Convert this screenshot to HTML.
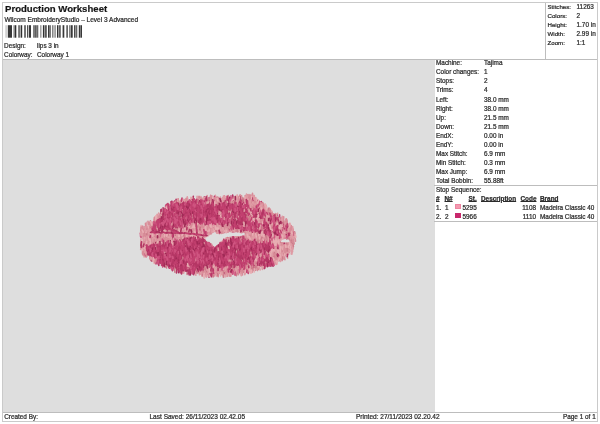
<!DOCTYPE html>
<html><head><meta charset="utf-8"><title>Production Worksheet</title>
<style>
html,body{margin:0;padding:0;background:#fff;}
body{width:600px;height:424px;position:relative;overflow:hidden;font-family:"Liberation Sans",sans-serif;color:#222;}
.t{position:absolute;white-space:nowrap;font-size:6.4px;line-height:8px;color:#2a2a2a;-webkit-text-stroke:0.22px #2a2a2a;}
.b{font-weight:bold;}
.u{text-decoration:underline;text-decoration-thickness:0.7px;text-underline-offset:0.4px;}
.ln{position:absolute;background:#bdbdbd;}
#frame{position:absolute;left:2px;top:2px;width:596px;height:420px;border:1px solid #cacaca;box-sizing:border-box;}
#gray{position:absolute;left:3px;top:59px;width:431.6px;height:353px;background:#dedede;}
</style></head><body><div id="pg" style="position:absolute;left:0;top:0;width:600px;height:424px;will-change:transform">
<div id="frame"></div>
<div id="gray"></div>
<div class="ln" style="left:3px;top:59px;width:594px;height:1px"></div>
<div class="ln" style="left:545px;top:3px;width:1px;height:56px"></div>
<div class="ln" style="left:434px;top:185px;width:163px;height:1px"></div>
<div class="ln" style="left:434px;top:221px;width:163px;height:1px"></div>
<div class="ln" style="left:3px;top:412px;width:594px;height:1px"></div>

<div class="t b" id="title" style="left:5px;top:3px;font-size:9.6px;line-height:12px;color:#111">Production Worksheet</div>
<div class="t" style="left:4.4px;top:15.5px;font-size:6.53px">Wilcom EmbroideryStudio – Level 3 Advanced</div>
<svg id="barcode" style="position:absolute;left:0;top:0" width="90" height="42" viewBox="0 0 90 42"><rect x="5.7" y="25.2" width="0.7" height="12.5" fill="#909090"/><rect x="7.8" y="25.2" width="4.2" height="12.5" fill="#383838"/><rect x="13.5" y="25.2" width="1.3" height="12.5" fill="#707070"/><rect x="15.0" y="25.2" width="1.3" height="12.5" fill="#303030"/><rect x="18.2" y="25.2" width="1.7" height="12.5" fill="#686868"/><rect x="20.6" y="25.2" width="1.6" height="12.5" fill="#303030"/><rect x="24.3" y="25.2" width="1.4" height="12.5" fill="#383838"/><rect x="27.1" y="25.2" width="1.2" height="12.5" fill="#404040"/><rect x="29.0" y="25.2" width="2.0" height="12.5" fill="#383838"/><rect x="33.1" y="25.2" width="1.8" height="12.5" fill="#707070"/><rect x="35.2" y="25.2" width="1.4" height="12.5" fill="#383838"/><rect x="36.9" y="25.2" width="1.4" height="12.5" fill="#686868"/><rect x="40.1" y="25.2" width="1.4" height="12.5" fill="#989898"/><rect x="42.9" y="25.2" width="1.1" height="12.5" fill="#303030"/><rect x="44.4" y="25.2" width="2.4" height="12.5" fill="#585858"/><rect x="48.0" y="25.2" width="1.0" height="12.5" fill="#383838"/><rect x="49.3" y="25.2" width="1.4" height="12.5" fill="#404040"/><rect x="52.1" y="25.2" width="1.4" height="12.5" fill="#787878"/><rect x="54.2" y="25.2" width="1.8" height="12.5" fill="#a0a0a0"/><rect x="57.0" y="25.2" width="1.0" height="12.5" fill="#303030"/><rect x="58.4" y="25.2" width="2.4" height="12.5" fill="#606060"/><rect x="62.6" y="25.2" width="1.7" height="12.5" fill="#383838"/><rect x="66.4" y="25.2" width="1.4" height="12.5" fill="#404040"/><rect x="69.2" y="25.2" width="1.4" height="12.5" fill="#686868"/><rect x="71.0" y="25.2" width="1.7" height="12.5" fill="#383838"/><rect x="74.1" y="25.2" width="1.4" height="12.5" fill="#383838"/><rect x="75.9" y="25.2" width="1.4" height="12.5" fill="#686868"/><rect x="78.8" y="25.2" width="1.3" height="12.5" fill="#383838"/><rect x="80.4" y="25.2" width="1.6" height="12.5" fill="#383838"/></svg>
<div class="t" style="left:4.1px;top:41.7px;">Design:</div>
<div class="t" style="left:37px;top:41.7px;">lips 3 in</div>
<div class="t" style="left:4.1px;top:50.5px;">Colorway:</div>
<div class="t" style="left:37px;top:50.5px;">Colorway 1</div>

<div class="t" style="left:547.5px;top:2.6px;font-size:6.15px">Stitches:</div><div class="t" style="left:576.5px;top:2.6px;">11263</div>
<div class="t" style="left:547.5px;top:11.6px;font-size:6.15px">Colors:</div><div class="t" style="left:576.5px;top:11.6px;">2</div>
<div class="t" style="left:547.5px;top:20.6px;font-size:6.15px">Height:</div><div class="t" style="left:576.5px;top:20.6px;">1.70 in</div>
<div class="t" style="left:547.5px;top:29.7px;font-size:6.15px">Width:</div><div class="t" style="left:576.5px;top:29.7px;">2.99 in</div>
<div class="t" style="left:547.5px;top:38.7px;font-size:6.15px">Zoom:</div><div class="t" style="left:576.5px;top:38.7px;">1:1</div>

<div class="t" style="left:436px;top:59.2px;">Machine:</div><div class="t" style="left:484px;top:59.2px;">Tajima</div>
<div class="t" style="left:436px;top:68.3px;">Color changes:</div><div class="t" style="left:484px;top:68.3px;">1</div>
<div class="t" style="left:436px;top:77.4px;">Stops:</div><div class="t" style="left:484px;top:77.4px;">2</div>
<div class="t" style="left:436px;top:86.1px;">Trims:</div><div class="t" style="left:484px;top:86.1px;">4</div>
<div class="t" style="left:436px;top:95.6px;">Left:</div><div class="t" style="left:484px;top:95.6px;">38.0 mm</div>
<div class="t" style="left:436px;top:104.7px;">Right:</div><div class="t" style="left:484px;top:104.7px;">38.0 mm</div>
<div class="t" style="left:436px;top:113.8px;">Up:</div><div class="t" style="left:484px;top:113.8px;">21.5 mm</div>
<div class="t" style="left:436px;top:122.9px;">Down:</div><div class="t" style="left:484px;top:122.9px;">21.5 mm</div>
<div class="t" style="left:436px;top:132px;">EndX:</div><div class="t" style="left:484px;top:132px;">0.00 in</div>
<div class="t" style="left:436px;top:141.1px;">EndY:</div><div class="t" style="left:484px;top:141.1px;">0.00 in</div>
<div class="t" style="left:436px;top:150.2px;">Max Stitch:</div><div class="t" style="left:484px;top:150.2px;">6.9 mm</div>
<div class="t" style="left:436px;top:159.3px;">Min Stitch:</div><div class="t" style="left:484px;top:159.3px;">0.3 mm</div>
<div class="t" style="left:436px;top:168.4px;">Max Jump:</div><div class="t" style="left:484px;top:168.4px;">6.9 mm</div>
<div class="t" style="left:436px;top:176.6px;">Total Bobbin:</div><div class="t" style="left:484px;top:176.6px;">55.88ft</div>

<div class="t" style="left:436px;top:185.8px;">Stop Sequence:</div>
<div class="t b u" style="left:436px;top:195px;">#</div>
<div class="t b u" style="left:444.5px;top:195px;">N#</div>
<div class="t b u" style="right:123.3px;top:195px;">St.</div>
<div class="t b u" style="left:481px;top:195px;">Description</div>
<div class="t b u" style="left:520.5px;top:195px;">Code</div>
<div class="t b u" style="left:540px;top:195px;">Brand</div>

<div class="t" style="left:436px;top:203.8px;">1.</div>
<div class="t" style="left:445px;top:203.8px;">1</div>
<div style="position:absolute;left:455px;top:203.5px;width:5.5px;height:5.5px;background:#f39ab0;box-sizing:border-box;border:1px solid #ee84a0"></div>
<div class="t" style="right:123.3px;top:203.8px;">5295</div>
<div class="t" style="right:64px;top:203.8px;">1108</div>
<div class="t" style="left:540px;top:203.8px;">Madeira Classic 40</div>

<div class="t" style="left:436px;top:213.2px;">2.</div>
<div class="t" style="left:445px;top:213.2px;">2</div>
<div style="position:absolute;left:455px;top:212.5px;width:5.5px;height:5.5px;background:#c8286c;"></div>
<div class="t" style="right:123.3px;top:213.2px;">5966</div>
<div class="t" style="right:64px;top:213.2px;">1110</div>
<div class="t" style="left:540px;top:213.2px;">Madeira Classic 40</div>

<div class="t" style="left:4.2px;top:412.6px;">Created By:</div>
<div class="t" style="left:149.5px;top:412.6px;font-size:6.53px">Last Saved: 26/11/2023 02.42.05</div>
<div class="t" style="left:356px;top:412.6px;font-size:6.53px">Printed: 27/11/2023 02.20.42</div>
<div class="t" style="right:4.3px;top:412.6px;">Page 1 of 1</div>
<svg id="lips" style="position:absolute;left:132px;top:184px" width="172" height="104" viewBox="132 184 172 104">
<polygon fill="#d88c98" stroke="#dedede" stroke-width="2.4" points="141.0,230.0 142.0,228.0 146.0,226.5 152.5,220.0 159.5,212.8 166.7,206.3 173.2,202.0 182.8,199.0 193.7,198.0 203.6,197.3 214.0,197.3 228.0,196.9 242.5,196.3 253.0,195.0 256.0,199.5 259.5,201.5 263.5,203.7 268.0,209.0 276.5,214.4 285.0,219.3 291.8,227.5 294.6,234.0 294.5,239.0 292.6,243.4 291.6,252.5 286.6,256.6 281.4,260.4 273.5,264.5 262.7,267.4 251.3,271.3 240.0,274.2 228.3,274.8 214.2,275.8 204.2,276.0 193.7,273.6 182.4,273.0 172.5,269.6 162.6,265.3 152.9,261.0 144.6,254.2 141.8,249.0 141.8,239.2"/>
<polygon fill="#bd3d6c" points="151.0,231.5 151.5,226.5 155.0,222.5 160.5,215.5 167.5,208.0 174.0,204.0 183.0,201.0 194.0,200.0 204.0,199.5 215.0,200.3 228.0,200.5 242.0,200.0 250.0,199.3 255.0,203.0 262.0,207.0 268.0,212.0 277.0,218.0 284.0,223.0 289.0,229.0 288.0,235.0 281.0,237.0 272.0,234.0 262.0,233.0 250.0,231.0 243.0,229.5 236.0,229.0 228.0,229.0 221.0,227.0 214.0,226.5 206.0,224.5 200.0,223.0 195.0,222.5 189.5,223.5 184.0,225.0 177.0,228.5 165.0,230.0 156.0,231.5"/>
<polygon fill="#bd3d6c" points="150.0,244.0 160.0,242.0 172.0,241.3 182.0,240.3 188.0,238.3 198.0,238.0 205.0,239.5 208.0,243.0 212.0,247.0 217.0,246.0 222.0,242.0 230.0,239.5 240.0,240.0 252.0,241.0 262.0,242.0 272.0,243.0 280.0,246.0 284.0,252.0 280.0,258.0 272.0,263.0 262.0,266.0 250.0,269.0 240.0,271.0 232.0,270.0 226.0,267.0 214.0,266.0 204.0,268.0 196.0,272.0 184.0,271.5 173.0,268.0 163.0,264.0 154.0,259.0 147.0,252.5 146.0,247.0"/>
<polygon fill="#dedede" points="203.5,239.0 207.0,236.5 211.0,233.5 215.0,232.0 219.0,234.0 224.0,233.0 230.0,232.0 238.0,232.3 245.0,233.0 246.0,235.0 240.0,236.0 232.0,236.2 226.0,237.5 222.5,240.0 219.5,243.0 216.5,245.5 214.0,247.5 212.0,243.5 207.5,241.5"/>
<polygon fill="#dedede" points="280.0,239.6 286.0,239.0 290.0,240.0 290.0,242.0 286.0,242.6 281.0,242.0"/>
<g fill="none" stroke-width="1.6" stroke-linecap="round">
<path stroke="#cc7c8a" d="M274.6 255.4l-0.3 2.0M254.7 231.2l0.6 3.4M182.7 257.0l-0.5 3.4M171.1 230.0l0.0 2.5M142.6 247.0l0.8 2.5M183.4 269.6l-0.3 2.9M283.0 251.0l0.6 2.0M290.1 238.0l0.1 1.5M227.9 225.5l-0.4 3.3M260.6 201.8l0.5 1.6M144.2 243.2l0.7 1.6M166.2 230.6l0.2 3.0M282.6 233.0l0.4 2.2M240.9 269.9l-0.4 1.9M277.2 225.9l0.8 3.3M290.5 234.3l0.2 2.3M260.0 222.8l0.7 2.0M274.5 234.0l-0.4 1.6M262.5 206.4l-0.5 2.4M237.1 212.7l0.3 2.9M243.1 236.2l0.0 1.5M227.1 266.5l0.7 2.9M217.2 273.1l-0.2 1.6M169.8 230.4l0.9 2.2M243.5 221.0l-0.5 3.3M173.8 237.3l0.4 2.1M253.1 214.1l-0.5 3.2M153.8 233.9l-0.2 1.7M245.1 264.8l-0.2 2.0M154.0 236.5l0.9 2.2M276.7 240.2l-0.3 1.7M226.6 214.7l0.1 2.9M146.6 230.6l0.7 2.0M269.1 237.3l0.7 1.7M259.6 219.9l-0.6 3.0M251.8 267.7l0.5 2.1M289.4 249.7l-0.3 2.8M289.3 249.7l-0.7 2.5M157.7 232.3l0.9 3.4M281.5 252.5l-0.0 2.4M210.6 201.0l0.3 1.5M190.4 271.3l-0.5 1.9M262.4 238.0l0.8 3.1M277.2 249.8l0.3 1.5M165.3 242.5l-0.5 1.4M199.0 198.9l0.3 3.1M289.4 244.6l-0.5 1.5M272.0 212.1l-0.2 2.0M194.6 233.6l0.7 3.4M202.7 229.4l-0.6 3.1M181.8 269.5l0.2 2.7M283.4 254.3l0.4 1.9M245.4 224.1l0.6 1.6M157.9 230.3l0.1 1.9M276.5 241.2l-0.0 2.0M275.4 251.2l0.0 2.5M289.8 246.8l-0.2 1.9M163.8 237.0l0.7 2.0M216.3 229.3l0.4 3.0M189.1 245.8l0.1 3.4M229.4 223.6l-0.3 2.2M270.2 251.6l-0.2 1.5M147.4 236.8l0.4 3.3M248.8 269.0l0.5 1.9M262.2 208.3l0.7 2.6M209.3 224.8l-0.3 1.8M237.9 218.4l-0.3 1.9M150.2 226.2l0.4 3.1M223.0 230.5l-0.6 2.5M226.5 227.0l-0.5 1.5M211.0 222.2l-0.4 2.2M274.7 260.1l0.9 2.9M248.2 227.6l0.1 2.4M195.7 233.7l-0.1 1.8M237.5 251.0l0.8 3.1M257.2 256.9l-0.0 2.5M243.6 222.5l0.6 2.9M241.1 230.3l0.7 2.3M219.2 224.5l0.2 1.5M234.9 196.9l0.7 3.1M251.3 239.7l0.2 1.5M236.2 200.4l0.6 3.1M249.0 267.8l0.5 1.7M247.9 235.7l-0.3 2.8M289.8 234.7l0.8 3.2M278.4 255.7l-0.0 1.6M163.9 230.4l0.8 2.3M250.1 264.4l0.1 2.9M174.6 238.4l-0.5 1.9M278.1 257.4l0.1 1.6M194.1 199.0l0.8 1.7M276.9 220.2l-0.3 3.2M237.4 204.2l0.6 2.2M205.7 225.5l0.3 1.9M277.9 252.6l0.8 1.8M268.1 239.6l0.4 1.6M261.2 222.4l0.7 1.9M272.9 257.5l0.9 1.6M267.1 212.2l0.0 3.4M195.4 229.7l-0.6 1.7M152.9 235.3l0.6 2.8M237.9 201.6l-0.4 3.4M157.8 239.5l-0.7 1.8M184.1 234.8l0.7 2.3M252.7 207.9l0.2 2.5M203.5 268.5l0.3 2.9M223.2 202.1l0.9 2.4M224.3 270.0l-0.3 3.0M152.8 234.2l0.8 2.8M248.5 212.1l0.3 2.9M153.3 222.2l0.3 2.1M221.6 216.5l-0.4 1.5M199.2 196.9l-0.1 2.6M254.1 195.7l-0.4 3.3M294.7 233.5l-0.4 2.8M258.5 266.7l-0.3 2.6M227.4 273.6l0.2 2.7M187.1 271.0l0.0 3.5M141.1 230.8l-0.5 2.9"/>
<path stroke="#d88c98" d="M276.4 249.1l0.9 1.6M281.2 223.4l-0.2 2.6M155.6 236.1l-0.4 1.9M163.4 234.2l-0.6 2.6M272.8 250.4l-0.1 1.4M185.7 234.2l0.9 3.3M230.3 271.7l-0.5 1.8M165.7 240.0l-0.4 1.7M202.5 223.3l-0.3 3.1M259.5 238.4l-0.3 1.9M194.5 259.8l0.1 2.0M249.5 230.0l-0.0 2.7M257.7 211.2l-0.0 2.1M177.8 237.3l0.7 1.9M218.2 227.5l0.8 2.5M243.4 261.6l0.1 2.8M228.4 238.7l-0.5 3.4M250.0 234.9l-0.1 2.2M174.6 212.7l0.4 3.2M193.7 232.5l-0.2 1.8M147.9 227.1l0.6 3.3M208.0 265.2l0.6 1.9M241.7 270.3l-0.3 2.8M285.8 229.6l0.0 2.7M149.1 239.3l-0.3 1.8M152.5 234.3l-0.2 1.9M256.5 201.2l-0.1 2.2M251.7 205.8l-0.7 2.9M158.1 235.6l-0.4 2.5M202.3 234.1l0.7 1.6M212.7 264.4l-0.1 1.8M218.8 198.3l-0.6 2.1M219.8 213.0l-0.4 2.7M221.6 227.6l-0.2 2.6M248.5 198.4l0.1 2.7M248.5 264.5l-0.4 1.8M286.3 221.4l0.6 2.2M283.0 229.6l0.7 2.0M221.0 229.2l0.9 2.0M224.3 217.8l0.8 1.5M277.8 247.8l0.7 2.0M226.5 202.1l0.8 2.1M238.4 221.5l-0.3 2.1M180.3 228.3l0.3 1.8M251.7 240.5l0.5 2.5M210.9 230.9l-0.6 2.9M221.4 271.8l0.7 2.4M169.9 236.2l0.7 1.9M275.7 215.1l0.0 1.7M183.3 234.6l0.8 1.9M148.1 238.8l-0.1 2.3M159.1 239.8l0.7 2.5M245.9 231.1l-0.6 3.1M248.4 266.6l-0.5 2.5M157.3 235.1l-0.1 2.4M283.1 243.7l-0.6 3.4M207.8 200.2l-0.6 1.5M196.4 221.7l0.4 1.6M144.9 243.2l-0.6 3.3M195.6 224.2l0.2 2.6M221.3 209.7l0.8 1.7M185.1 227.7l-0.5 3.0M278.3 237.3l-0.1 2.6M236.1 268.3l-0.2 3.1M216.0 269.5l-0.6 2.8M290.2 231.0l-0.0 2.1M279.6 225.7l-0.7 2.6M157.5 230.8l-0.2 2.2M142.4 246.6l0.1 2.5M146.4 228.7l0.4 2.8M202.1 231.6l0.2 2.0M170.3 236.2l-0.3 2.9M172.3 241.2l-0.4 2.0M206.4 232.8l0.0 2.3M276.4 249.8l-0.3 2.7M217.5 198.9l-0.2 2.7M224.3 242.0l0.7 2.6M144.9 229.0l0.6 1.4M248.5 196.2l-0.6 2.1M156.1 240.6l0.4 2.5M279.4 248.0l0.5 3.3M218.0 201.6l-0.2 2.2M183.8 228.7l0.8 3.2M145.3 238.5l-0.5 2.2M225.7 268.2l-0.2 3.3M202.1 200.6l0.9 2.9M161.8 234.1l0.4 3.2M166.6 234.4l0.7 3.0M235.2 229.1l-0.4 2.8M277.7 258.1l0.7 2.0M149.8 258.0l0.6 1.5M178.5 229.5l0.4 1.8M256.2 201.7l-0.7 2.1M222.6 226.5l-0.5 1.9M262.2 254.1l0.9 3.1M276.4 256.9l-0.6 1.7M202.7 199.7l0.5 2.0M267.4 214.8l-0.4 2.2M248.4 229.5l-0.1 1.6M201.9 226.6l-0.3 2.0M177.7 201.4l-0.3 2.1M217.0 271.4l-0.2 1.5M287.3 243.9l0.7 2.0M165.1 238.6l-0.3 2.1M245.7 244.5l0.8 2.6M233.0 201.9l-0.1 1.9M193.2 223.7l-0.1 2.7M247.7 233.4l-0.6 1.9M193.4 236.9l-0.7 1.4M292.1 241.9l-0.6 2.3M207.7 266.4l0.1 1.8M261.8 233.5l0.5 2.9M255.6 227.5l-0.3 1.7M279.0 256.7l-0.6 3.1M251.9 195.4l-0.5 2.8M261.1 229.2l0.9 2.2M236.6 269.5l-0.5 3.3M261.6 209.7l-0.1 2.3M150.8 230.5l-0.6 2.9M252.2 201.7l-0.6 1.5M146.7 243.2l0.4 3.0M292.0 237.1l0.8 3.1M157.0 232.9l0.9 3.3M189.0 223.1l0.4 3.0M158.4 237.2l-0.6 3.3M251.0 217.0l-0.6 2.1M167.2 236.0l0.3 1.9M214.5 263.9l-0.6 3.1M217.9 197.3l0.4 2.5M275.2 252.5l0.2 2.1M211.0 203.9l-0.4 2.2M220.1 232.0l-0.6 1.6M269.9 220.1l0.7 1.6M175.2 211.7l-0.2 2.9M212.7 255.8l0.3 1.8M247.4 215.4l0.2 1.6M241.2 269.4l0.1 2.6M274.1 245.5l0.8 2.1M191.1 226.7l-0.1 2.1M196.6 229.1l-0.0 2.6M226.7 201.6l-0.0 1.8M174.7 201.6l0.1 2.5M258.1 218.8l-0.2 1.7M219.1 265.2l-0.1 2.8M147.8 241.8l0.2 2.2M192.5 225.6l0.4 2.3M281.4 258.0l0.9 2.4M161.7 237.2l0.5 1.8M282.9 219.1l0.3 3.1M160.9 261.5l0.9 1.7M254.2 246.7l0.7 1.7M259.4 234.8l0.8 2.4M167.8 239.2l0.5 2.9M284.2 235.9l0.4 2.0M179.6 229.4l-0.2 2.0M210.1 225.5l0.9 2.8M160.2 234.7l0.6 1.5M257.4 256.4l0.2 2.2M235.3 257.0l0.1 1.5M149.6 245.0l-0.4 2.3M282.6 229.0l0.5 1.6M274.5 256.2l0.5 2.7M180.6 238.5l-0.2 2.2M180.2 235.5l0.5 1.8M146.4 232.1l0.5 2.8M196.1 258.2l-0.3 1.6M269.5 239.8l0.6 1.8M201.0 238.3l-0.6 2.3M277.3 246.3l0.1 2.8M287.8 252.1l0.9 1.9M279.7 253.5l-0.2 2.2M270.0 255.6l-0.3 2.4M284.1 233.1l-0.0 1.6M194.8 199.7l-0.5 2.0M272.5 255.4l0.7 1.7M151.3 226.5l0.7 1.5M289.2 227.2l0.2 2.9M276.9 250.8l0.8 2.7M183.8 225.2l0.6 1.7M290.8 230.4l-0.3 3.1M271.6 247.6l0.8 2.0M280.2 254.3l-0.2 1.7M226.2 224.4l-0.3 2.9M237.6 239.7l-0.5 1.6M247.0 222.4l0.2 3.3M226.5 270.3l0.8 2.2M218.4 201.1l-0.5 3.1M259.5 240.4l-0.6 3.2M254.2 231.8l0.3 3.1M193.5 236.2l-0.4 2.6M283.3 234.9l0.3 1.5M234.4 216.8l-0.2 2.4M270.8 227.2l0.8 3.0M250.4 232.5l-0.0 2.0M143.8 231.8l0.6 1.4M146.7 242.2l-0.7 3.2M217.4 200.2l-0.2 3.1M253.8 234.1l0.8 3.3M238.5 271.0l-0.0 2.3M283.4 225.8l-0.1 1.8M249.1 195.4l-0.1 1.9M265.5 237.8l-0.1 3.1M156.9 240.6l0.6 2.0M154.6 238.4l0.8 2.8M275.0 245.5l0.1 3.0M249.9 209.4l0.4 2.1M177.5 229.2l-0.3 2.2M149.7 242.9l0.4 2.8M254.3 237.1l0.5 2.5M217.3 261.2l0.5 2.3M272.4 254.1l-0.5 2.1M169.6 238.4l0.7 3.1M274.9 247.0l-0.6 2.6M152.7 237.6l0.1 1.6M223.5 228.3l0.7 2.8M211.8 273.3l0.9 1.9M250.8 209.7l-0.0 3.0M266.1 234.0l-0.6 2.1M148.0 236.5l0.5 3.1M173.2 230.7l-0.3 2.1M208.5 200.8l-0.2 2.7M242.1 267.0l0.2 2.5M250.3 251.8l-0.3 3.3M244.6 225.9l0.6 3.0M156.4 239.7l0.2 2.9M203.3 229.7l0.1 2.8M226.6 200.0l-0.6 2.7M276.0 249.4l0.3 2.1M267.7 236.8l-0.3 2.2M284.8 230.2l-0.1 3.0M186.3 263.4l0.5 3.3M153.4 257.5l-0.3 3.3M142.5 226.3l0.3 3.4M148.0 221.3l0.6 3.3M178.3 198.8l-0.3 4.2M199.0 196.2l0.0 4.3M210.8 195.6l-0.2 2.9M224.4 195.8l0.4 2.6M245.2 195.5l-0.2 2.8M252.5 193.2l0.1 4.2M275.3 213.5l0.5 2.7M290.5 225.1l0.4 2.9M294.9 237.0l0.6 4.1M292.8 245.3l0.2 3.7M252.5 269.0l-0.1 3.1M238.1 271.9l0.4 2.7M218.5 274.1l-0.3 2.5M150.1 256.4l0.6 3.7M142.6 249.7l-0.1 4.4"/>
<path stroke="#df9ba4" d="M288.3 231.4l0.2 2.4M263.6 218.2l-0.6 2.0M253.6 203.6l-0.1 1.9M197.6 226.3l-0.4 2.5M249.1 214.8l-0.6 3.0M278.9 236.2l0.9 2.7M152.4 222.8l0.6 2.4M238.0 237.5l0.2 1.9M220.6 198.6l-0.6 1.5M199.2 221.8l0.6 2.7M186.3 226.2l0.3 1.7M189.2 233.6l0.7 2.7M272.6 253.3l0.2 2.4M199.0 198.8l0.6 3.0M269.9 215.8l0.8 1.9M144.6 242.6l0.6 3.0M218.1 260.8l-0.3 2.5M282.3 233.5l-0.5 1.7M222.8 226.3l0.4 2.4M162.1 241.3l0.5 1.7M219.8 211.7l-0.1 3.4M167.9 233.2l0.2 2.0M207.0 268.7l0.1 2.5M207.7 225.0l0.1 2.6M235.5 237.6l-0.6 1.8M205.0 233.0l0.3 3.1M220.0 226.5l-0.4 1.8M192.2 233.5l-0.6 3.3M276.5 260.3l-0.5 1.7M208.1 267.4l0.9 2.5M281.9 256.7l0.8 1.4M204.6 272.5l0.4 3.4M193.8 248.0l0.6 1.8M207.4 230.5l0.9 1.7M221.3 213.8l0.2 2.5M213.8 228.8l-0.2 2.6M284.6 221.6l0.0 2.4M265.5 259.7l0.2 1.8M235.9 197.9l-0.2 1.8M257.1 256.0l-0.4 2.9M267.1 209.3l-0.4 2.5M230.1 271.9l0.0 3.0M226.1 271.4l0.7 1.9M167.2 234.9l0.5 2.9M173.5 268.4l0.7 1.9M292.7 237.0l0.1 1.9M237.5 237.8l0.6 3.3M252.2 236.3l0.7 2.5M156.5 259.3l0.4 2.1M227.0 226.8l0.8 2.9M284.4 254.2l-0.0 3.2M209.4 228.0l-0.3 1.8M154.1 219.9l0.3 3.3M189.2 228.4l-0.6 3.1M273.0 229.9l-0.6 2.0M204.4 228.3l0.2 2.1M285.7 231.3l0.1 2.3M202.2 271.3l-0.6 2.6M251.3 222.5l-0.3 2.4M189.3 266.7l-0.5 3.1M255.4 207.9l-0.6 2.3M240.4 210.7l0.7 1.4M248.4 234.4l-0.6 3.0M277.5 249.3l0.7 2.5M165.2 261.2l-0.7 3.0M257.6 219.0l0.4 2.8M241.8 266.0l0.3 1.5M218.3 268.8l0.8 1.8M278.7 246.0l0.7 2.0M168.2 204.8l-0.1 3.0M198.6 219.5l0.1 2.7M182.2 236.6l-0.0 2.7M264.2 231.1l-0.0 1.8M220.2 205.2l0.2 3.2M244.8 268.6l-0.6 3.0M171.4 240.6l-0.4 1.5M195.7 224.0l0.2 1.7M274.7 241.8l-0.5 1.5M216.1 230.8l0.8 2.4M145.7 226.2l0.7 3.1M250.7 236.4l-0.3 3.2M174.7 237.8l0.2 3.4M216.0 229.0l-0.7 2.2M161.8 241.2l-0.3 1.5M209.7 228.9l0.4 1.9M230.2 208.4l0.1 1.7M191.6 227.7l0.7 1.9M233.0 200.3l-0.5 2.8M258.6 203.5l-0.7 2.7M263.0 218.8l-0.1 3.0M165.1 207.9l0.4 2.5M145.1 228.5l-0.4 2.2M210.1 227.5l-0.5 1.5M249.9 236.0l-0.6 1.5M209.0 273.3l0.1 1.7M259.7 240.3l-0.1 3.3M264.3 253.4l0.1 3.3M152.8 244.9l0.3 1.8M148.8 245.2l-0.4 2.5M171.5 236.2l-0.2 1.4M168.5 230.9l-0.0 1.4M227.5 224.6l-0.2 2.5M146.6 251.6l0.4 2.4M218.7 228.9l0.7 2.4M153.1 232.0l-0.4 1.5M236.5 269.3l0.3 3.2M281.8 231.3l0.4 2.8M244.7 224.7l0.2 1.9M199.3 227.7l-0.2 3.0M182.4 229.7l0.7 1.7M252.0 235.7l-0.6 1.4M264.0 204.6l0.5 1.8M247.8 229.7l0.1 1.6M259.9 256.4l-0.2 2.5M232.4 268.0l-0.5 1.8M282.5 245.9l0.7 2.5M262.3 249.4l-0.3 3.1M236.7 266.0l0.4 2.5M262.5 254.5l0.6 2.6M280.5 243.1l-0.6 2.3M185.6 199.1l0.6 2.6M186.6 269.0l0.5 2.9M281.1 217.8l-0.4 2.2M196.6 257.3l0.6 2.0M231.7 198.8l-0.5 3.1M251.9 217.1l0.9 1.5M273.3 254.1l0.8 2.2M153.8 259.1l0.3 2.8M289.7 243.5l0.8 1.9M263.9 232.1l0.7 2.0M267.7 219.2l0.3 1.8M142.9 244.7l-0.0 3.2M266.3 263.1l-0.1 2.1M162.1 236.7l0.5 2.8M192.0 215.8l0.9 2.5M165.6 234.3l0.6 1.6M279.9 237.2l0.8 3.2M156.9 236.4l-0.7 2.4M236.2 238.0l-0.0 2.5M217.2 199.9l-0.2 2.6M181.5 231.2l-0.5 1.7M186.0 245.8l-0.4 2.7M237.6 267.9l0.4 2.7M160.2 235.2l-0.4 2.5M259.8 220.6l0.5 2.5M280.9 248.4l0.5 3.1M209.8 270.7l-0.5 1.4M211.5 197.7l-0.5 2.6M192.7 215.5l-0.5 1.9M248.9 265.3l-0.2 2.9M260.2 223.8l0.9 2.8M189.2 225.2l-0.3 2.4M249.2 228.1l-0.6 1.9M278.5 255.7l0.6 2.9M265.0 236.1l0.8 3.2M168.0 234.3l0.4 2.3M231.2 239.5l0.8 2.1M250.2 231.0l-0.6 2.4M150.7 221.2l-0.6 2.2M230.1 217.0l-0.6 2.7M224.7 216.6l0.1 1.8M256.5 256.4l0.8 2.3M214.8 271.1l-0.1 3.2M247.2 232.6l-0.2 1.7M257.7 232.9l0.7 2.7M193.5 220.1l0.8 1.7M200.0 270.6l-0.5 2.7M150.1 223.9l-0.2 1.8M192.0 221.4l-0.5 2.6M184.2 270.6l-0.6 2.6M201.6 234.5l0.9 2.9M276.2 248.3l-0.6 2.4M171.2 263.8l0.8 2.9M292.5 233.7l-0.1 2.2M290.6 242.5l0.8 1.8M231.6 229.1l-0.4 2.8M226.5 224.4l-0.4 2.2M215.1 203.5l0.6 2.8M254.7 205.7l-0.3 1.6M268.0 239.9l0.6 1.6M160.1 239.0l-0.1 1.8M226.0 266.7l-0.0 2.4M271.5 230.0l0.8 1.6M283.2 232.1l0.5 1.5M279.8 253.8l0.3 3.4M181.7 232.7l-0.4 3.3M257.4 233.7l0.1 2.8M290.3 234.8l-0.3 3.2M275.2 214.7l0.6 1.6M257.3 215.4l-0.7 2.2M262.5 251.4l0.5 3.1M259.0 204.6l-0.4 2.2M171.2 228.6l0.2 2.2M258.2 265.7l0.8 2.3M239.2 237.9l-0.6 3.2M223.8 228.5l-0.2 2.4M209.2 227.1l0.9 2.1M186.3 229.4l-0.0 2.3M208.2 233.2l-0.2 2.6M230.9 218.5l0.3 2.7M280.6 228.7l0.7 3.3M177.2 232.3l0.2 3.1M223.4 228.8l-0.2 1.4M272.2 250.8l0.5 2.0M212.5 267.2l0.9 1.8M217.6 200.6l0.8 1.9M289.8 235.0l0.1 3.2M148.5 239.4l-0.2 2.2M197.3 199.8l-0.1 1.8M258.8 210.9l0.4 2.4M221.5 241.7l-0.6 3.0M289.0 235.6l0.3 2.8M241.6 238.5l-0.5 2.2M180.2 201.6l0.4 2.6M252.8 206.0l0.5 1.8M234.5 266.4l0.9 1.7M249.1 195.9l-0.0 3.2M252.4 234.6l0.4 2.9M249.6 264.1l0.1 2.2M251.1 195.3l-0.7 1.4M206.5 228.9l-0.3 1.7M182.8 235.5l-0.3 3.3M179.8 238.1l0.2 1.5M168.9 235.6l-0.4 3.4M210.7 228.9l-0.3 2.5M261.3 236.1l0.2 2.1M269.7 234.0l-0.2 1.8M185.0 231.2l-0.5 3.2M193.2 230.3l0.9 1.4M214.8 203.1l-0.0 1.5M260.4 206.4l0.8 1.7M211.9 254.6l0.8 3.0M143.6 230.8l0.0 1.5M249.8 237.5l0.6 1.7M254.2 196.6l-0.6 2.3M229.3 227.2l-0.1 2.3M259.7 233.7l0.5 2.4M269.8 214.1l0.6 2.6M206.2 242.3l0.0 2.9M177.6 199.1l-0.5 4.2M200.9 196.5l0.2 3.1M224.4 196.4l-0.5 2.4M240.4 194.9l-0.3 4.2M263.2 203.0l-0.3 4.1M269.3 208.1l0.4 3.3M286.1 218.9l0.1 3.8M292.2 248.8l0.4 3.0M287.3 254.8l0.3 3.4M266.0 264.5l-0.4 2.7M250.4 269.8l-0.2 2.6M231.3 272.5l-0.4 3.7M217.1 272.4l-0.2 3.7M195.3 271.0l0.6 4.3M144.3 252.7l-0.2 4.3"/>
<path stroke="#e8aeb3" d="M281.7 245.0l-0.5 2.2M258.1 264.8l-0.2 3.2M260.4 210.1l0.2 2.0M199.1 268.9l0.7 2.6M252.5 230.6l-0.5 2.3M140.7 230.5l0.4 3.0M284.0 225.2l-0.2 1.4M161.1 241.3l0.3 2.6M156.2 235.8l0.2 1.8M276.8 247.8l-0.6 1.9M191.0 228.3l-0.1 1.4M192.6 232.7l-0.6 1.8M145.5 238.1l0.8 2.1M155.2 236.8l-0.4 2.9M273.9 248.9l-0.6 1.4M244.1 209.6l0.7 3.4M213.1 228.3l0.6 2.5M263.6 255.3l0.4 2.9M192.2 222.2l0.4 1.8M219.2 269.5l0.9 2.6M276.6 219.7l0.6 1.5M279.3 255.3l0.1 1.5M231.8 267.8l0.3 3.2M223.9 217.3l-0.3 1.9M261.5 207.9l0.2 2.7M271.0 229.4l0.4 2.5M195.5 220.9l-0.7 2.5M152.7 233.5l-0.2 2.2M212.7 222.5l0.2 2.7M276.4 242.7l-0.3 2.1M177.6 237.6l0.4 1.5M206.8 233.9l0.2 2.1M175.5 230.0l-0.2 2.7M158.8 230.3l-0.0 3.1M194.5 227.7l0.1 1.7M198.2 230.5l0.6 3.2M175.2 264.2l0.3 1.6M205.6 228.7l0.0 3.2M259.1 210.1l-0.6 1.8M162.6 233.6l0.1 2.0M270.0 226.0l-0.3 3.1M257.8 207.5l-0.1 2.2M236.6 208.7l0.8 1.8M198.1 228.9l-0.5 3.4M182.9 237.1l0.3 3.1M225.6 225.7l-0.3 1.6M210.4 225.7l0.2 3.0M276.4 218.1l0.2 3.3M153.9 240.3l-0.3 3.4M259.2 218.7l0.4 2.7M249.3 230.3l0.8 2.4M272.0 223.9l0.2 1.7M252.2 265.6l0.3 1.6M232.7 197.5l0.2 2.5M187.3 231.0l-0.1 2.9M283.6 244.0l-0.0 3.2M244.2 268.5l0.2 2.3M226.7 229.2l-0.6 1.6M189.6 232.9l0.7 2.0M282.3 224.9l0.0 1.9M172.9 236.8l0.6 2.6M243.2 223.9l-0.2 2.0M214.0 229.1l0.6 1.8M196.8 227.4l-0.3 2.4M223.2 198.3l0.7 2.8M212.8 273.2l0.5 2.2M229.6 270.9l-0.0 1.8M203.8 242.3l-0.3 1.8M250.8 203.7l-0.5 1.5M254.2 235.8l0.8 1.7M248.4 209.2l-0.5 1.4M192.8 249.8l0.0 3.1M275.4 250.9l-0.6 3.4M230.5 227.1l0.1 2.1M235.5 241.3l-0.3 3.3M234.0 229.9l-0.4 1.6M272.0 228.5l0.6 2.5M151.2 234.1l0.3 2.3M291.0 238.3l0.2 2.9M142.0 247.3l0.5 3.3M208.5 228.8l0.4 3.1M287.7 234.0l0.1 2.4M286.1 247.5l-0.6 1.7M198.4 225.7l-0.2 2.1M157.4 232.9l0.7 2.8M165.9 235.2l0.1 2.1M247.8 265.9l0.1 2.9M258.8 200.9l0.7 3.0M193.2 249.2l-0.0 1.6M208.2 200.6l-0.5 2.7M288.9 226.8l-0.4 1.5M248.3 230.0l0.8 2.9M216.1 202.8l-0.1 2.5M169.1 233.8l0.4 3.4M156.4 227.6l-0.4 1.4M212.7 224.0l0.5 2.7M291.8 238.2l-0.4 1.7M240.8 229.5l0.0 3.2M203.2 227.3l0.1 2.1M163.2 234.8l0.3 2.9M168.5 233.1l0.5 1.8M150.6 241.8l-0.4 2.6M274.5 250.4l-0.4 2.6M209.4 267.8l-0.7 3.4M195.2 223.2l0.6 1.7M226.2 237.8l0.6 2.1M247.7 227.8l-0.2 1.6M144.2 243.2l0.9 2.9M230.4 271.4l-0.1 1.8M252.2 234.4l0.3 1.8M236.3 217.7l-0.1 2.3M214.8 200.3l0.2 1.5M217.0 269.3l0.4 2.7M217.5 273.3l-0.4 1.5M171.7 236.4l-0.3 1.4M156.9 215.1l-0.0 3.9M256.8 199.0l0.0 4.0M271.5 210.5l0.5 3.6M277.0 260.3l0.1 3.8M250.1 269.7l0.1 3.4M204.0 275.4l0.2 2.6M141.1 235.7l-0.0 3.5"/>
<path stroke="#a02a56" d="M243.9 246.5l-0.7 1.7M236.7 260.0l0.6 2.2M167.0 245.9l-0.5 3.3M177.8 225.6l-0.4 1.5M169.6 219.2l0.6 2.9M222.0 255.1l-0.0 3.0M221.4 211.6l-0.2 2.5M168.2 248.1l0.7 1.8M156.0 222.6l-0.3 2.7M256.9 226.6l0.9 2.8M229.0 197.0l-0.2 3.4M183.1 202.3l-0.3 2.8M272.6 223.3l-0.1 1.9M159.1 225.3l-0.5 2.5M208.4 214.9l0.7 2.1M210.6 252.7l-0.2 2.8M247.0 218.7l-0.1 2.4M263.8 213.2l0.4 1.6M236.8 248.0l0.3 3.1M194.0 205.8l0.3 2.3M266.2 241.7l-0.5 2.2M272.3 261.3l0.2 2.8M192.7 209.6l0.4 2.5M227.4 257.2l0.1 3.1M207.1 213.7l-0.6 3.3M274.8 230.1l-0.2 1.7M238.7 257.8l0.5 3.3M264.6 255.8l0.0 2.1M275.9 216.8l-0.6 3.2M178.7 214.7l-0.7 2.4M189.6 216.2l0.5 1.9M194.5 209.8l-0.1 2.6M183.4 216.9l0.2 2.0M184.1 212.0l0.9 3.1M213.0 247.9l0.2 1.5M246.5 258.8l0.4 2.7M261.3 248.7l0.8 3.4M244.0 252.9l0.5 2.8M181.6 202.9l-0.2 3.0M238.6 205.1l0.6 2.0M195.7 203.0l0.5 2.6M248.2 259.9l0.4 1.8M195.3 212.1l-0.2 1.8M268.6 245.0l-0.7 2.8M225.6 209.3l0.8 2.2M173.5 223.1l0.0 1.8M210.0 258.2l0.7 1.5M177.1 216.8l-0.7 2.3M252.8 246.2l0.7 1.9M273.2 231.7l0.7 1.6M186.2 226.6l0.6 2.6M198.4 246.3l-0.2 3.3M171.8 263.5l0.3 2.4M186.0 210.6l0.0 3.3M189.1 242.8l0.0 3.4M202.5 205.5l-0.0 2.3M191.4 266.4l-0.4 2.3M190.8 256.2l0.1 1.4M184.3 210.3l0.5 2.7M272.2 262.6l0.3 1.9M191.4 214.1l0.6 2.1M230.0 220.3l-0.7 2.1M161.8 252.5l0.2 1.7M174.9 242.0l-0.5 1.9M243.5 236.9l-0.7 2.2M238.8 225.8l-0.3 1.5M209.1 252.3l0.4 2.8M254.5 258.3l-0.5 2.9M193.3 265.6l0.6 2.4M277.4 233.4l-0.0 1.7M239.2 222.4l-0.1 1.8M189.2 218.0l0.6 3.1M170.2 216.0l0.7 3.0M192.4 241.4l-0.5 1.8M213.2 210.1l0.2 1.7M198.7 239.9l-0.4 1.4M177.3 254.0l0.6 3.0M162.5 249.5l-0.5 3.0M243.4 228.1l0.3 2.0M259.6 248.5l0.3 2.5M226.1 221.1l-0.3 1.4M165.9 210.7l-0.2 3.1M268.3 224.2l0.8 2.3M261.4 256.7l-0.6 1.8M239.5 211.7l-0.0 1.6M233.6 269.0l-0.2 2.7M245.6 243.2l0.6 1.8M269.3 245.1l-0.0 2.9M218.4 248.5l0.6 2.8M229.4 212.2l0.2 3.2M277.7 217.5l-0.5 2.5M179.7 253.3l-0.5 2.3M256.8 251.3l0.3 2.3M181.0 221.4l0.7 1.4M157.5 223.4l0.7 2.3M242.6 242.1l0.4 2.8M264.7 218.0l0.0 2.9M205.3 244.1l0.7 2.7M277.4 228.2l0.2 2.2M224.5 257.8l-0.5 2.7M293.0 241.1l-0.6 1.5M176.6 239.4l-0.5 2.3M201.6 209.4l0.6 1.9M269.9 247.4l0.1 1.9M242.4 262.3l0.7 2.8M217.5 218.0l-0.3 2.7M164.3 226.3l0.9 2.1M241.0 206.6l0.2 3.1M184.6 203.4l-0.3 1.9M202.8 240.9l0.6 2.4M238.6 214.9l-0.2 1.6M165.5 255.7l-0.1 3.1M196.7 242.2l0.1 1.9M257.0 229.9l-0.7 3.2M182.3 224.3l0.2 2.9M182.2 262.2l0.5 2.8M198.7 238.4l-0.3 2.3M254.5 253.3l0.6 3.2M252.1 222.6l-0.4 2.3M198.9 250.0l0.0 1.4M240.1 246.8l-0.7 2.9M187.2 244.2l-0.6 3.3M155.0 254.8l-0.6 2.4M170.2 240.6l-0.1 2.1M167.8 208.8l0.6 1.7M171.6 221.5l-0.3 1.7M199.4 200.8l0.5 3.1M254.1 256.5l-0.2 3.3M187.6 219.8l0.6 2.5M217.7 207.0l0.0 2.1M195.7 216.8l-0.6 1.4M249.7 227.8l0.6 1.8M197.7 216.6l0.4 1.5M177.5 258.9l0.3 2.1M185.6 260.4l0.7 1.9M234.8 253.9l-0.5 1.6M254.2 222.8l0.7 1.5M155.6 224.8l-0.3 2.5M175.7 245.3l0.3 3.1M231.7 222.2l0.3 1.7M235.7 208.7l-0.7 1.5M164.3 214.5l0.3 1.7M254.0 262.1l0.6 2.5M221.0 245.4l0.4 2.3M244.8 217.7l0.5 1.9M203.2 212.9l-0.5 1.8M191.9 262.6l0.5 2.3M162.7 244.6l0.9 1.4M259.3 211.8l0.5 2.9M180.2 213.8l0.0 1.7M243.2 208.3l0.5 1.5M195.7 215.8l0.6 3.3M230.2 250.6l-0.3 1.5M154.7 244.7l-0.1 2.7M199.3 265.4l0.8 3.1M172.6 209.0l-0.1 3.4M258.8 251.4l-0.2 3.2M170.3 240.7l0.3 2.5M242.9 246.7l-0.2 2.4M240.6 229.5l0.4 1.8M171.5 212.5l0.2 3.0M238.5 262.4l0.4 3.3M170.3 246.0l0.8 3.1M225.7 244.9l0.2 1.7M247.7 261.6l0.4 1.8M159.1 228.0l0.6 3.4M254.1 215.6l-0.4 1.5M250.1 261.3l0.6 2.2M241.0 213.7l-0.2 2.6M188.7 205.7l-0.2 1.5M180.6 222.9l-0.6 2.6M204.8 201.1l-0.7 2.3M271.2 260.2l-0.5 2.7M206.1 253.3l0.3 1.9M184.3 239.5l-0.2 1.7M152.3 250.3l0.5 2.5M268.7 247.1l-0.1 3.2M160.4 255.5l0.8 3.3M253.5 250.6l-0.4 2.4M213.5 263.1l-0.3 2.1M204.1 207.4l-0.1 3.4M172.7 227.9l0.2 2.6M171.5 204.0l-0.2 1.7M186.0 263.8l0.8 3.1M289.4 233.2l0.8 2.0M206.2 210.6l0.3 2.5M277.3 217.5l0.8 1.4M155.9 239.4l-0.4 2.8M234.7 245.5l0.7 3.0M253.3 230.0l-0.7 1.7M191.1 260.4l0.1 2.6M207.5 211.5l-0.1 3.0M255.2 213.7l0.5 1.9M229.8 243.8l0.6 1.7M170.2 217.3l0.0 2.3M244.9 254.2l-0.0 2.6M185.3 242.1l0.4 1.9M194.2 210.6l-0.2 1.8M236.6 222.3l-0.6 1.7M199.0 240.5l-0.0 1.7M222.3 199.0l0.2 1.5M176.4 217.1l0.8 2.0M153.4 249.7l0.1 2.3M226.8 241.8l-0.1 2.2M255.2 256.6l0.2 2.6M221.4 220.7l0.4 1.8M208.4 253.5l0.1 2.0M233.2 252.3l0.4 2.5M177.2 216.9l-0.2 2.1M171.8 201.2l0.4 2.9M178.8 270.0l-0.2 2.8"/>
<path stroke="#b43664" d="M221.0 248.5l0.4 2.4M204.1 262.9l0.2 3.1M155.7 228.0l0.7 3.0M211.7 260.9l0.0 2.1M269.5 246.7l-0.4 2.9M171.3 260.8l0.5 2.4M163.5 260.2l0.2 2.0M237.2 214.4l0.2 2.2M234.3 213.9l0.6 1.9M261.9 258.0l-0.3 1.9M250.1 221.6l-0.7 1.9M189.3 261.3l-0.6 2.4M161.4 246.7l0.2 2.4M272.7 260.5l-0.5 3.4M165.7 220.3l-0.5 3.4M181.3 249.3l0.2 1.5M201.2 250.4l0.9 1.8M182.0 252.8l0.9 1.6M261.6 242.5l0.8 3.2M178.6 243.2l-0.2 2.5M171.3 264.1l0.3 2.4M193.8 237.0l0.3 3.3M191.7 256.0l-0.0 1.4M164.1 212.4l0.4 2.7M207.2 260.4l0.2 2.6M199.1 238.3l-0.7 1.5M239.2 213.4l0.3 2.0M205.0 217.0l-0.2 2.2M218.6 264.7l0.8 2.2M266.5 245.4l0.0 1.4M223.0 243.3l0.9 1.4M262.6 258.2l0.0 2.0M172.7 209.8l0.3 2.3M236.8 246.3l-0.2 3.3M247.7 240.4l-0.3 2.5M194.7 201.6l-0.4 3.2M232.4 258.9l-0.2 3.4M244.6 210.0l0.2 2.6M280.6 254.6l0.8 3.1M214.5 213.6l0.1 3.0M227.9 256.5l-0.4 2.9M250.2 222.1l0.6 2.6M195.1 216.5l-0.3 1.5M233.6 250.5l0.2 2.5M168.4 243.0l-0.6 2.8M171.4 209.4l0.4 3.4M197.2 212.6l0.2 3.4M188.7 243.8l-0.6 2.2M237.2 261.8l0.4 2.8M224.6 257.0l0.8 3.1M202.4 240.9l0.3 3.2M249.3 211.5l-0.1 2.7M170.1 257.4l-0.7 2.7M247.9 255.8l-0.3 3.4M248.1 196.8l-0.4 3.3M186.6 214.4l0.8 2.3M246.1 202.3l0.5 1.9M212.1 258.8l-0.1 1.7M188.1 216.9l0.0 3.4M174.4 250.9l0.7 2.9M178.8 216.2l-0.3 1.5M188.7 242.7l-0.2 2.7M190.2 202.7l-0.5 2.8M192.4 209.6l0.3 1.8M240.4 238.5l0.6 3.0M202.7 259.2l0.0 2.9M205.4 256.3l0.3 3.2M213.4 206.6l-0.3 2.2M264.2 210.5l0.4 2.3M225.5 200.5l-0.6 2.1M173.0 255.0l0.8 2.1M252.0 228.3l0.3 3.1M232.4 244.4l0.5 2.2M169.2 209.2l0.4 1.5M192.7 215.4l0.0 1.4M171.9 213.3l0.1 1.9M280.4 223.5l0.3 1.4M265.8 233.4l0.9 2.8M253.5 243.8l-0.5 2.9M183.4 205.5l-0.3 3.2M237.5 201.6l0.3 2.9M154.3 252.1l0.7 2.0M216.7 206.3l-0.3 2.2M206.6 244.4l0.7 2.3M275.6 230.6l-0.3 2.8M230.4 221.5l-0.2 1.9M231.6 222.4l-0.3 2.8M204.6 258.1l0.6 2.9M161.9 252.8l0.0 3.0M189.6 251.3l-0.3 3.4M173.8 244.7l0.8 1.4M274.6 228.9l-0.1 1.6M222.7 243.5l-0.2 3.3M219.6 249.0l0.2 2.6M167.9 245.4l-0.5 1.7M178.4 211.5l-0.1 2.9M248.0 224.2l0.1 2.6M194.0 262.7l-0.2 3.1M169.3 264.7l-0.4 1.4M173.5 255.1l-0.4 3.3M181.0 211.6l-0.6 2.2M171.9 260.7l0.6 2.8M170.9 216.8l0.6 1.5M238.0 199.8l0.5 3.0M188.9 216.7l-0.5 3.4M244.6 213.6l0.1 2.9M238.9 265.0l-0.4 2.7M229.1 257.6l-0.1 2.1M153.8 251.3l-0.0 2.1M212.9 204.5l-0.7 2.6M194.4 266.0l-0.2 1.8M200.7 256.3l-0.0 1.7M175.7 221.9l-0.2 1.9M241.1 259.5l-0.3 2.9M187.1 256.7l0.2 1.8M188.8 218.8l-0.5 3.0M236.3 204.9l0.6 1.5M167.0 217.5l0.1 1.4M191.3 251.0l0.3 2.8M223.5 261.9l-0.3 2.0M229.5 268.2l-0.2 2.2M185.2 244.1l-0.0 2.9M206.0 222.3l0.3 1.5M270.1 232.5l0.0 2.5M200.1 266.6l-0.1 1.8M183.5 241.4l0.7 2.7M255.9 229.1l-0.5 3.1M180.2 262.4l0.7 1.9M192.1 210.8l-0.4 1.7M211.6 251.0l0.1 1.8M208.4 244.0l0.8 2.2M267.2 263.5l0.1 2.3M200.5 242.8l0.7 2.8M208.0 248.1l0.8 3.0M251.8 222.8l-0.6 3.0M161.9 213.7l0.3 1.6M174.5 262.4l-0.5 3.1M236.2 220.8l-0.3 2.5M166.4 257.8l-0.6 2.1M187.7 213.9l0.8 2.3M207.8 212.9l0.2 3.1M213.5 199.6l-0.2 2.5M232.2 268.9l0.7 3.2M240.9 267.2l-0.1 1.5M220.4 207.8l0.1 2.3M225.7 227.1l0.3 1.7M203.3 254.1l0.5 3.0M183.8 207.4l0.7 3.2M238.1 254.0l0.9 2.6M168.8 211.1l0.0 1.9M167.4 259.8l0.6 1.5M221.1 243.6l-0.5 1.8M183.1 260.7l-0.1 1.7M270.3 249.5l0.2 2.3M276.8 227.9l0.5 2.7M251.9 226.0l-0.6 1.6M214.5 257.3l-0.6 2.5M191.8 239.0l0.7 2.5M189.8 217.3l0.3 3.0M172.6 226.4l-0.3 3.2M168.0 256.2l-0.6 3.1M229.7 262.4l-0.2 2.0M242.3 223.9l0.1 3.1M181.5 242.4l0.5 3.1M215.6 205.1l-0.2 2.2M223.9 250.3l0.2 1.7M248.6 244.2l0.3 3.1M251.2 209.4l0.7 2.8M221.4 202.8l0.1 2.7M192.0 252.9l-0.4 3.0M187.3 244.0l-0.0 2.4M165.2 224.7l-0.1 3.1M225.1 245.1l-0.4 2.3M199.5 263.7l0.2 3.0M229.4 268.3l-0.6 1.8M162.5 243.7l0.4 2.8M247.6 217.5l0.5 2.2M256.1 245.8l-0.0 2.5M242.4 199.0l-0.7 2.9M168.9 262.0l0.0 2.7M204.7 217.6l0.6 2.7M243.2 206.9l0.0 2.1M268.9 259.6l0.4 2.2M180.6 213.4l-0.0 2.0M195.2 208.2l-0.0 1.7M179.5 270.1l0.5 1.8M193.4 240.8l0.0 3.1M168.5 219.6l0.5 2.6M175.3 226.5l-0.3 3.0M251.6 257.4l-0.4 2.7M247.2 245.6l-0.0 1.9M208.8 256.6l0.3 2.7M224.4 244.7l-0.5 2.4M204.8 250.7l0.6 3.1M204.0 245.3l-0.5 2.8M215.2 220.3l-0.7 2.5M177.7 211.2l0.6 2.9M150.1 253.3l-0.6 2.1M233.9 269.9l-0.6 3.3M196.0 200.5l-0.1 1.6M208.1 263.4l-0.6 2.0M197.6 199.6l-0.7 2.9M187.7 242.2l0.8 3.3M247.8 197.9l0.1 1.8M161.0 217.5l0.1 1.8M267.2 257.0l0.3 2.9M211.9 258.1l0.8 2.0M164.3 244.8l0.7 3.0M200.2 204.0l0.6 2.5M262.4 252.2l0.6 2.7M219.1 256.4l0.7 2.3M268.8 241.5l-0.4 2.7M260.8 227.4l0.7 2.2M253.5 213.0l-0.3 3.1M190.1 247.5l0.2 1.9M187.5 246.8l0.0 1.8M263.3 262.8l-0.1 2.5M183.9 217.1l0.7 2.3M270.4 236.0l0.1 3.1M167.0 216.3l-0.1 2.6M181.5 248.7l0.1 3.0M179.1 256.2l-0.4 2.4M203.3 249.9l-0.3 2.4M242.3 214.2l-0.6 3.3M203.9 207.6l-0.6 1.5M257.3 261.2l-0.6 2.0M189.2 255.6l-0.2 1.8M190.0 244.2l-0.1 2.6M236.0 208.7l0.6 2.2M180.7 262.6l0.8 2.0M174.6 248.5l0.2 1.5M227.1 208.5l-0.3 2.4M255.7 207.8l0.9 2.6M216.4 206.6l-0.2 2.5M188.4 247.9l0.3 2.0M181.5 241.0l0.7 3.2M191.2 241.2l0.7 2.8M162.8 252.7l0.8 2.0M171.5 226.1l-0.4 3.2M189.8 258.5l0.4 1.4M221.8 222.5l0.6 2.6M232.9 238.0l-0.2 2.0M201.1 262.1l0.1 2.9M232.1 251.5l-0.7 2.7M251.3 252.9l0.6 3.2M229.6 248.7l0.0 2.6M158.0 219.5l-0.3 3.4M220.8 252.7l0.9 3.0M249.7 258.2l0.3 2.1M160.9 228.3l-0.1 2.1M266.5 248.0l0.3 3.2M190.4 230.2l-0.4 3.0M268.5 240.9l0.5 1.6M237.9 223.4l-0.1 1.8M227.6 210.4l-0.2 2.7M183.1 267.2l-0.3 3.2M161.9 255.2l-0.2 2.9M214.0 263.1l-0.4 2.0M227.5 212.1l0.5 2.7M206.7 256.8l-0.1 2.0M159.9 248.5l0.1 2.2M165.5 250.6l-0.2 2.8M288.7 232.1l-0.3 1.6M210.8 249.6l-0.3 1.4M220.6 247.1l0.1 3.2M246.6 261.6l0.3 3.2M200.8 242.3l0.2 1.7M164.7 220.9l-0.2 2.1M193.8 246.5l0.0 1.8M245.4 255.4l-0.2 2.9M227.2 212.9l0.1 2.1M179.4 242.1l0.3 2.1M189.0 221.1l-0.3 3.2M172.2 230.1l-0.0 2.3M201.4 257.8l0.9 3.2M260.9 221.6l0.3 2.8M263.3 256.3l0.8 2.6M218.0 210.2l0.2 1.7M197.3 241.4l0.7 3.1M169.0 248.2l0.7 2.3M162.7 259.8l0.3 1.9M164.7 263.5l0.2 2.7M251.6 247.9l0.8 2.2M183.2 207.6l-0.0 3.0M186.7 214.9l-0.2 1.5M188.4 265.1l0.6 2.3M237.2 218.4l-0.1 2.2M180.8 223.1l0.0 1.7M263.3 251.9l-0.1 3.3M242.7 203.8l-0.5 3.0M206.6 262.8l-0.7 2.2M264.0 264.4l-0.3 1.7M223.1 263.7l-0.6 1.4M200.9 219.2l-0.5 2.2M249.7 250.6l-0.6 3.3M162.1 225.4l-0.6 1.6M209.5 255.9l0.6 1.5M187.8 200.6l0.6 2.4M192.9 245.3l0.7 2.1M210.5 245.0l-0.3 2.1M205.4 261.5l-0.6 3.3M269.3 242.5l0.3 1.9M158.0 221.9l-0.6 2.7M199.3 220.8l-0.2 1.8M213.7 204.4l-0.6 2.0M153.7 250.0l-0.5 1.7M244.2 257.5l-0.5 1.8M210.2 261.9l0.4 2.7M189.0 221.1l-0.2 3.3M168.3 260.6l0.2 2.9M259.5 258.0l-0.7 2.9M186.4 266.6l0.4 3.1M156.4 251.9l-0.4 2.7M199.3 252.4l0.2 2.4M188.6 211.9l-0.5 2.8M273.6 225.1l-0.2 2.0M244.2 212.0l0.0 2.7M193.2 208.8l0.2 3.3M253.5 200.6l-0.5 2.0M192.3 245.5l-0.3 1.8M176.1 218.4l0.4 2.1M245.0 217.8l-0.0 1.6M245.2 239.1l-0.1 3.0M204.4 247.1l0.5 3.0M238.4 224.7l-0.5 2.4M168.4 256.0l-0.3 2.7M231.3 264.2l0.6 2.9M188.2 248.2l0.1 3.0M198.5 237.4l-0.6 2.9M181.0 239.0l0.2 2.4M213.3 248.5l0.2 2.6M180.7 246.3l-0.6 3.3M263.6 246.2l-0.5 1.7M267.9 242.4l0.3 2.5M235.8 227.2l-0.5 2.2M158.5 253.1l0.2 1.4M254.6 210.3l-0.5 2.1M229.5 244.5l-0.7 1.8M160.4 224.3l-0.3 2.0M207.0 272.6l0.9 1.5M270.3 220.8l-0.0 2.8M244.6 213.0l0.2 3.4M190.1 270.6l-0.2 1.9M206.8 267.6l0.3 1.4M239.4 218.6l0.1 2.3M230.6 224.0l-0.4 1.8M187.7 243.3l0.7 2.8M223.2 209.4l0.6 3.3M237.7 250.9l-0.4 3.4M214.8 212.5l0.9 1.8M219.3 202.2l-0.2 2.3M282.1 227.8l-0.5 3.4M204.7 216.5l-0.1 2.6M203.2 264.2l0.1 2.9M240.7 218.7l-0.2 3.4M243.7 247.7l0.2 2.5M247.9 241.0l0.3 2.6M164.6 214.1l0.5 3.3M266.2 231.5l-0.2 2.9M243.5 204.3l-0.3 2.4M206.0 214.0l0.1 2.0M194.7 263.6l0.1 1.5M149.7 249.9l-0.1 2.8M188.5 203.9l-0.4 2.6M248.1 240.1l-0.7 3.0M201.7 208.5l-0.0 3.0M157.9 246.8l0.7 3.1M259.9 250.6l-0.2 3.4M183.2 217.1l0.9 2.1M169.1 259.6l-0.5 3.3M205.6 231.1l0.1 1.7M242.3 205.6l0.5 2.2M244.3 214.2l-0.1 1.8M192.9 237.9l0.3 2.7M155.0 233.1l-0.4 3.1M233.5 201.9l0.3 3.0M268.8 255.8l-0.1 3.2M180.4 256.4l-0.6 2.3M259.1 256.9l-0.1 1.9M210.2 217.6l0.8 2.7M212.5 216.6l0.6 2.4M244.7 250.7l0.8 1.4M160.9 209.9l0.2 4.0M176.1 199.2l-0.2 2.9M232.7 195.1l0.5 3.6M271.4 262.9l-0.5 3.2M209.0 273.6l-0.0 3.6M188.5 270.9l-0.3 2.9M172.9 267.8l-0.4 2.8M157.0 259.3l0.3 4.0M140.8 232.7l0.3 4.3"/>
<path stroke="#c2406f" d="M239.7 263.9l-0.2 1.6M214.6 257.6l0.9 2.0M190.8 263.4l-0.5 1.7M222.6 244.5l-0.2 2.1M255.6 254.0l-0.5 2.0M159.7 261.8l0.6 1.4M199.4 218.4l-0.7 2.2M239.3 205.6l-0.3 1.6M245.1 263.4l0.4 2.1M172.0 242.6l-0.6 2.4M255.6 251.4l-0.4 1.7M167.1 208.0l-0.3 2.8M229.1 226.8l0.3 2.8M171.7 225.6l-0.4 2.8M169.1 247.1l0.5 3.2M204.5 219.0l0.7 3.0M159.0 224.2l-0.6 2.9M206.3 222.6l0.8 2.7M185.7 269.3l0.4 1.5M252.3 226.7l-0.6 2.4M158.7 255.4l-0.4 3.3M191.6 263.3l0.8 2.6M250.3 229.1l-0.0 1.7M243.7 251.4l0.3 2.3M193.6 260.6l-0.2 1.6M219.7 216.0l0.5 3.2M174.2 213.9l0.4 3.1M280.9 223.5l-0.6 1.6M169.2 249.3l0.8 1.5M202.5 249.5l-0.0 2.1M265.4 240.3l-0.1 2.4M192.7 213.4l0.5 3.0M179.9 246.7l0.4 1.5M236.1 209.9l0.5 1.6M251.8 227.3l0.1 3.3M159.3 251.9l0.3 3.4M231.9 255.8l0.8 2.2M161.4 225.4l0.6 1.6M208.7 252.8l-0.2 1.5M177.8 259.2l0.3 1.8M269.0 244.0l0.5 3.2M223.4 265.7l0.7 1.4M178.9 261.7l-0.5 2.0M169.8 246.9l-0.5 1.9M209.2 271.0l0.1 2.8M176.3 242.9l0.5 2.3M181.4 240.9l0.3 3.1M224.8 249.0l-0.3 3.1M249.7 222.2l0.0 1.6M230.3 203.8l0.2 3.4M222.0 212.6l-0.6 2.0M145.2 253.9l0.4 2.1M201.3 222.0l0.4 2.0M226.3 210.2l0.6 1.9M189.6 236.1l0.2 3.4M197.7 210.9l-0.0 2.8M192.8 262.8l-0.1 3.1M159.1 225.0l-0.7 3.2M186.1 221.7l0.7 1.7M263.2 253.1l0.8 1.8M228.9 262.3l0.4 2.0M217.4 218.8l-0.5 2.0M242.2 250.6l0.0 2.9M182.0 246.3l0.4 3.3M156.2 227.7l0.4 3.2M171.0 222.2l-0.7 2.6M234.4 206.0l-0.3 2.4M267.2 262.6l0.5 2.7M230.8 197.8l-0.5 2.2M233.4 220.6l0.5 3.1M164.7 219.2l-0.6 1.9M233.8 222.4l-0.0 2.1M175.3 208.6l0.7 2.3M199.9 254.3l0.4 1.9M257.2 214.7l0.3 3.3M246.0 258.7l0.2 2.3M227.1 252.1l-0.3 2.8M240.7 200.4l0.3 2.5M191.0 241.7l0.5 2.1M194.0 206.7l0.6 3.2M283.5 224.9l0.5 2.6M227.9 215.0l0.1 2.8M251.0 250.8l-0.0 3.1M204.8 204.3l0.4 2.8M207.6 259.0l-0.3 3.0M173.5 252.8l-0.0 3.3M243.2 217.4l0.2 3.3M232.9 236.7l0.2 2.6M247.2 260.9l0.6 2.7M211.1 263.5l0.2 2.1M222.7 243.1l-0.4 2.4M201.0 220.4l0.6 1.7M208.1 252.0l0.6 1.7M262.9 225.7l0.5 2.6M188.1 210.1l0.2 2.7M223.2 212.9l-0.5 2.2M186.9 214.7l0.1 1.6M221.3 253.0l0.6 3.3M164.2 245.7l0.2 2.4M247.6 242.9l0.8 3.1M272.3 246.3l-0.4 1.7M188.8 202.1l-0.3 2.2M181.1 256.3l-0.0 2.5M245.4 201.7l0.6 1.7M194.4 248.0l0.8 3.0M252.8 246.9l-0.3 1.8M267.8 248.9l-0.5 2.9M223.5 211.9l0.1 2.4M224.1 243.9l-0.3 3.3M194.7 254.5l0.0 2.8M187.3 217.0l-0.5 2.3M234.3 243.7l0.7 2.5M180.2 264.9l0.6 1.6M177.1 219.7l0.4 2.8M213.5 216.6l0.6 2.0M265.5 232.1l0.8 3.0M214.2 258.6l-0.3 2.2M166.7 261.6l0.6 3.0M261.5 251.3l-0.7 1.6M230.8 212.0l0.6 3.3M154.7 222.0l0.7 3.0M234.6 269.7l-0.6 1.8M152.2 254.0l-0.0 2.7M161.3 215.8l0.9 1.8M152.9 229.8l0.7 2.1M189.5 250.1l0.3 1.5M162.8 242.3l-0.3 1.7M231.7 205.7l-0.5 1.9M179.4 258.3l-0.6 1.8M191.3 217.0l-0.4 3.0M215.5 219.1l0.3 2.1M202.7 255.5l-0.5 1.6M200.2 265.8l-0.1 3.1M226.3 243.0l0.7 3.1M243.8 207.8l-0.3 2.6M175.5 250.9l-0.2 2.4M265.6 231.3l0.3 2.5M170.4 219.6l0.4 2.4M269.6 244.2l0.2 2.8M176.6 217.3l-0.6 2.3M219.4 220.6l0.6 2.7M252.2 253.0l0.0 2.6M200.6 264.9l0.8 1.6M229.1 239.3l0.3 2.5M231.5 219.0l0.5 3.3M180.5 259.1l-0.7 2.7M213.7 218.4l-0.0 2.4M159.0 216.7l0.7 2.1M156.9 222.7l0.5 3.2M235.0 251.7l-0.2 3.3M240.2 204.2l0.1 2.7M227.1 205.7l0.5 1.7M185.5 253.7l-0.1 1.8M191.1 247.3l-0.6 1.8M251.7 227.9l-0.4 2.9M193.0 209.4l0.7 2.4M237.6 256.1l0.4 2.0M246.9 221.3l-0.2 2.9M191.0 203.7l-0.1 2.8M209.1 255.3l0.1 2.9M179.9 259.8l0.0 3.1M180.7 270.1l0.3 2.7M191.0 218.6l0.9 2.8M171.0 242.8l-0.3 2.4M150.3 252.1l-0.5 1.8M237.7 257.6l0.5 3.4M231.5 239.8l0.0 3.2M237.0 253.3l0.2 2.9M244.4 209.2l0.6 2.1M236.5 202.0l-0.2 1.9M155.0 250.1l-0.6 1.5M211.5 269.3l-0.3 2.3M190.4 267.8l0.4 2.9M148.9 251.3l-0.2 2.9M174.3 221.9l-0.4 3.2M231.0 255.9l0.5 1.9M249.4 261.8l-0.1 3.2M185.4 261.1l0.1 2.9M262.4 210.1l0.9 2.8M231.0 215.1l-0.7 1.4M213.0 220.1l0.3 2.5M151.8 246.2l-0.0 3.0M177.1 247.8l0.4 3.1M179.3 218.2l-0.1 2.7M177.7 223.6l-0.7 3.0M208.9 257.2l0.2 2.7M238.0 238.7l0.0 2.3M219.0 220.9l0.1 3.4M159.4 225.2l-0.6 3.3M270.2 263.8l0.1 1.7M236.9 243.1l0.9 2.8M235.5 256.1l-0.5 2.1M262.7 241.6l0.1 2.4M196.5 204.0l0.6 2.9M150.3 245.3l0.4 1.8M280.4 219.6l0.7 3.1M222.0 267.6l-0.4 3.3M165.0 247.4l0.2 2.3M218.0 211.2l-0.6 2.5M203.6 239.3l0.5 3.2M184.9 213.0l-0.6 1.7M263.1 241.3l0.8 2.8M185.3 248.8l0.4 1.8M214.2 211.8l-0.1 2.0M217.8 262.3l0.0 2.2M226.9 256.0l0.4 2.7M173.8 241.7l-0.3 2.8M257.6 209.8l-0.7 1.5M270.7 243.6l-0.0 2.9M197.2 265.1l0.8 3.0M273.6 222.4l-0.6 1.5M179.3 213.3l0.7 3.2M219.7 249.8l0.6 2.6M184.6 204.4l0.3 2.5M193.0 261.0l-0.3 2.7M204.7 212.3l0.8 2.8M214.0 258.2l-0.5 3.2M256.7 230.2l-0.1 2.4M180.3 258.8l0.6 2.3M175.1 251.3l0.4 2.0M247.9 218.3l-0.4 3.0M216.1 211.0l0.3 2.2M265.7 259.5l0.6 1.8M175.5 249.6l-0.1 2.8M161.8 251.6l0.8 1.5M181.5 201.2l0.7 2.8M148.0 246.8l0.2 1.7M201.3 200.9l-0.5 2.7M227.8 250.2l0.9 3.2M190.2 218.4l-0.5 2.3M177.2 224.9l-0.2 2.4M204.4 250.7l0.6 1.8M246.4 210.8l-0.4 1.5M151.6 244.6l-0.3 2.1M180.7 220.3l-0.0 2.9M224.7 261.8l0.1 3.2M179.9 254.5l-0.6 2.5M175.6 212.8l0.8 2.2M191.4 254.2l-0.6 3.2M172.9 266.7l0.8 1.6M175.9 258.5l0.0 2.5M270.5 263.5l-0.4 2.3M192.2 201.1l-0.6 1.6M204.3 251.2l0.1 1.5M258.4 228.2l0.7 1.6M203.4 246.1l0.6 3.2M210.1 244.0l0.3 3.3M292.4 240.3l0.8 1.6M247.9 245.1l0.2 2.9M249.9 219.5l0.1 3.2M201.6 244.4l0.5 3.3M194.3 252.9l-0.4 1.9M205.2 243.3l0.8 2.6M185.5 205.7l0.6 2.5M196.2 251.4l-0.7 2.2M236.0 254.1l-0.3 3.0M249.3 219.3l0.1 2.0M225.7 261.6l0.5 2.6M145.9 253.1l-0.3 2.7M158.3 252.2l-0.4 2.0M215.6 258.9l-0.7 3.4M186.1 210.2l0.1 1.8M221.6 251.2l-0.3 2.7M205.9 209.6l-0.2 3.1M161.6 257.2l0.8 2.0M202.3 218.0l0.6 3.3M156.4 250.7l0.5 2.9M189.0 208.6l-0.1 1.9M241.1 218.3l0.2 2.4M186.1 215.6l0.1 3.1M154.3 252.4l-0.7 1.7M237.4 245.3l-0.4 2.3M264.3 250.5l-0.3 2.7M170.2 253.7l0.8 2.2M244.2 249.4l-0.4 1.8M180.8 221.2l0.4 2.8M236.1 246.7l-0.5 2.4M217.8 262.3l0.5 2.1M194.5 249.3l0.7 2.5M200.6 205.0l0.4 2.2M189.4 239.5l-0.3 2.7M292.0 238.0l0.8 2.5M225.8 244.6l0.8 2.8M277.1 226.3l0.0 3.2M243.6 222.3l0.6 1.7M259.9 224.0l-0.4 2.1M208.4 249.3l0.7 2.1M268.4 228.2l-0.1 1.9M221.0 256.1l-0.2 2.8M265.0 212.9l-0.2 2.4M188.2 215.1l0.4 2.7M270.0 217.5l0.5 2.3M248.4 253.7l-0.5 2.6M200.3 251.8l0.1 1.8M242.4 241.7l-0.3 2.6M188.6 245.9l-0.2 3.1M247.6 198.5l-0.4 2.3M170.3 244.4l0.2 3.0M241.5 204.3l-0.4 2.1M238.5 217.6l0.1 3.3M230.9 206.0l-0.1 1.5M202.6 210.8l-0.3 3.3M210.7 261.1l0.4 2.0M241.9 252.4l0.7 2.6M208.8 264.4l0.4 1.5M195.0 217.6l0.5 2.4M191.5 240.9l-0.7 1.8M207.3 206.7l0.6 1.6M252.8 262.2l0.8 1.7M236.0 205.5l-0.2 1.8M253.5 240.1l0.2 2.0M233.4 213.2l-0.6 1.6M268.6 226.9l-0.5 3.0M274.2 223.5l0.4 3.0M204.4 240.2l-0.1 2.7M266.6 231.9l0.3 2.1M177.1 263.4l-0.0 3.3M262.9 210.1l-0.1 2.3M200.8 203.1l-0.6 1.6M253.4 212.5l0.8 3.2M185.6 266.4l-0.2 3.2M258.0 226.9l0.6 3.0M181.7 243.5l-0.4 1.6M202.4 211.6l-0.5 1.8M160.0 217.4l0.5 3.2M233.4 229.3l-0.5 2.7M212.0 215.9l0.4 2.3M258.5 224.4l0.5 1.6M237.7 219.3l0.7 3.3M220.7 265.5l-0.5 2.3M178.3 241.3l-0.1 1.9M157.1 246.8l-0.2 3.1M223.6 256.0l-0.2 2.2M246.3 261.6l0.2 2.6M187.5 256.7l0.1 2.8M177.1 259.4l-0.4 2.4M187.0 260.5l0.6 1.6M208.5 217.3l0.0 3.3M244.5 266.5l0.4 3.4M248.1 254.4l-0.1 3.2M172.5 224.2l0.2 2.8M168.9 211.7l-0.2 2.2M188.6 243.2l-0.7 2.4M228.7 209.0l-0.5 2.0M229.1 202.8l-0.0 1.8M171.4 208.9l0.2 2.9M158.4 228.1l-0.6 2.0M181.6 207.9l-0.0 1.4M201.0 250.9l0.7 1.4M241.5 267.2l-0.6 2.2M212.7 211.2l0.3 2.4M252.5 241.6l0.9 1.6M168.8 265.0l0.7 3.3M207.2 215.7l0.7 2.5M161.1 249.4l0.6 3.2M252.3 255.8l-0.6 1.8M235.6 264.1l-0.2 2.5M204.5 217.1l0.0 3.2M211.7 255.9l-0.7 1.8M152.3 245.3l0.3 2.2M212.3 260.3l0.5 1.5M233.7 243.5l0.1 2.2M252.7 263.7l0.7 1.9M190.7 245.5l-0.3 1.9M166.4 256.7l0.7 2.8M234.8 249.2l-0.1 2.2M203.7 221.8l-0.3 2.1M218.3 247.4l-0.1 2.6M259.9 249.1l0.6 1.7M162.4 220.4l0.5 1.7M169.0 215.9l0.8 3.2M186.2 203.6l0.3 2.0M160.0 216.6l-0.1 2.9M180.5 245.0l0.7 2.2M269.9 237.9l0.2 2.1M261.0 249.4l-0.1 2.0M172.4 262.3l0.4 1.7M227.4 266.0l0.4 2.2M191.1 266.0l0.5 3.1M191.4 206.1l-0.5 1.9M165.9 205.1l0.6 4.3M170.9 201.8l0.6 4.0M204.4 196.9l0.5 2.6M261.3 201.6l-0.0 3.0M262.9 265.9l-0.1 2.8M180.1 270.2l0.3 2.6M155.9 260.4l0.1 3.5"/>
<path stroke="#cf5480" d="M166.6 210.0l0.0 1.5M164.3 256.8l-0.3 1.5M231.6 245.9l0.3 1.6M241.1 256.4l0.7 1.8M258.6 261.7l-0.1 3.0M226.1 263.4l-0.6 1.6M158.5 255.2l0.1 3.4M238.3 253.1l0.5 2.9M200.5 215.1l-0.6 2.2M228.2 266.8l-0.2 3.3M243.6 247.1l0.8 2.0M174.9 263.8l0.5 3.1M245.9 239.9l-0.5 1.6M236.1 238.9l0.2 2.9M151.0 253.3l0.2 2.1M236.4 207.6l0.9 2.2M225.5 243.4l-0.6 1.6M194.7 244.7l0.7 3.3M246.3 256.8l0.2 3.2M266.3 211.1l0.8 3.0M245.5 244.9l0.8 3.0M193.2 261.5l-0.4 2.1M211.8 253.6l0.5 1.8M181.4 232.0l-0.5 3.3M204.1 218.8l-0.6 1.7M240.4 208.5l0.2 1.5M167.2 226.0l0.1 2.0M256.6 244.4l-0.7 2.7M223.0 258.0l0.1 3.0M200.1 227.6l-0.4 2.7M194.9 267.3l-0.4 2.0M164.3 215.5l0.3 1.9M170.1 262.8l-0.4 1.6M225.6 211.3l-0.5 1.9M170.9 208.9l0.2 3.3M193.0 238.7l-0.5 2.2M215.7 261.3l-0.1 1.8M175.7 245.0l0.2 2.0M209.1 197.5l-0.1 1.7M190.5 260.3l0.5 2.1M186.9 265.7l0.4 2.0M271.6 248.7l-0.7 3.0M260.9 245.9l0.9 2.3M181.1 240.4l-0.7 2.0M239.1 216.2l0.6 1.7M194.4 220.2l-0.4 2.0M202.2 213.3l0.3 2.9M198.7 244.1l-0.0 2.6M257.9 202.9l0.2 2.6M193.5 213.2l-0.2 2.2M246.3 243.2l0.1 2.5M225.2 252.8l-0.5 2.8M260.1 243.9l-0.4 2.4M247.0 258.9l-0.5 1.5M239.4 222.9l-0.7 2.6M173.9 222.5l-0.1 2.8M243.5 203.9l0.7 2.9M158.2 257.6l0.1 3.3M202.0 213.2l0.1 2.3M271.6 258.8l0.7 2.2M170.7 253.4l0.5 2.6M234.4 214.0l0.2 3.2M220.9 200.8l0.3 2.0M195.8 245.9l-0.5 1.8M173.2 261.3l0.3 1.5M165.6 254.7l-0.0 2.4M176.3 256.7l0.7 2.2M164.1 216.6l0.9 3.1M164.5 243.6l-0.5 3.0M152.9 250.6l0.7 2.7M205.5 214.6l0.9 3.3M154.4 227.1l0.0 1.5M177.1 242.0l0.8 1.9M210.9 250.8l0.0 2.4M166.9 249.2l0.5 1.6M197.5 211.5l-0.5 2.3M228.9 254.1l-0.0 3.0M257.2 247.9l0.8 2.0M268.4 244.7l-0.6 2.0M240.3 253.1l0.8 1.6M187.7 259.8l0.2 2.0M253.8 238.3l-0.0 3.3M188.2 206.5l0.7 2.9M247.9 258.3l0.5 3.2M180.3 216.7l0.9 3.0M167.0 261.9l0.7 2.8M231.7 218.3l-0.3 3.1M157.7 249.2l0.2 2.8M172.9 228.6l-0.0 2.0M162.1 222.7l0.9 2.4M189.6 253.3l0.7 2.0M264.6 223.5l-0.5 1.6M178.2 268.0l0.8 1.8M166.5 220.2l-0.2 1.7M160.8 248.4l0.2 2.0M189.9 271.0l0.1 1.8M146.6 247.7l-0.4 1.6M187.3 201.2l0.1 2.1M239.0 213.3l0.3 2.9M157.8 255.9l0.7 2.3M181.7 259.2l-0.3 3.2M194.7 242.5l0.8 2.9M177.5 204.0l-0.2 2.9M177.9 206.2l0.2 3.2M266.0 259.1l0.5 2.5M222.3 221.8l-0.4 1.6M184.2 241.6l0.1 2.0M260.4 246.3l0.6 1.8M201.1 206.2l-0.0 1.5M241.7 256.9l0.5 1.8M193.3 267.3l0.6 2.3M204.6 204.4l-0.3 3.1M263.2 245.6l-0.2 1.7M180.3 208.2l-0.5 2.4M169.1 220.1l-0.1 3.3M194.7 203.0l-0.1 2.3M265.1 262.3l0.1 1.8M222.6 242.9l-0.2 3.0M198.1 211.2l-0.1 2.9M177.0 241.2l0.6 2.4M229.2 254.6l0.5 1.9M244.9 255.8l0.3 1.6M225.9 215.8l0.2 3.2M184.8 207.1l0.1 3.1M262.9 243.8l0.8 2.5M241.2 241.4l0.3 2.1M181.9 247.5l0.9 1.5M255.5 257.3l0.4 2.3M225.4 255.3l-0.2 2.8M181.7 249.2l-0.0 2.3M218.7 250.2l-0.3 2.5M211.6 211.5l-0.3 2.1M233.5 256.9l0.6 2.3M210.5 255.7l0.8 1.8M212.0 253.8l0.7 3.0M234.1 242.3l-0.3 2.0M198.3 213.4l-0.5 1.9M201.9 267.0l-0.6 3.1M227.1 255.8l-0.2 3.3M187.3 244.4l-0.1 1.7M166.7 246.5l-0.1 2.6M214.2 221.9l0.3 2.2M254.9 244.0l-0.2 1.8M172.2 217.5l0.4 3.4M262.6 213.6l-0.1 3.3M210.5 258.8l-0.6 2.8M199.4 207.1l-0.3 2.5M211.9 210.3l-0.4 3.2M147.8 251.6l-0.4 2.6M230.6 205.8l0.4 3.1M197.1 264.8l-0.6 2.3M214.7 258.7l-0.3 2.8M272.4 260.1l0.3 2.6M220.8 213.3l-0.3 2.6M153.9 228.5l0.6 2.7M146.6 249.0l-0.3 1.6M222.8 206.8l0.5 3.0M232.9 260.1l0.7 1.4M228.4 241.3l0.5 1.5M220.5 263.2l-0.6 2.3M192.0 263.2l0.0 1.4M188.2 210.1l-0.7 2.8M195.4 251.6l0.8 2.1M181.9 262.8l0.4 3.1M187.8 249.2l0.7 2.0M228.9 249.3l-0.1 3.2M172.7 225.3l-0.1 1.5M197.4 203.3l0.5 1.5M180.2 240.3l-0.6 3.2M209.2 259.2l-0.6 3.3M224.4 240.8l-0.5 1.6M277.1 217.1l0.7 1.5M238.2 242.3l0.7 2.6M243.7 249.0l-0.5 3.0M220.4 245.2l-0.2 2.7M229.2 206.2l-0.4 2.1M259.4 222.0l0.3 3.0M171.9 222.9l0.8 3.0M190.6 249.1l-0.2 1.7M197.2 264.7l0.3 2.4M173.9 261.9l0.8 3.4M156.2 224.3l0.6 2.5M214.6 205.3l-0.4 2.5M233.9 210.5l-0.4 3.3M210.2 264.8l-0.3 2.6M161.8 246.5l0.5 1.9M231.9 206.0l0.1 2.5M170.1 223.5l0.5 2.5M212.7 227.5l0.1 2.5M160.0 254.9l-0.6 3.1M203.7 262.4l0.2 3.3M163.7 225.9l0.3 2.2M205.4 263.5l0.4 2.0M233.2 253.1l-0.6 2.2M158.8 226.8l0.9 2.1M239.6 263.0l0.5 2.1M226.8 261.2l0.6 3.3M259.1 228.4l-0.5 2.6M204.8 267.2l0.2 2.6M199.1 250.9l-0.2 2.7M231.0 195.8l-0.1 3.4M162.7 263.4l0.0 3.7M140.4 233.2l0.2 3.4"/>
<path stroke="#cc7c8a" d="M148.5 229.0l0.5 2.5M180.2 227.3l-0.5 2.6M216.4 197.8l-0.7 2.0M256.8 256.0l0.1 1.7M286.2 230.5l-0.3 2.4M281.5 256.5l0.0 3.3M222.9 198.3l0.6 2.6M183.5 233.6l-0.3 2.4M286.2 252.0l-0.1 1.9M211.6 202.3l-0.4 1.9M166.3 235.1l0.4 2.0M179.3 237.2l0.5 1.5M254.2 266.3l0.9 2.9M283.0 219.7l0.6 3.3M229.3 210.3l-0.3 2.5M262.4 202.6l0.6 3.4M160.8 236.0l0.7 1.7M278.4 224.1l0.1 2.4M153.1 232.9l-0.3 2.3M192.2 229.1l0.8 3.0M252.2 233.7l-0.6 1.8M175.8 234.8l-0.3 2.9M251.7 238.3l0.7 1.8M157.8 229.1l-0.6 1.9M276.1 217.4l0.6 1.5M197.6 270.9l-0.5 2.3M159.2 235.6l0.2 1.4M196.5 225.6l0.9 3.2M222.2 271.7l0.7 3.2M208.3 265.8l-0.0 3.3M238.1 237.4l0.3 1.5M232.1 215.8l-0.7 2.8M158.2 236.4l-0.5 2.1M165.1 252.1l-0.2 2.7M280.2 228.9l0.7 2.4M193.5 206.1l0.3 2.4M282.9 252.0l-0.5 3.3M242.3 198.3l0.8 2.8M216.8 266.5l0.6 2.9M252.0 264.3l0.3 1.5M275.7 255.2l0.4 2.8M256.5 257.8l0.8 3.3M208.4 223.9l0.3 2.1M246.9 263.2l0.8 2.7M234.1 271.6l0.8 3.1M229.6 211.0l0.5 2.3M250.9 252.2l0.7 2.7M270.7 224.8l0.7 3.3M277.9 221.9l0.5 2.7M249.3 238.1l0.5 3.1M245.4 198.7l-0.2 2.0M276.4 223.2l0.6 2.6M275.9 251.1l0.3 2.5M147.1 252.6l-0.4 3.3M212.9 200.5l0.1 2.3M226.2 229.5l0.1 3.0M237.6 247.1l-0.4 3.0M221.1 210.5l0.7 1.6M172.1 231.6l-0.5 2.3M254.2 202.2l-0.5 2.8M229.8 211.8l0.4 2.9M243.0 265.9l0.8 3.4M146.1 254.4l0.5 1.9M145.6 241.6l0.8 2.6M243.8 269.6l-0.1 2.9M248.6 268.4l-0.3 3.4M258.4 202.7l-0.3 1.5M265.7 208.5l-0.3 1.8M293.4 237.8l-0.0 2.7M248.3 201.7l0.5 3.3M279.4 258.2l-0.3 2.5M153.2 233.6l-0.4 2.0M208.4 198.3l-0.1 2.3M253.3 233.6l0.3 2.9M249.0 219.8l0.3 3.3M211.8 265.4l-0.0 2.7M185.7 244.9l0.7 3.1M288.0 249.0l-0.6 2.9M273.6 219.1l0.1 2.4M227.2 198.8l-0.4 1.9M282.9 245.0l0.6 2.2M145.9 243.1l0.7 3.0M149.4 239.0l0.2 3.0M227.4 237.6l-0.2 2.9M291.1 226.4l0.9 2.1M263.0 232.3l-0.4 1.5M232.8 216.3l0.9 1.9M286.7 220.2l0.0 1.7M288.2 236.4l0.2 2.0M220.8 269.8l-0.4 2.3M275.1 237.1l0.9 2.8M271.4 231.1l-0.3 1.6M286.4 248.6l0.8 1.8M145.1 226.7l0.4 2.5M218.1 227.6l0.8 2.7M217.7 273.2l-0.2 2.4M292.9 230.1l-0.3 1.5M247.4 225.3l-0.7 2.9M243.6 224.4l-0.7 1.5M196.3 257.4l0.0 1.9M231.1 201.3l-0.4 2.3M155.5 218.4l0.7 2.2M238.5 243.2l-0.3 1.9M288.6 229.9l-0.0 3.0M247.4 231.1l0.5 2.1M216.2 268.7l0.4 1.5M258.1 240.3l-0.0 3.4M246.5 230.8l0.3 1.7M214.5 203.3l-0.0 2.0M283.3 248.1l-0.6 2.0M187.1 214.6l-0.3 1.5M212.1 272.1l-0.6 1.6M228.2 195.6l0.5 4.0M268.7 208.4l0.2 2.4M292.2 241.9l0.5 2.5M256.0 265.9l-0.3 4.3M223.1 273.1l0.3 4.0M174.7 268.1l0.2 4.0"/>
<path stroke="#d88c98" d="M237.2 212.8l-0.4 3.2M248.8 205.4l-0.4 2.4M251.4 268.9l0.0 1.8M222.5 198.0l0.4 2.3M168.2 232.0l-0.1 1.7M172.3 215.7l-0.4 2.8M229.6 238.7l-0.3 3.0M186.0 229.1l0.4 3.4M206.0 224.7l-0.1 1.5M177.2 235.2l-0.1 3.0M258.0 206.3l0.2 2.9M272.1 249.3l0.9 2.8M226.2 225.3l-0.5 1.8M237.6 222.0l0.3 2.3M248.4 263.7l0.6 2.8M258.5 210.6l0.2 1.8M206.4 266.5l0.4 3.2M284.5 252.2l0.0 1.8M259.1 262.5l0.8 2.8M208.0 231.3l-0.3 2.5M278.8 236.2l-0.2 1.5M226.6 238.2l0.8 2.8M237.4 239.3l-0.2 2.9M225.7 271.3l0.3 1.5M200.9 197.8l0.8 2.7M209.6 229.4l-0.2 2.7M199.7 224.3l-0.7 2.9M242.8 223.3l0.6 3.2M238.3 198.4l-0.6 2.5M148.2 238.6l0.8 2.1M251.3 239.3l0.0 3.2M223.2 202.4l0.4 1.8M165.3 236.5l0.2 2.6M225.4 227.9l0.2 3.3M220.2 213.2l0.8 2.2M178.2 233.5l-0.5 2.8M211.4 232.2l-0.3 1.7M147.8 231.1l0.1 1.8M203.8 231.6l0.8 3.2M276.7 215.8l-0.7 3.2M193.9 232.1l0.1 1.9M246.2 234.8l-0.2 3.2M178.9 201.4l-0.5 1.8M145.5 226.8l0.6 2.8M216.0 198.0l-0.0 2.4M164.0 230.8l-0.5 2.1M254.0 235.0l0.9 2.2M153.3 233.2l0.6 1.7M281.2 218.4l0.4 1.8M142.7 242.0l0.8 2.7M151.6 236.4l0.9 1.8M167.6 238.1l-0.7 1.8M237.4 266.2l-0.6 2.7M287.9 232.7l0.2 1.6M252.9 202.5l0.3 1.7M223.7 230.2l0.4 2.5M292.0 227.2l-0.4 1.9M183.9 226.5l0.7 3.3M280.0 248.4l-0.7 2.4M193.9 227.9l-0.1 2.8M155.4 234.9l0.1 2.5M269.8 239.1l0.6 2.0M211.1 245.5l-0.4 1.6M199.9 271.9l-0.0 2.1M291.3 225.8l-0.2 2.0M290.4 246.0l0.3 2.3M252.1 236.3l0.0 3.2M265.4 251.1l0.5 2.0M227.6 271.0l-0.1 2.1M218.0 214.3l0.5 2.9M152.1 239.7l0.3 3.0M179.1 202.0l0.4 2.8M293.1 237.8l-0.6 2.0M270.2 224.4l-0.4 2.3M257.5 257.1l-0.1 2.2M142.0 232.5l0.3 1.9M225.1 267.4l-0.2 2.7M203.8 203.1l-0.6 1.8M273.7 251.6l0.7 2.2M162.6 232.3l-0.3 2.6M294.3 233.4l0.7 1.7M257.3 212.1l-0.2 2.1M153.2 240.2l0.6 2.6M254.9 201.8l0.0 1.6M256.0 253.0l0.2 3.0M248.0 214.4l0.5 3.4M187.0 227.2l0.5 3.2M251.2 206.6l0.8 1.5M211.7 224.1l0.6 2.2M259.9 251.9l-0.3 2.6M257.3 265.1l-0.2 2.2M275.3 220.9l-0.5 1.9M228.0 245.7l0.8 3.3M274.9 215.2l-0.1 1.7M237.5 265.9l0.3 2.2M200.3 236.3l0.5 2.6M142.8 246.3l-0.4 1.5M207.3 263.3l0.1 2.6M274.7 260.8l0.6 2.2M194.3 223.4l-0.1 2.3M268.2 213.0l0.3 3.2M170.8 236.0l0.8 2.3M204.2 242.6l0.6 1.8M244.2 207.9l-0.0 3.0M201.6 225.8l0.2 1.5M289.1 228.1l0.3 2.3M236.4 201.2l-0.0 2.3M233.4 228.8l-0.1 2.9M248.9 228.8l-0.4 2.4M261.3 233.9l-0.6 2.5M216.2 266.6l0.5 2.8M220.7 227.2l0.4 2.8M154.9 217.2l-0.7 2.1M289.7 223.6l0.6 1.8M271.3 234.2l0.3 2.2M168.5 240.9l0.1 1.6M202.8 199.1l0.3 2.6M163.9 237.3l0.1 2.3M200.9 268.7l-0.1 2.1M218.2 197.5l0.2 2.5M220.3 271.1l0.7 3.4M156.6 240.1l0.9 2.4M225.6 267.7l0.8 2.2M228.7 211.4l-0.7 2.3M254.5 199.3l0.5 3.2M225.3 229.0l0.2 2.5M150.0 232.4l0.2 3.0M195.2 222.9l0.0 2.1M230.6 199.4l-0.1 2.2M151.3 233.8l-0.2 2.1M146.3 229.0l0.6 2.4M144.7 238.4l0.2 3.3M207.8 232.6l0.6 1.6M246.2 200.5l-0.4 1.9M221.0 231.0l0.3 2.5M256.7 236.3l0.2 2.4M262.2 219.5l-0.5 3.1M271.3 238.8l0.8 2.0M281.3 218.0l0.4 2.7M143.5 232.7l0.3 1.8M231.0 200.5l-0.7 3.0M233.1 237.7l0.2 1.5M182.9 230.8l-0.2 3.0M146.1 239.5l-0.1 1.9M153.1 232.5l-0.4 2.3M145.4 239.6l0.8 2.4M239.2 242.0l0.0 2.0M215.9 266.7l0.0 2.6M246.6 265.9l0.1 2.6M250.7 212.6l0.6 3.0M191.3 231.8l0.8 2.4M207.0 271.1l-0.7 3.1M237.2 271.3l0.3 1.5M157.3 234.9l-0.4 1.7M288.2 228.8l-0.5 3.1M290.2 228.9l0.1 2.9M163.0 235.4l0.6 3.3M282.3 248.8l-0.4 2.7M262.3 206.0l-0.5 1.8M262.0 252.3l-0.5 2.4M191.6 224.5l-0.3 2.7M238.4 240.0l0.8 2.4M201.0 224.9l0.1 1.4M209.0 266.8l-0.1 1.6M251.3 231.0l0.5 2.3M276.0 238.2l0.6 1.9M235.1 228.6l0.5 1.8M242.0 266.5l-0.1 1.9M291.2 240.3l0.6 2.0M229.0 226.5l-0.7 2.2M267.5 210.2l0.2 3.1M187.2 229.6l0.7 1.8M215.7 228.3l0.7 1.5M248.3 214.1l-0.6 1.7M173.4 229.5l0.4 1.5M198.1 222.3l-0.7 1.8M180.7 237.5l0.0 3.2M220.5 272.5l0.6 1.7M289.1 248.0l-0.3 1.7M206.8 230.1l-0.4 2.4M263.6 220.9l0.3 1.8M166.5 232.3l-0.3 2.3M281.4 249.8l0.1 1.8M289.6 231.3l-0.1 1.8M250.5 232.7l-0.5 2.3M204.4 272.3l-0.1 2.2M267.5 252.8l0.3 2.2M238.9 196.6l0.2 3.3M173.1 244.3l0.5 3.4M261.3 208.2l0.0 1.5M281.2 256.1l-0.0 2.3M265.3 207.6l0.4 2.8M165.8 230.3l0.7 1.7M217.4 229.9l0.8 3.3M186.8 226.6l0.9 1.5M174.7 227.9l0.4 1.8M263.5 206.5l0.8 1.9M195.2 230.4l0.7 1.6M201.2 271.4l0.7 1.5M232.3 266.9l0.5 2.0M259.3 236.9l0.0 3.4M234.9 199.7l-0.4 3.3M152.3 232.6l0.1 3.2M167.0 231.5l0.1 3.2M181.5 271.4l0.4 2.1M285.9 251.1l-0.0 2.7M222.1 272.8l0.6 1.6M229.1 226.9l0.6 1.5M207.7 224.8l-0.0 2.7M280.5 225.0l-0.4 3.1M157.7 236.3l-0.1 2.1M149.6 222.3l-0.6 1.9M286.8 230.1l0.2 3.2M147.0 227.0l0.8 3.1M148.6 234.3l0.4 3.2M280.9 228.9l-0.1 2.7M262.3 238.3l0.6 1.7M254.2 198.5l-0.6 3.2M153.1 241.7l0.2 2.9M233.4 198.0l0.1 2.7M209.0 274.0l-0.3 2.1M161.6 238.3l-0.1 1.6M214.8 270.4l0.8 3.0M174.3 238.9l0.4 2.9M279.6 248.0l0.6 1.4M268.9 236.2l0.5 3.0M165.8 237.5l0.9 3.3M282.0 251.6l-0.7 3.2M251.0 253.1l-0.0 2.1M255.9 263.3l-0.2 2.3M238.2 198.7l-0.3 1.8M278.0 248.3l0.7 2.7M142.9 226.2l0.2 3.3M150.4 220.9l0.1 3.9M186.3 198.3l-0.1 3.9M207.1 195.5l0.1 3.1M211.9 195.7l-0.1 3.3M239.6 195.4l-0.5 4.1M247.4 194.7l0.0 3.9M257.7 200.2l0.2 2.6M283.7 216.8l-0.2 3.8M292.9 228.9l0.6 3.9M293.6 240.6l0.6 3.4M284.4 256.7l0.5 2.9M245.2 270.3l0.0 3.3M229.9 272.8l0.2 3.4M206.6 273.6l-0.4 3.4M146.6 254.3l-0.5 2.9M140.9 243.4l-0.1 3.0"/>
<path stroke="#df9ba4" d="M286.1 231.4l-0.1 3.4M230.6 271.0l-0.5 1.8M291.9 231.1l-0.4 2.7M191.8 232.2l-0.1 1.4M164.4 259.8l-0.2 3.2M253.9 195.3l0.0 2.4M202.5 228.3l0.7 2.5M181.4 201.4l0.1 2.2M253.6 218.0l0.5 2.1M267.7 235.4l-0.6 3.4M202.5 230.6l0.8 2.4M206.1 230.4l0.6 1.5M273.4 225.9l-0.1 2.1M261.8 225.5l-0.4 1.5M174.3 231.8l-0.5 3.3M234.9 270.7l-0.5 1.5M200.3 238.5l-0.5 3.3M157.9 238.9l0.7 3.3M286.1 232.6l-0.1 1.7M286.2 252.6l0.7 1.4M247.3 197.0l0.4 2.8M158.5 234.4l0.7 1.5M240.2 239.4l0.2 2.7M187.1 233.4l0.3 3.3M209.1 227.7l0.5 2.7M291.5 238.5l-0.5 2.8M272.5 249.9l0.8 1.8M157.7 229.1l0.2 1.6M199.1 271.5l0.4 3.3M208.0 242.8l0.8 1.9M285.7 229.8l0.2 3.0M164.9 235.4l0.1 1.5M250.7 201.9l0.1 2.3M238.2 266.5l-0.4 1.8M282.1 252.9l0.2 2.7M167.9 237.9l-0.1 1.9M153.9 234.4l-0.6 2.7M260.6 204.3l-0.0 3.1M246.0 235.1l0.2 2.2M264.6 255.2l-0.5 2.8M160.2 231.8l0.3 2.8M262.3 230.5l-0.1 2.3M287.2 226.8l-0.3 2.5M216.8 201.4l0.6 1.8M276.9 221.4l0.6 2.1M261.9 215.7l0.3 3.0M282.6 236.6l0.3 2.0M165.6 237.3l0.6 2.2M220.4 197.0l-0.3 1.7M208.5 270.5l0.0 2.3M259.8 220.7l0.2 2.0M219.7 228.2l0.0 1.5M148.9 230.0l-0.4 1.7M265.1 263.6l0.6 2.9M204.8 197.2l-0.7 2.5M275.9 236.8l-0.5 1.9M263.1 220.3l0.8 1.8M283.5 250.3l0.5 1.7M222.2 215.0l0.5 2.5M148.7 243.9l-0.7 2.9M157.9 230.6l0.7 2.3M176.7 226.7l-0.1 1.4M231.2 223.0l-0.7 1.6M290.9 234.3l0.2 2.1M238.6 269.3l-0.4 2.9M197.1 229.0l0.5 2.7M179.5 201.4l-0.6 1.5M192.7 222.3l0.8 3.0M176.0 235.5l-0.5 2.9M255.8 203.4l-0.4 2.9M270.6 224.3l-0.5 2.7M280.1 236.6l0.5 3.0M282.7 244.3l0.6 1.9M157.9 230.8l0.2 1.6M185.0 224.2l0.5 2.8M196.4 226.0l-0.6 1.7M273.0 232.7l-0.6 3.3M281.2 245.4l-0.4 2.9M210.8 266.9l0.9 2.7M156.6 233.0l-0.4 1.8M278.0 252.5l-0.4 1.6M256.3 237.9l-0.3 1.8M280.5 231.5l0.8 2.7M245.9 264.4l0.1 2.4M236.2 199.2l0.9 1.4M267.3 214.6l-0.4 1.8M173.0 245.9l0.5 2.4M173.8 238.6l-0.4 3.4M213.0 263.0l0.5 2.6M198.6 209.3l-0.3 2.0M253.0 217.1l0.7 3.3M273.2 220.2l-0.2 2.5M165.2 240.9l-0.4 2.8M282.0 255.3l-0.3 2.7M275.8 251.4l0.9 2.5M288.2 230.1l-0.1 2.2M182.1 209.8l-0.3 2.0M227.5 227.1l-0.6 1.4M291.6 239.5l0.1 2.2M163.6 236.1l-0.0 1.7M193.5 233.7l0.2 2.8M248.7 198.5l-0.3 2.3M239.6 268.0l0.1 2.7M266.8 236.8l-0.5 2.1M295.2 235.1l0.2 1.5M280.6 253.9l0.2 2.6M276.9 251.8l0.1 2.1M243.5 265.7l0.2 2.0M286.2 227.7l-0.0 2.7M256.1 266.5l-0.2 2.7M291.8 237.4l0.7 3.0M276.5 250.7l-0.3 2.6M215.5 264.8l-0.3 2.9M201.8 236.9l-0.1 2.3M252.1 212.1l-0.3 1.4M245.0 269.2l0.6 2.3M193.6 224.8l-0.2 2.3M209.5 225.2l0.9 3.0M247.0 235.0l-0.3 1.5M293.5 236.5l-0.3 2.2M207.2 224.7l0.7 2.5M153.8 222.7l0.0 1.6M158.7 213.0l0.3 1.5M217.1 224.6l-0.3 2.7M279.4 256.5l0.7 3.1M173.8 229.0l0.4 2.5M279.8 225.3l0.3 2.8M250.3 266.1l-0.4 1.5M141.8 230.6l-0.4 2.4M251.5 239.5l0.0 2.4M257.4 252.3l0.7 2.5M196.8 235.3l0.1 2.9M151.6 233.8l0.8 1.5M188.5 223.1l0.8 3.2M260.6 202.6l-0.2 3.3M173.2 246.9l0.4 1.9M215.0 272.8l-0.2 3.1M284.0 244.3l0.4 2.4M199.6 223.5l-0.6 2.5M163.0 236.8l-0.2 1.8M179.4 238.2l0.1 3.1M146.1 238.1l0.7 3.2M206.7 226.7l0.4 2.5M214.4 203.6l0.4 3.3M224.6 269.6l0.8 3.0M266.2 235.8l0.5 1.8M145.8 243.5l0.7 2.3M263.1 266.0l-0.2 1.7M287.2 222.3l-0.2 3.3M218.4 200.5l-0.7 2.7M257.0 210.9l0.1 2.7M275.5 250.9l0.8 3.1M261.3 225.2l0.1 1.4M191.1 232.0l-0.4 2.4M264.7 227.0l-0.7 3.0M260.4 228.6l-0.6 3.1M203.8 235.8l-0.4 3.4M208.8 226.2l-0.2 3.1M270.1 252.0l-0.6 1.8M272.5 222.9l-0.0 2.0M253.6 225.6l-0.4 3.0M189.1 230.8l0.9 3.4M273.1 255.4l0.0 1.6M258.5 260.7l0.3 1.7M247.1 245.0l-0.4 1.8M260.9 202.7l0.1 2.5M175.6 237.7l0.6 1.7M249.5 268.5l-0.5 2.2M252.3 218.7l-0.6 3.0M252.5 215.2l0.3 2.0M275.7 258.7l-0.6 2.1M218.3 231.2l0.0 2.1M246.9 234.0l0.8 1.7M257.4 224.3l0.9 1.6M257.6 264.2l0.7 3.0M169.4 204.7l0.7 3.3M245.8 198.9l0.6 1.5M242.4 203.6l0.8 1.5M263.6 230.5l-0.6 1.5M272.6 233.4l0.2 2.2M151.2 242.1l0.7 1.5M196.7 267.0l0.6 3.3M292.3 236.7l-0.2 3.1M189.5 224.5l0.6 1.9M246.7 229.1l0.3 2.0M259.0 255.2l0.2 2.1M250.6 267.8l0.3 1.9M244.1 224.2l-0.5 2.3M216.1 268.9l-0.5 3.2M206.7 264.6l0.3 2.1M174.4 239.2l-0.6 2.4M260.8 232.1l-0.5 3.0M162.6 234.4l-0.7 2.6M251.1 202.5l0.2 1.8M258.9 261.2l0.3 2.5M196.8 231.6l0.2 3.3M266.0 251.7l-0.6 3.0M196.1 236.0l0.2 2.3M177.8 244.8l-0.4 2.6M174.4 231.1l-0.1 2.7M204.6 227.4l-0.5 1.4M276.1 250.2l-0.2 2.2M262.1 229.0l0.9 2.4M272.0 252.5l-0.4 2.3M280.2 252.3l-0.1 2.8M217.6 266.9l-0.6 1.9M229.5 223.2l-0.5 1.6M293.6 232.9l0.6 1.9M214.0 264.7l0.2 1.6M198.1 228.7l0.6 2.6M181.5 199.4l0.3 1.7M206.8 226.5l0.5 2.1M248.7 252.4l0.7 3.2M274.8 258.5l-0.0 3.2M262.3 219.4l0.0 2.2M250.0 233.6l-0.3 2.3M145.2 248.4l0.5 1.9M155.1 238.7l-0.6 1.8M187.0 233.9l0.3 2.6M276.3 243.0l-0.2 2.4M215.7 199.1l-0.1 3.2M198.8 222.0l-0.1 2.5M174.3 233.3l0.1 2.5M150.6 240.9l0.0 1.5M151.8 238.4l0.3 2.3M186.6 233.7l-0.3 2.7M258.5 202.5l-0.4 2.0M259.4 259.8l-0.5 3.2M222.7 266.7l0.7 1.7M144.4 247.4l-0.1 3.0M151.9 223.2l-0.5 2.9M284.7 244.9l0.3 2.3M224.1 228.7l-0.4 2.1M199.7 231.2l0.1 2.3M198.6 225.8l-0.7 1.4M178.9 237.3l0.3 2.2M241.9 202.3l-0.4 1.5M286.9 221.9l-0.7 2.0M146.9 222.4l-0.1 4.3M187.3 196.8l0.6 3.5M215.4 195.4l-0.3 2.9M226.2 196.3l0.4 4.2M246.5 194.0l-0.1 3.4M265.0 204.4l-0.2 3.3M277.6 213.4l-0.5 2.4M292.7 226.8l-0.0 4.1M292.1 250.1l-0.2 4.0M276.0 260.8l0.3 3.7M261.9 266.9l0.4 2.5M244.2 270.2l0.6 4.4M227.1 273.6l-0.2 2.9M212.7 273.1l0.3 4.0M165.2 262.8l0.2 4.4M141.1 245.4l-0.4 4.1"/>
<path stroke="#e8aeb3" d="M239.3 229.4l0.3 2.7M259.6 204.7l0.9 1.9M206.9 229.3l0.6 1.9M154.9 216.9l-0.6 2.9M179.2 233.5l-0.7 2.8M185.1 228.8l0.4 3.1M167.8 238.1l-0.7 1.9M253.8 238.0l0.6 1.4M239.8 197.7l-0.5 1.8M211.4 229.4l0.6 2.7M263.0 238.7l0.1 2.4M294.2 233.9l0.8 2.3M277.5 238.8l-0.1 1.4M279.4 225.7l-0.1 2.1M250.5 239.2l0.6 2.3M143.0 231.7l-0.7 2.1M231.9 229.3l-0.4 1.8M152.2 236.5l0.7 1.6M179.5 234.3l0.3 2.2M148.5 226.7l-0.1 2.9M244.6 222.9l-0.0 3.3M251.9 197.4l0.2 1.8M192.4 226.0l-0.3 3.2M228.5 239.8l0.4 2.3M280.4 251.0l-0.6 2.1M273.5 238.0l0.1 2.9M274.1 259.6l-0.3 3.2M251.7 201.2l0.5 2.6M205.1 267.3l-0.2 3.3M157.7 241.8l0.7 3.4M284.8 232.2l-0.3 2.5M153.4 257.7l0.8 3.1M282.9 255.3l0.1 3.2M257.7 216.6l0.2 3.3M288.1 245.4l0.4 3.3M171.2 237.3l-0.0 1.4M189.4 225.2l0.0 1.7M210.8 227.1l-0.6 2.8M219.4 228.3l-0.0 1.6M230.6 211.7l0.0 1.4M213.5 229.0l-0.4 1.9M262.7 254.2l0.5 3.0M196.3 224.1l0.7 2.9M283.2 246.3l-0.3 2.8M172.0 214.4l-0.4 2.7M262.7 228.6l0.2 3.1M218.9 226.5l-0.3 2.1M181.5 237.5l-0.4 2.9M144.0 237.2l0.4 3.2M227.1 201.1l0.4 2.6M247.7 233.0l-0.6 2.1M172.0 239.2l-0.6 3.2M251.9 234.1l0.5 1.8M248.9 200.0l-0.3 2.0M179.4 214.8l-0.4 2.4M288.3 250.8l-0.3 2.2M249.5 263.2l-0.3 3.4M174.8 236.3l-0.3 1.8M156.9 227.9l0.2 2.9M275.1 260.4l0.0 1.6M149.0 236.6l0.6 3.2M184.8 228.0l0.1 2.9M250.2 237.1l-0.2 2.6M251.6 212.0l-0.3 2.1M261.4 236.0l-0.2 1.6M201.7 235.2l0.6 1.9M231.5 199.3l0.6 2.9M205.9 235.8l-0.4 2.0M179.0 203.6l0.4 1.8M279.8 240.4l-0.6 2.1M163.2 232.7l-0.2 2.2M290.3 246.3l-0.0 2.8M223.8 229.1l0.3 2.2M207.1 224.0l-0.3 1.6M246.9 233.3l-0.3 2.0M213.6 265.9l-0.3 2.2M248.3 208.7l-0.0 3.0M244.7 196.7l0.6 2.6M199.6 224.2l-0.3 1.7M272.3 235.1l0.6 1.4M170.0 231.4l0.7 2.3M201.3 233.7l-0.2 2.2M252.6 196.8l0.2 3.2M225.4 269.7l-0.2 1.5M196.0 257.3l-0.2 2.8M284.3 252.0l0.6 3.1M256.4 208.1l0.5 1.6M156.8 258.1l0.5 1.5M228.3 200.6l-0.7 2.6M248.8 202.0l-0.2 1.9M195.1 222.9l-0.5 2.6M212.0 224.1l0.2 3.0M265.7 226.3l0.7 3.0M233.4 216.3l-0.1 1.5M256.7 225.9l0.6 1.5M252.9 232.4l0.1 3.1M172.8 204.3l0.9 3.1M196.2 235.6l-0.0 3.3M233.2 199.6l-0.6 1.7M263.2 264.3l0.8 2.2M190.5 236.4l0.4 2.9M229.4 271.1l-0.5 3.3M209.1 229.0l0.0 2.4M261.2 251.6l0.8 3.4M193.3 229.6l-0.2 1.5M268.2 215.9l-0.0 1.7M149.2 232.6l0.2 3.0M248.5 229.6l-0.5 1.5M203.3 231.5l0.9 2.8M266.1 219.0l-0.1 2.3M262.8 218.0l0.6 2.2M192.9 215.0l-0.3 2.4M208.9 270.1l0.6 2.4M146.1 230.8l-0.2 1.9M141.1 225.6l-0.1 4.0M190.8 197.4l-0.0 3.0M265.3 204.1l0.3 2.7M290.1 223.4l-0.4 3.5M254.3 268.8l0.0 3.1M221.1 272.2l-0.5 3.7M153.8 259.4l0.4 4.0"/>
<path stroke="#a02a56" d="M187.3 267.6l0.0 3.4M230.1 205.5l0.1 2.5M218.7 260.1l0.4 2.4M182.4 256.2l-0.7 2.0M205.6 222.4l0.7 1.6M277.3 215.3l-0.0 3.0M256.6 244.1l-0.2 2.9M255.1 216.1l0.7 3.2M220.2 214.3l-0.3 3.0M190.0 200.2l0.5 3.3M232.9 252.9l0.3 2.6M215.1 248.2l-0.3 3.3M220.4 215.8l0.1 3.1M178.7 244.7l0.1 2.4M241.2 264.6l-0.4 2.1M175.9 257.6l-0.3 2.1M184.6 215.4l-0.7 1.6M247.2 250.8l-0.1 2.8M176.9 267.0l0.2 1.6M163.4 256.5l-0.4 3.3M231.8 210.9l-0.2 2.7M183.1 239.7l0.8 2.6M189.5 256.7l0.4 2.4M238.3 248.6l-0.1 1.6M171.5 244.0l-0.1 2.6M169.5 246.6l0.4 2.2M163.8 211.1l-0.2 2.5M244.1 247.1l-0.7 3.2M185.5 239.3l-0.5 2.6M233.2 243.4l0.9 2.2M219.0 215.6l0.9 2.0M193.2 221.2l0.2 2.8M160.3 247.4l0.4 2.0M171.3 264.2l0.3 2.9M226.7 207.0l-0.3 2.0M258.4 245.0l0.1 2.5M169.2 212.8l-0.4 2.8M209.1 218.2l0.3 3.3M225.8 245.8l0.5 2.1M212.4 199.0l0.9 2.8M207.0 264.3l0.8 2.8M221.5 260.7l-0.3 2.4M229.5 244.5l0.7 1.7M230.1 249.3l-0.3 1.5M191.1 207.6l0.1 3.0M184.0 200.1l0.1 2.8M250.2 245.1l0.3 2.4M169.9 247.7l0.5 1.4M205.7 211.0l0.9 1.6M175.2 217.7l0.7 1.6M152.1 251.1l0.7 2.2M197.9 211.3l-0.3 3.0M262.3 212.9l0.5 2.2M184.2 218.9l-0.2 3.4M228.0 222.5l0.6 1.6M202.4 247.3l0.3 3.2M286.6 235.8l0.1 2.8M187.0 213.3l0.6 3.3M203.4 244.6l0.5 2.9M223.0 257.0l-0.1 2.4M234.8 251.8l0.3 2.9M231.6 254.8l-0.5 1.6M188.8 265.9l0.2 3.3M202.1 239.1l0.2 3.3M265.8 234.3l0.6 1.7M223.0 255.2l0.0 1.8M226.5 220.7l0.6 2.1M190.1 208.2l-0.4 3.1M205.7 241.9l0.5 2.1M238.2 248.1l0.5 1.7M233.2 224.7l0.7 1.9M149.2 248.1l0.0 2.1M174.6 260.3l-0.6 2.2M255.2 249.3l0.2 3.0M190.0 203.5l-0.6 2.0M224.1 260.3l0.3 2.3M270.0 237.7l0.7 2.1M280.2 219.8l-0.3 3.4M186.1 267.7l0.3 3.3M191.2 206.7l0.9 2.4M215.4 253.6l0.5 2.0M203.1 200.4l0.1 1.5M229.5 197.5l-0.2 2.0M158.4 261.9l-0.7 1.5M154.5 223.2l-0.1 1.6M232.0 250.6l0.3 3.3M226.8 251.4l0.1 2.7M209.8 256.0l0.3 3.4M233.5 201.0l-0.4 2.3M227.6 244.6l0.4 2.4M280.2 219.8l-0.5 3.3M199.7 257.6l0.3 3.2M193.5 258.9l0.8 2.3M196.4 202.7l0.8 2.2M177.0 218.4l0.1 1.5M160.8 224.1l-0.1 2.6M243.9 254.7l0.3 1.9M158.4 252.3l-0.6 3.2M241.1 226.6l-0.4 2.1M224.6 263.9l-0.6 1.6M178.0 216.9l0.3 2.5M206.4 254.6l0.6 1.5M165.9 246.1l-0.5 2.0M247.7 227.0l-0.2 3.0M196.3 265.3l-0.2 3.0M176.9 263.0l-0.2 1.8M218.6 245.0l0.2 1.4M179.4 224.3l-0.1 2.3M151.3 246.2l0.3 3.2M202.0 273.3l0.7 2.2M175.9 256.6l0.7 3.0M177.7 206.0l-0.4 2.0M209.6 248.3l0.1 3.2M197.0 256.8l0.1 2.4M155.8 230.7l0.0 2.0M239.7 206.4l0.5 3.3M198.4 206.1l-0.6 3.4M181.7 210.8l-0.5 1.7M189.7 211.1l-0.2 2.7M168.4 258.0l-0.4 1.8M237.2 208.1l0.7 1.5M219.5 263.5l0.6 2.4M187.9 243.1l0.0 3.3M169.7 254.1l0.1 2.5M172.5 226.6l-0.1 2.0M196.6 242.1l0.3 2.0M221.4 257.1l-0.5 2.1M189.1 239.3l-0.0 2.8M191.9 208.0l0.8 2.3M250.2 244.8l-0.2 3.0M241.2 196.6l0.4 3.4M241.2 249.6l0.5 3.2M238.6 217.2l0.8 1.5M220.0 229.9l-0.3 2.7M147.1 249.0l0.5 1.6M232.4 207.7l-0.1 2.3M235.0 206.5l0.1 2.9M203.7 253.0l-0.3 1.8M202.9 265.4l-0.2 2.4M213.1 262.4l0.3 1.8M245.4 225.5l0.4 2.9M223.1 244.2l-0.6 3.0M263.3 214.4l0.6 3.0M160.8 258.4l0.7 2.4M217.6 262.1l-0.1 3.3M205.2 221.6l0.2 2.9M226.6 243.8l0.5 2.7M218.8 255.8l0.8 2.0M278.4 229.7l0.2 2.4M255.6 242.2l-0.1 2.8M279.5 220.7l0.0 2.9M166.0 248.2l0.6 3.4M192.6 217.4l-0.6 3.1M260.1 247.9l0.1 2.3M254.3 255.5l-0.4 1.8M183.3 252.0l-0.6 2.2M258.2 246.6l0.6 2.0M160.5 228.1l0.8 1.5M163.6 255.1l-0.4 1.5M242.5 251.1l0.9 3.1M233.3 242.5l0.3 2.5M183.3 265.0l-0.2 2.2M195.5 242.7l-0.4 2.2M267.2 259.8l0.3 2.0M241.2 216.5l0.5 2.3M164.2 223.6l-0.4 3.4M171.8 236.6l0.4 2.5M245.8 247.6l0.6 2.9M216.8 212.5l0.6 1.6M184.7 253.0l0.3 2.7M166.6 243.8l0.0 2.0M203.9 203.1l0.1 2.9M192.6 251.2l-0.4 1.5M242.3 203.8l-0.4 3.2M204.4 213.7l0.6 1.9M160.7 225.2l0.1 1.6M208.6 209.0l0.5 3.3M152.8 246.5l-0.6 3.3M238.7 237.5l-0.4 1.8M177.8 264.3l0.3 2.1M174.2 241.2l-0.6 2.1M232.9 220.2l0.7 3.0M169.3 207.0l0.3 3.0M233.9 219.5l-0.1 2.2M185.1 245.8l0.0 2.2M156.8 251.9l0.5 2.4M262.8 213.0l-0.6 1.8M159.1 254.2l-0.2 1.5M238.1 252.7l0.4 3.1M196.4 241.3l0.3 1.8M215.1 203.7l0.2 3.3M233.5 241.2l0.4 3.0M218.5 251.4l0.4 1.8M174.2 248.8l0.6 1.4M215.2 251.0l-0.3 3.4M252.2 253.1l-0.5 2.2M223.6 204.2l-0.3 3.2M221.3 209.5l-0.4 1.6M173.5 216.8l0.2 3.4M248.5 256.2l-0.6 3.0M151.5 255.8l0.2 1.6M240.5 203.8l-0.6 1.9M175.0 223.2l0.1 1.8M211.3 214.5l0.1 1.6M225.4 244.6l0.2 1.7M273.0 257.7l-0.6 3.0M200.8 213.2l-0.1 2.3M203.7 221.7l0.8 2.8M235.2 259.9l-0.0 1.6M267.5 263.0l0.0 3.8M151.8 257.7l-0.3 3.3"/>
<path stroke="#b43664" d="M175.3 244.9l0.0 2.1M181.1 202.4l-0.3 2.3M240.8 237.4l0.3 3.1M245.5 218.7l0.2 2.7M176.3 221.4l-0.1 2.1M154.3 249.0l-0.4 3.0M214.7 207.9l0.8 1.5M200.3 251.4l-0.4 1.9M211.2 259.5l0.8 2.2M191.8 253.5l0.2 3.1M253.9 212.3l-0.5 2.1M170.5 253.2l0.8 2.7M196.7 215.8l0.6 3.0M252.4 209.9l-0.7 3.2M235.0 241.9l-0.6 2.4M194.1 204.5l0.4 3.4M215.3 208.1l0.1 2.9M199.6 241.7l-0.1 3.1M224.3 210.9l-0.3 2.0M175.1 207.2l0.9 2.2M183.3 268.2l-0.2 2.4M252.5 229.9l-0.0 2.1M170.2 254.5l-0.2 2.8M183.0 241.0l-0.1 2.1M231.1 248.2l-0.3 1.4M168.5 248.9l-0.4 1.7M178.8 221.4l-0.4 2.8M182.6 261.6l0.0 2.7M187.4 202.1l0.5 2.9M262.6 243.5l-0.0 2.7M196.1 216.7l0.2 1.7M259.5 246.1l0.8 2.6M170.1 257.1l-0.6 3.1M251.2 208.4l0.6 2.8M181.5 206.0l-0.6 1.8M266.1 244.7l0.8 2.0M206.9 265.3l0.0 3.3M174.4 215.4l0.7 2.8M173.6 246.4l0.8 2.2M202.7 249.9l0.3 2.1M170.6 212.9l0.5 2.1M226.0 248.9l-0.3 1.7M193.7 259.3l-0.1 3.0M169.8 208.2l0.8 3.0M225.5 249.5l-0.2 3.3M267.4 258.2l-0.7 2.7M159.3 248.9l0.8 3.3M199.3 268.4l-0.3 3.1M241.2 197.3l0.0 1.6M218.0 215.4l-0.1 2.4M211.1 212.3l-0.3 2.3M279.7 232.5l0.8 3.1M203.0 200.6l-0.1 2.7M202.7 258.2l0.1 2.8M165.3 251.3l-0.6 2.3M188.3 218.5l-0.1 1.6M154.0 243.2l-0.1 1.8M241.8 256.5l0.5 1.9M184.6 201.9l0.4 2.0M171.0 254.9l0.9 2.7M224.7 207.7l-0.3 1.7M213.2 259.9l0.7 2.3M167.5 214.5l-0.6 3.1M216.6 247.1l0.2 2.0M260.4 209.6l-0.4 3.1M225.3 213.8l0.1 1.4M182.7 221.2l0.9 2.0M275.2 226.4l0.5 1.8M216.1 220.6l0.2 1.6M199.5 252.9l-0.2 2.5M224.0 264.2l-0.7 1.6M206.1 245.6l0.4 1.6M196.7 258.9l0.3 2.8M167.0 228.4l0.5 2.0M174.3 223.6l0.8 3.0M207.9 219.7l-0.0 2.7M218.5 249.9l0.6 1.4M235.9 255.2l0.6 3.1M198.8 242.1l0.2 2.8M212.5 259.8l-0.3 2.1M199.7 265.6l0.4 1.4M193.8 238.7l0.7 1.6M271.2 243.8l0.2 2.0M213.2 202.1l-0.1 2.2M262.0 213.7l0.4 2.2M206.1 221.4l0.2 2.4M168.7 222.5l-0.2 2.1M210.2 218.4l-0.7 3.0M204.6 219.7l-0.6 2.5M235.5 211.7l0.8 2.1M286.2 234.4l0.3 2.6M204.0 200.4l0.2 1.7M186.9 240.0l0.1 3.2M200.1 256.0l0.5 2.8M246.7 242.1l-0.3 1.4M194.1 214.1l-0.4 1.8M263.8 212.1l0.8 2.1M262.8 259.5l-0.2 1.7M206.8 207.4l-0.4 1.7M226.9 248.2l0.6 2.2M257.3 248.9l0.4 3.3M223.7 204.2l-0.6 3.1M176.2 240.5l0.2 2.8M232.5 207.8l-0.1 3.0M179.7 261.6l-0.5 2.2M268.4 259.9l0.6 2.8M201.2 209.1l-0.3 2.0M246.0 225.5l0.1 2.4M202.6 219.8l0.3 2.9M209.1 252.9l0.4 3.3M206.8 246.8l0.8 2.2M196.1 255.2l0.6 3.3M264.4 224.6l-0.0 1.5M235.9 206.5l-0.2 2.4M194.4 240.4l0.5 1.7M178.7 224.0l-0.2 2.3M216.2 261.8l-0.4 1.9M179.3 217.0l-0.4 2.5M223.6 210.5l0.1 2.4M221.8 205.9l0.9 1.8M239.7 243.9l0.2 2.2M217.5 265.8l0.9 3.2M191.8 210.2l-0.2 2.2M162.1 224.9l0.3 2.0M155.6 252.2l0.2 2.8M182.3 264.9l0.4 2.1M257.5 246.5l-0.3 3.2M259.5 263.5l-0.3 2.9M239.0 257.0l-0.3 1.8M179.3 224.8l0.3 1.9M206.6 204.1l0.3 2.0M168.1 260.3l0.1 2.1M212.0 221.7l0.2 1.7M259.9 229.3l-0.0 1.5M167.4 222.9l0.5 1.4M228.8 242.1l0.7 1.9M242.9 218.6l-0.5 2.7M153.6 245.2l0.8 2.5M187.1 220.2l-0.4 1.5M223.9 243.9l-0.2 3.3M166.2 251.2l-0.6 2.9M200.0 207.1l0.3 2.3M263.6 210.1l-0.5 1.7M260.1 212.3l-0.2 2.8M212.5 206.7l0.6 1.8M230.9 205.9l-0.4 3.3M200.5 259.1l0.1 1.6M240.9 254.8l-0.5 1.9M158.2 227.6l0.1 2.4M148.0 248.7l0.2 2.5M267.2 260.3l-0.3 2.3M189.0 210.9l-0.4 2.4M263.3 222.2l0.4 2.8M239.8 206.0l-0.3 1.4M238.0 248.5l0.0 1.8M159.8 253.2l0.2 2.6M256.9 214.3l0.3 2.5M236.6 240.6l-0.6 2.9M200.2 253.2l-0.1 2.8M227.6 199.2l0.9 1.5M203.3 202.5l-0.7 2.6M225.8 253.8l0.4 3.0M229.7 258.9l0.9 3.0M162.1 225.8l-0.7 1.8M192.3 246.2l0.8 2.4M213.9 257.9l-0.0 3.2M189.4 215.2l-0.1 2.0M232.7 247.6l0.8 3.3M245.2 257.2l0.6 2.9M190.0 217.5l-0.2 3.1M181.7 250.9l-0.4 2.6M224.2 214.1l-0.2 1.8M275.2 226.2l0.1 2.0M178.2 249.1l0.0 2.0M184.3 203.9l0.2 2.7M209.1 221.0l-0.1 1.8M213.1 258.0l0.7 2.3M192.7 239.5l-0.3 2.5M234.3 213.8l0.5 2.5M223.9 204.0l-0.2 2.3M179.0 251.0l0.8 3.2M177.4 251.7l0.6 3.1M199.3 208.0l0.3 3.0M196.6 246.9l0.7 2.9M228.3 260.0l-0.5 1.7M194.8 262.3l0.5 2.3M266.0 230.6l0.8 1.5M200.2 251.5l0.2 2.7M185.5 218.5l0.4 3.2M248.6 225.6l-0.4 2.2M180.4 265.9l0.3 3.1M174.9 217.2l-0.1 2.2M264.3 258.3l0.9 2.3M232.6 209.3l-0.1 1.7M195.7 218.1l-0.4 3.0M199.2 207.9l0.8 1.9M206.0 245.9l0.3 1.5M173.4 213.7l0.7 1.9M191.7 256.7l-0.1 1.6M166.6 218.6l-0.2 1.4M174.5 218.5l-0.3 1.4M194.9 240.3l-0.0 2.8M163.6 262.7l0.9 2.3M215.4 252.7l0.1 2.5M200.4 212.3l0.4 1.4M242.7 240.8l-0.4 2.8M264.5 257.5l-0.1 3.4M223.4 224.8l0.2 1.4M186.5 259.2l0.9 3.3M183.0 203.0l-0.6 1.7M202.2 239.5l-0.4 2.1M242.1 218.5l-0.3 1.6M189.1 269.4l0.3 1.4M233.7 202.4l-0.3 1.5M243.5 206.1l-0.1 3.1M178.2 244.7l0.9 2.8M272.6 214.6l-0.5 1.4M233.3 241.8l-0.6 2.3M194.3 262.3l-0.5 3.2M181.3 203.4l-0.1 1.8M251.8 207.2l-0.2 2.8M259.6 211.4l0.6 3.2M231.0 245.8l0.1 2.1M158.2 225.6l-0.1 2.3M179.9 258.0l-0.1 2.8M248.8 251.7l0.6 2.7M238.8 219.8l-0.1 2.2M209.0 247.5l-0.0 2.4M253.2 250.5l0.2 3.3M208.6 252.2l-0.5 2.2M170.9 256.8l-0.5 2.9M274.2 227.6l0.9 3.3M161.3 220.6l-0.6 2.2M187.8 213.9l-0.3 2.0M160.6 250.8l-0.6 1.8M250.3 226.4l0.3 1.8M268.9 245.5l0.8 1.8M154.0 223.9l0.2 2.6M162.4 220.4l0.0 3.1M239.9 264.5l0.0 1.6M230.7 265.8l0.1 1.9M191.0 264.8l-0.0 2.9M206.3 215.3l-0.5 2.2M195.2 252.5l0.7 2.8M270.1 230.4l-0.5 3.0M178.6 205.3l0.6 1.8M224.9 272.8l0.3 1.7M247.4 247.2l-0.5 3.3M176.0 205.5l-0.2 1.8M165.3 242.8l0.3 2.6M252.5 197.4l0.6 3.0M258.1 227.4l-0.5 2.9M161.6 226.3l-0.7 2.0M287.6 254.3l-0.4 2.3M211.5 209.4l0.8 3.2M182.6 243.5l-0.5 1.4M209.7 260.7l0.9 1.8M147.3 245.8l-0.2 2.0M168.7 214.2l0.6 1.8M161.0 213.4l-0.1 3.2M271.6 216.6l-0.7 3.3M243.3 244.8l0.0 1.7M265.2 255.1l-0.6 1.8M195.8 220.4l-0.2 2.3M238.9 219.0l0.3 1.8M229.8 264.5l0.2 2.9M239.4 220.6l0.6 2.4M234.3 204.4l-0.2 2.1M254.4 242.8l-0.1 2.8M178.5 251.6l0.1 3.0M199.0 268.3l-0.6 3.1M238.3 255.5l0.6 3.0M243.6 227.7l0.7 1.9M214.0 211.0l-0.0 2.5M168.7 213.6l-0.6 2.5M183.6 214.1l0.2 2.2M225.2 248.9l0.8 2.0M239.0 224.6l0.4 1.8M171.4 231.6l0.6 2.8M217.3 208.4l0.1 2.3M261.6 245.6l-0.6 2.9M178.2 268.1l0.2 3.1M248.8 225.0l-0.1 2.7M148.0 250.1l0.7 2.0M197.6 242.6l0.1 2.0M189.3 247.8l-0.3 3.2M284.2 243.3l-0.2 1.8M196.9 211.2l0.8 1.8M246.1 243.2l0.6 1.8M201.8 217.8l0.2 3.2M241.5 205.7l-0.5 1.5M223.0 247.0l0.6 2.4M244.5 255.1l0.4 1.7M247.7 245.6l0.3 2.0M171.5 247.0l-0.5 2.8M175.9 225.9l0.4 1.7M246.8 251.3l0.6 1.7M218.7 255.4l0.8 1.5M221.7 259.6l0.5 3.1M214.6 256.8l0.6 2.8M235.8 212.6l-0.0 2.2M168.6 251.7l-0.6 1.9M199.4 206.5l0.3 3.3M215.3 220.6l0.4 1.8M254.9 247.7l0.1 2.8M212.6 204.2l0.5 1.7M181.8 214.3l0.9 1.8M201.1 215.9l0.2 2.3M182.3 244.7l-0.1 1.9M172.2 247.9l-0.0 2.6M230.8 266.0l0.7 2.6M189.0 213.8l-0.6 2.4M200.0 242.3l0.6 1.9M257.3 220.6l0.6 2.9M241.4 263.2l0.5 3.2M192.1 253.6l0.6 2.7M154.9 251.2l0.7 2.6M228.5 249.6l-0.3 1.9M184.8 203.5l-0.6 1.6M185.1 255.7l-0.4 3.3M266.3 244.9l0.1 3.0M257.1 259.9l-0.5 2.9M206.3 242.9l0.8 1.7M212.6 262.9l0.7 1.8M258.2 200.5l0.5 3.3M234.8 225.8l0.5 2.5M158.0 227.8l0.7 2.0M164.7 246.5l-0.4 2.1M167.7 222.1l-0.1 2.7M187.1 246.4l0.5 2.2M179.4 217.2l0.7 2.8M233.4 264.1l-0.1 2.5M193.9 257.0l0.5 2.0M210.5 206.5l-0.6 3.2M264.1 215.5l-0.2 3.0M221.1 256.3l0.5 2.2M207.7 252.8l0.1 2.5M181.3 246.5l-0.2 3.1M209.1 212.2l0.7 3.0M180.3 267.0l0.3 2.9M221.7 252.9l0.4 1.9M210.8 255.1l-0.7 2.5M211.0 208.4l-0.6 1.6M189.2 267.5l-0.5 1.6M240.9 255.6l-0.0 2.7M235.9 219.3l-0.6 1.5M210.2 205.7l-0.5 2.1M253.0 256.5l-0.3 2.1M169.4 217.0l-0.4 1.9M210.0 261.1l-0.3 2.7M173.9 241.6l-0.5 3.0M231.9 224.0l-0.1 2.0M204.1 230.4l0.9 2.8M263.2 226.2l-0.2 3.1M223.7 202.7l0.5 2.0M196.6 211.8l0.1 3.0M213.8 212.3l-0.4 2.8M175.3 221.7l0.6 2.1M264.7 212.5l0.2 1.7M175.3 261.1l0.9 3.4M183.8 216.3l-0.5 2.6M191.1 257.2l0.5 2.3M269.0 262.0l-0.2 2.8M198.9 217.3l0.9 1.7M148.5 249.4l0.8 2.8M184.0 266.8l0.3 2.7M165.1 264.1l-0.1 2.3M160.8 247.3l-0.1 3.0M205.9 232.2l-0.3 3.1M215.3 217.0l0.3 1.8M192.0 259.8l0.6 3.4M200.5 261.0l0.4 1.7M239.6 202.2l-0.3 3.4M226.9 215.8l-0.5 3.4M252.4 253.6l-0.1 2.4M217.8 220.0l0.3 2.2M176.9 210.0l0.7 2.1M227.4 244.3l0.5 2.0M171.2 245.9l-0.2 3.4M206.9 259.5l0.5 2.3M274.7 232.6l-0.0 1.8M191.4 237.6l-0.7 2.8M161.5 209.4l-0.3 3.4M193.3 196.2l-0.4 4.0M272.7 262.4l0.4 3.8M264.8 264.8l-0.1 3.8M193.3 271.0l0.4 3.6M181.4 269.8l0.1 4.2M164.3 263.0l0.5 3.8M141.3 244.5l-0.0 2.9"/>
<path stroke="#c2406f" d="M264.3 212.7l-0.2 1.6M185.2 252.6l-0.4 1.8M167.3 207.9l-0.2 2.8M256.5 209.6l0.7 1.6M167.3 240.8l0.2 3.0M186.8 216.7l-0.2 1.6M244.7 245.9l-0.2 1.4M244.0 215.8l0.5 2.7M172.8 214.9l0.4 3.3M163.3 211.1l0.4 1.7M189.1 211.1l-0.1 1.4M200.2 209.3l0.3 2.4M237.6 260.3l-0.1 3.4M241.5 206.5l0.7 2.6M191.5 216.6l-0.3 2.7M245.7 219.1l0.8 3.2M238.1 258.8l0.6 1.9M199.2 262.5l0.5 1.6M263.3 211.7l0.8 1.5M184.9 217.9l0.4 2.9M185.9 204.1l0.1 1.6M222.9 204.1l-0.6 2.9M201.8 249.3l0.3 2.8M253.1 260.2l0.2 2.9M176.7 203.6l-0.6 1.6M248.5 253.3l0.0 2.9M189.4 200.2l0.8 2.6M237.4 204.9l-0.7 2.1M187.9 256.3l0.6 3.2M199.2 249.0l-0.2 1.9M268.2 231.4l0.0 1.8M178.0 207.4l0.3 2.0M205.4 198.9l0.3 3.1M183.7 242.1l0.0 2.4M225.5 218.9l0.4 1.9M173.9 261.8l-0.3 2.9M226.5 210.9l0.0 2.3M185.7 203.9l-0.5 2.0M258.9 245.0l0.5 1.6M191.5 252.7l-0.6 1.6M150.1 246.1l0.3 2.6M155.7 246.3l0.7 2.1M266.3 256.3l-0.1 2.5M239.7 219.8l-0.2 1.6M187.9 215.9l0.4 1.8M167.8 222.9l-0.3 2.6M156.8 246.4l-0.4 2.1M166.0 247.9l0.5 2.9M184.2 200.2l-0.1 3.1M261.4 240.9l-0.4 2.3M197.0 263.4l0.3 2.5M164.1 247.3l0.6 2.1M221.5 252.1l0.1 1.4M269.8 262.9l0.2 2.4M262.0 254.0l0.4 1.7M228.5 253.8l-0.6 2.5M191.2 244.8l-0.1 2.2M261.1 247.3l0.2 1.5M177.2 267.4l0.2 1.7M205.4 248.8l-0.6 3.3M187.8 219.0l0.0 2.6M259.2 203.2l-0.7 2.5M236.7 246.8l0.6 2.5M243.2 216.8l0.8 2.9M268.8 230.8l0.7 2.7M195.8 254.3l-0.6 1.7M151.7 249.3l0.5 2.7M264.5 227.3l0.1 1.9M273.6 220.1l0.1 2.6M233.5 237.0l-0.1 2.6M259.2 225.7l0.1 1.6M165.8 256.7l0.7 3.1M184.1 248.8l-0.4 1.6M269.8 241.4l0.0 2.5M209.0 242.6l0.7 2.4M217.8 260.6l0.8 2.0M230.5 249.9l0.0 2.7M241.3 237.3l-0.1 1.4M196.1 239.6l-0.4 1.9M265.3 240.3l-0.3 3.1M164.1 260.0l-0.7 3.4M270.6 232.6l-0.2 1.7M233.2 237.1l-0.6 1.5M197.6 266.8l-0.2 2.3M289.4 233.2l-0.6 2.6M217.1 250.6l-0.2 1.8M223.1 211.1l-0.5 1.9M186.2 226.9l0.6 1.8M176.4 259.5l0.8 2.8M282.1 230.0l-0.4 3.4M233.4 253.0l-0.7 1.7M226.2 219.8l0.1 2.9M246.7 263.6l0.6 1.5M245.9 253.3l-0.1 2.6M201.4 263.2l-0.7 3.0M243.6 263.8l-0.1 1.6M160.8 258.9l-0.5 1.8M229.1 251.6l-0.4 2.6M151.6 247.9l-0.7 3.0M179.0 259.3l-0.4 3.0M173.1 207.0l0.7 1.6M205.6 206.9l0.6 1.4M198.9 219.5l-0.2 2.8M225.5 221.7l0.2 1.8M213.8 220.5l-0.2 3.3M179.0 224.9l0.1 3.4M244.8 253.0l-0.0 2.9M161.3 224.2l-0.2 1.5M235.5 207.0l0.3 3.1M163.5 256.1l0.5 2.4M243.1 236.2l0.8 2.3M212.0 215.2l0.9 2.1M229.1 199.0l0.5 2.0M235.9 249.2l0.7 2.8M180.0 239.7l0.8 2.1M185.3 252.0l0.2 2.7M217.3 245.5l-0.5 2.9M184.4 245.1l0.4 3.1M240.6 252.8l-0.2 2.2M175.7 204.0l0.3 2.0M166.2 221.9l0.5 2.1M213.2 222.8l0.6 1.7M161.8 249.1l0.4 2.3M187.4 245.1l0.1 2.0M271.5 215.9l-0.3 1.8M234.3 224.2l0.7 2.0M179.4 265.6l-0.0 1.7M164.6 262.4l-0.5 2.8M256.9 219.4l0.2 3.3M196.0 248.0l0.6 1.7M254.0 251.2l-0.0 2.3M199.6 218.7l0.8 1.8M225.7 257.0l-0.6 2.3M189.6 245.6l0.2 2.5M240.3 199.1l0.4 3.2M239.6 215.8l0.1 3.0M264.8 255.4l0.8 2.5M197.4 216.1l0.2 2.6M261.3 254.7l0.1 1.6M236.5 253.1l-0.4 1.8M242.9 249.6l0.8 1.5M212.5 203.6l-0.5 1.8M208.4 215.3l-0.3 3.3M231.6 269.9l-0.0 2.7M189.7 221.7l0.2 3.3M274.3 232.5l0.6 2.5M279.5 234.1l0.1 1.5M245.9 209.3l-0.2 2.9M230.1 256.7l0.2 3.3M217.8 215.1l-0.4 1.6M172.6 215.9l0.8 2.1M172.7 209.4l-0.0 2.9M155.0 255.5l0.1 2.1M218.7 207.2l0.4 2.8M219.4 259.1l0.6 3.3M232.7 240.0l0.8 1.8M190.4 209.5l0.0 1.9M247.7 221.5l0.6 3.3M149.7 246.3l0.8 2.7M230.1 260.3l-0.3 1.9M225.1 221.4l-0.2 1.6M212.0 219.2l-0.3 1.8M222.2 202.5l0.0 2.2M167.1 256.2l-0.3 2.5M221.1 256.1l0.8 3.2M151.0 236.1l0.7 2.1M199.8 217.9l0.3 1.5M163.9 248.4l0.2 3.0M227.7 270.2l0.7 1.4M239.1 201.7l-0.2 1.9M213.7 221.1l-0.6 1.5M183.1 218.5l-0.1 1.6M215.5 220.0l0.9 2.3M169.8 245.7l0.2 1.6M240.9 203.2l-0.1 2.5M197.1 265.6l0.4 2.0M194.7 211.8l0.1 3.3M193.1 209.9l0.4 3.0M195.4 203.7l0.2 2.0M189.8 258.5l-0.3 3.0M192.2 203.4l0.3 2.9M228.0 260.1l-0.7 1.7M229.3 263.1l-0.3 1.8M230.1 203.9l-0.3 3.1M159.1 246.5l0.4 3.3M278.7 229.5l-0.6 2.4M242.9 213.4l0.2 1.8M249.2 245.4l-0.0 1.9M195.1 265.4l0.5 3.1M213.7 213.0l0.7 1.5M160.6 217.8l0.1 3.0M191.2 203.5l0.5 2.2M235.9 226.2l-0.6 1.8M165.1 217.6l-0.1 2.9M267.2 262.9l-0.5 1.7M270.2 238.6l-0.7 1.7M195.4 267.3l-0.4 2.5M245.5 248.4l0.8 1.6M267.9 222.6l-0.5 1.5M231.6 205.5l0.5 1.9M237.7 240.5l-0.2 2.0M255.7 208.4l-0.3 2.7M256.3 250.0l-0.1 2.5M197.1 214.2l0.5 1.8M182.1 245.1l-0.0 2.5M286.7 229.3l0.2 1.9M241.6 203.0l-0.6 1.7M226.1 257.7l0.4 3.1M221.6 217.0l-0.7 3.1M266.0 242.0l0.8 1.8M172.2 211.6l0.5 3.0M220.5 248.9l0.9 3.1M206.4 213.2l0.0 2.4M233.3 269.8l0.8 1.5M251.2 254.1l-0.3 2.7M196.2 249.3l-0.7 3.2M277.9 217.2l-0.3 2.3M175.2 245.3l0.0 2.4M222.3 209.3l0.4 2.8M223.9 207.5l-0.5 3.2M223.5 215.9l-0.2 3.0M154.5 247.8l0.4 2.4M183.7 246.3l0.0 2.0M218.2 250.3l-0.1 1.6M199.0 268.4l0.2 1.9M169.6 215.4l0.4 1.7M213.1 210.8l-0.6 2.3M192.8 238.7l0.2 2.2M240.8 227.5l-0.3 2.8M238.5 248.2l-0.4 2.6M263.9 258.5l-0.5 1.7M230.7 251.9l0.7 2.8M188.9 211.1l-0.2 3.0M218.6 216.0l-0.2 3.3M250.0 260.8l-0.2 2.1M253.2 254.6l-0.2 2.4M268.3 254.9l-0.4 1.6M170.5 252.3l0.9 2.9M170.6 242.0l0.0 2.0M184.1 268.8l-0.1 1.5M167.9 220.7l0.6 2.2M208.8 247.5l-0.7 2.6M183.5 261.1l-0.5 3.1M276.1 218.8l-0.5 2.6M223.4 260.9l-0.2 1.6M229.6 255.8l-0.4 3.3M226.8 255.0l-0.4 1.5M294.2 232.3l-0.2 3.0M152.9 227.5l-0.5 2.2M171.8 204.5l0.6 2.5M196.8 251.1l-0.3 2.3M166.1 249.6l0.0 2.2M191.4 239.1l-0.6 1.7M191.9 209.9l-0.6 2.6M264.4 252.9l-0.2 1.7M237.4 221.2l0.7 1.9M215.6 217.0l0.7 3.4M229.6 214.0l-0.2 3.0M238.8 216.0l-0.3 1.9M260.7 213.0l0.1 3.1M256.2 214.0l0.1 2.1M236.9 240.3l0.2 2.3M253.4 207.7l-0.0 2.6M182.5 242.3l-0.4 2.8M246.5 248.5l0.4 2.3M177.9 207.5l0.3 2.5M156.0 230.5l0.5 2.5M238.3 240.3l0.5 3.2M263.8 250.9l-0.1 1.9M177.3 220.5l0.2 3.1M179.8 221.0l0.5 3.4M236.2 221.0l0.9 1.4M244.8 207.5l0.5 2.4M231.8 222.3l0.9 1.8M177.4 252.4l0.1 1.9M271.1 245.2l-0.6 2.7M186.1 256.3l0.6 2.3M261.0 258.0l0.7 2.1M180.2 206.4l0.3 2.8M150.5 245.8l0.7 3.3M261.2 255.5l0.5 2.1M221.7 248.7l0.6 2.2M219.1 248.5l0.5 3.1M178.7 243.4l0.4 2.6M223.8 221.9l0.2 2.0M241.7 205.8l0.7 2.9M258.7 251.5l-0.0 2.4M165.9 211.9l-0.2 2.2M203.6 220.8l0.4 1.7M202.2 260.4l0.1 2.3M199.8 249.9l-0.3 1.4M205.5 203.7l0.1 1.4M205.3 245.0l-0.2 2.6M169.3 265.1l-0.3 2.5M191.7 257.6l-0.5 2.5M177.9 251.7l-0.6 1.9M164.8 256.5l-0.4 2.0M212.6 204.4l0.3 2.2M241.0 239.6l-0.7 2.2M235.8 202.5l0.6 3.2M200.9 221.1l-0.6 2.9M194.7 255.8l-0.2 1.7M188.0 243.9l0.5 3.0M188.4 214.7l0.6 3.1M221.2 219.3l0.7 3.0M270.6 261.1l0.1 1.7M241.1 262.1l0.6 2.9M229.5 260.4l0.7 3.2M166.7 227.4l0.1 3.0M209.6 251.5l0.6 2.3M222.8 242.2l-0.1 2.5M245.1 253.6l0.4 1.7M254.5 211.1l-0.6 1.9M239.3 259.4l-0.2 2.5M221.9 242.8l-0.4 3.0M263.2 251.0l0.3 2.7M204.8 239.9l0.4 1.7M164.4 220.4l-0.6 2.3M175.0 262.9l0.6 1.7M180.0 222.9l0.7 2.0M173.9 204.2l0.9 3.1M199.5 250.2l0.7 3.3M251.7 217.7l-0.4 2.0M193.4 243.4l-0.5 2.3M183.2 219.0l-0.4 2.8M199.1 217.9l0.9 1.4M204.8 219.8l0.4 2.5M200.1 240.9l0.5 2.2M202.0 258.4l0.1 2.0M211.0 211.2l-0.2 2.0M245.8 218.7l0.9 2.5M190.4 262.4l0.8 1.5M204.0 214.9l0.9 1.9M177.4 202.9l-0.5 3.3M193.0 253.4l0.5 3.0M219.4 257.6l-0.6 3.4M239.8 208.6l-0.3 2.9M229.0 268.8l-0.5 2.6M185.8 203.8l-0.7 1.8M199.2 241.3l-0.5 1.4M170.6 265.3l-0.3 2.1M215.5 222.0l0.8 2.7M255.6 209.0l-0.0 2.9M177.8 254.6l-0.3 2.8M179.2 213.6l0.8 2.1M202.9 216.5l0.4 2.6M276.0 225.6l-0.6 3.2M201.2 254.1l0.4 2.6M200.6 216.7l0.3 3.1M253.9 229.7l0.4 2.2M222.4 244.2l0.5 3.3M258.5 244.0l0.5 1.9M160.5 213.9l0.5 1.5M205.6 245.5l0.8 2.1M214.6 207.8l0.1 1.8M209.7 245.5l-0.5 1.8M242.1 213.7l-0.6 2.3M230.9 246.7l0.7 3.1M202.9 207.4l0.8 1.9M171.6 266.1l0.0 3.1M223.8 243.2l0.4 2.0M179.2 223.6l0.2 2.2M267.3 231.8l-0.1 2.4M211.0 263.5l0.0 2.4M181.7 200.1l-0.2 2.5M161.7 257.9l-0.5 1.8M205.7 243.3l-0.1 2.0M260.6 209.5l-0.6 3.3M193.0 249.7l0.5 2.7M184.4 256.2l0.5 3.4M246.4 258.9l-0.6 2.8M165.0 226.0l0.3 2.3M202.9 250.3l-0.1 2.2M260.4 229.1l0.5 2.5M226.1 254.1l0.7 3.0M263.2 241.8l0.8 2.1M155.0 225.2l-0.1 3.1M206.0 203.3l-0.3 2.2M156.7 220.3l0.7 2.4M254.8 247.2l-0.5 2.2M166.7 204.2l0.7 3.7M174.9 200.8l0.2 2.7M214.4 196.3l-0.3 4.2M279.6 214.9l-0.0 4.0M247.6 270.3l0.6 3.1M171.8 266.7l0.5 3.4"/>
<path stroke="#cf5480" d="M262.2 224.7l-0.1 3.1M164.5 221.9l-0.5 2.5M255.8 223.6l0.2 2.9M202.1 253.4l-0.4 1.4M206.5 232.1l-0.3 3.3M197.3 202.5l-0.0 1.8M225.3 240.7l-0.3 2.5M201.3 220.7l-0.6 2.6M229.1 264.6l-0.2 3.4M153.7 229.8l0.1 2.9M187.8 260.1l0.9 1.6M173.7 242.8l0.7 2.0M169.7 226.4l0.6 2.5M228.5 220.2l0.8 1.9M165.7 249.1l0.8 2.8M197.3 250.6l-0.2 1.7M267.4 246.8l-0.4 2.0M253.6 208.6l0.5 2.4M193.2 219.9l0.6 3.1M222.0 250.9l0.3 2.0M155.3 244.5l0.6 2.2M182.7 260.5l0.7 1.9M271.1 213.3l-0.4 1.5M161.8 257.5l-0.3 2.9M257.6 222.1l-0.4 1.8M155.7 222.7l0.5 2.5M249.2 245.8l0.1 2.4M261.5 262.7l-0.0 2.8M211.9 217.4l0.3 2.5M176.8 248.1l-0.2 2.1M187.6 236.3l0.2 2.5M188.8 206.6l0.1 1.8M161.9 221.5l-0.3 2.1M200.9 251.1l0.8 1.4M162.4 222.8l0.9 3.4M240.2 263.1l0.6 3.2M182.0 268.4l-0.5 1.8M226.1 218.5l0.2 1.8M223.2 212.6l0.4 2.7M161.7 228.1l-0.5 2.0M175.1 208.0l0.5 1.7M200.9 255.1l0.6 3.1M169.2 223.3l-0.5 3.3M268.0 231.8l-0.4 2.7M274.9 226.8l-0.1 2.5M250.6 222.3l0.6 3.0M190.4 202.2l0.8 2.2M209.6 216.1l0.7 2.3M277.8 230.0l-0.7 2.7M242.6 264.4l0.7 1.7M233.1 211.1l-0.4 2.1M198.2 260.3l-0.4 2.9M235.9 244.8l0.4 2.1M213.4 222.6l-0.5 2.1M247.6 250.1l0.7 1.8M245.4 203.2l0.2 2.3M269.9 217.5l-0.6 2.1M173.5 214.7l0.4 2.9M202.3 208.9l-0.0 3.1M197.1 251.0l-0.6 3.3M192.1 258.9l-0.6 1.7M171.3 246.1l-0.1 2.8M240.0 263.6l0.5 2.8M156.0 255.1l0.3 1.8M203.8 245.7l-0.5 2.2M151.6 246.9l0.2 2.8M187.5 205.2l0.3 2.1M197.8 215.7l-0.2 3.2M255.2 208.3l-0.4 2.0M215.6 252.4l-0.6 2.2M213.2 257.6l0.2 2.0M182.2 256.2l-0.2 2.7M254.2 225.2l-0.2 2.3M215.6 221.3l-0.7 2.1M233.5 257.4l0.8 1.6M259.3 201.2l0.2 3.3M242.6 256.1l0.7 2.6M206.9 250.1l0.7 2.3M225.7 256.0l0.6 2.0M179.6 264.1l0.5 3.1M205.6 201.5l0.1 3.4M194.6 260.4l-0.2 1.6M162.7 248.3l0.7 1.6M197.9 248.0l0.8 1.8M165.2 214.9l-0.6 3.0M182.0 223.8l-0.2 1.9M186.3 218.1l0.6 3.3M153.2 227.4l-0.5 2.9M169.9 209.1l-0.2 3.1M209.6 255.4l0.4 3.4M202.3 260.4l-0.5 2.8M173.7 244.1l0.7 2.1M247.1 223.3l0.4 2.3M239.2 269.7l0.4 2.9M171.6 217.4l-0.4 3.3M253.1 252.4l0.5 2.1M150.9 246.9l0.1 1.6M180.6 261.1l0.0 2.4M177.1 218.9l0.7 1.7M240.9 266.1l0.0 2.8M185.3 239.1l0.4 2.8M234.8 207.6l0.3 2.9M169.6 219.1l0.3 2.5M226.9 214.5l0.8 1.9M224.9 257.3l0.0 2.7M235.9 239.4l-0.0 1.8M172.3 249.2l0.0 3.2M266.1 226.1l0.2 1.9M228.7 213.7l0.1 2.5M162.1 248.1l-0.2 2.4M246.2 225.0l0.4 2.7M157.0 258.3l0.7 2.5M264.5 250.8l0.6 2.5M193.5 220.5l0.4 3.3M191.3 214.8l-0.2 2.5M161.0 233.7l-0.1 2.3M183.5 263.6l0.7 2.1M232.8 220.6l-0.3 1.9M244.3 206.5l0.8 2.7M166.3 211.7l-0.1 1.6M252.0 262.8l-0.5 2.3M237.2 246.9l0.3 1.6M183.6 268.4l0.7 1.9M187.8 222.5l-0.5 2.9M200.6 204.6l-0.2 3.3M176.4 264.8l-0.2 2.3M168.0 240.8l0.4 1.6M174.7 243.4l0.6 3.3M247.0 246.8l0.7 2.8M200.2 259.3l0.7 1.9M233.4 256.5l-0.3 3.2M211.1 263.1l0.3 2.5M242.4 225.2l0.2 2.9M176.3 241.3l-0.5 3.1M220.3 215.5l-0.6 1.9M267.1 240.1l0.4 2.3M216.1 221.4l-0.1 3.2M200.5 264.6l0.0 2.3M174.8 250.8l0.4 3.4M257.4 215.4l0.1 3.3M181.3 241.6l0.6 2.5M183.0 242.5l0.4 2.9M170.4 264.6l-0.3 3.0M277.5 255.1l0.6 2.2M235.6 202.7l-0.6 2.6M167.5 241.3l-0.4 1.7M187.9 219.5l-0.7 1.7M190.6 205.6l0.3 3.4M210.1 221.2l0.7 2.7M205.9 216.8l-0.5 1.7M245.3 246.2l-0.4 2.4M172.8 209.0l0.7 1.7M176.2 212.5l0.2 2.8M188.0 256.7l-0.6 2.2M192.0 204.0l0.2 1.6M175.2 220.5l-0.2 1.8M194.4 214.6l-0.2 1.7M211.6 246.0l0.6 3.0M204.8 215.3l-0.3 1.9M167.2 262.6l0.7 2.8M216.9 210.5l0.3 1.4M188.8 210.7l0.9 2.9M232.8 258.6l-0.5 3.3M236.3 262.8l0.7 2.5M189.5 242.3l0.5 2.6M219.7 200.5l0.4 3.1M182.5 221.0l-0.2 1.8M219.7 216.6l0.9 3.2M211.2 251.1l0.2 1.8M257.7 252.9l0.3 2.7M199.4 252.5l-0.7 2.8M253.1 252.8l0.2 2.6M268.1 255.7l0.7 2.7M177.3 246.7l-0.5 3.2M246.4 225.6l0.2 1.9M262.8 223.5l0.4 2.5M189.2 213.1l0.1 3.4M248.5 225.3l0.2 3.0M163.2 222.7l0.7 1.8M223.0 222.3l0.2 2.8M165.4 209.2l0.1 2.3M241.4 216.0l0.9 1.7M173.6 212.9l0.2 2.7M201.5 267.5l-0.2 2.1M189.2 213.4l0.1 3.2M242.3 246.8l0.4 2.9M194.4 254.3l0.7 3.2M264.6 213.1l-0.7 2.1M213.9 261.1l0.4 2.6M200.3 212.2l0.4 1.8M154.6 247.5l-0.2 3.3M189.0 261.1l-0.4 2.8M223.2 251.8l-0.0 3.0M158.5 258.5l-0.0 2.1M191.3 246.7l-0.3 3.2M152.2 227.1l0.0 1.8M258.2 251.1l0.9 2.0M207.4 242.7l0.8 2.2M269.0 233.4l0.8 2.2M165.6 205.7l0.1 2.5M274.5 261.6l-0.4 3.8M162.1 263.9l0.7 2.4"/>
<path stroke="#cc7c8a" d="M274.4 252.9l0.1 3.3M292.0 240.7l-0.2 2.8M185.0 235.9l0.2 1.6M187.1 234.6l0.5 2.4M265.1 207.5l0.2 1.8M261.8 237.0l-0.6 3.3M145.7 252.2l0.0 1.8M206.5 268.1l0.2 3.3M251.8 267.7l-0.3 3.0M181.4 231.3l0.6 2.0M282.3 256.5l0.7 2.6M200.5 269.7l-0.1 1.8M261.9 241.0l-0.3 1.6M252.5 267.4l0.4 3.0M191.4 228.8l-0.2 2.6M226.3 201.7l-0.4 1.5M202.5 269.8l-0.5 2.8M256.1 265.8l-0.6 1.9M152.8 232.2l0.5 1.5M147.8 229.3l0.3 1.9M218.3 202.7l-0.2 2.1M152.5 235.7l0.8 3.2M285.9 230.1l0.8 2.6M215.7 228.5l0.6 2.9M232.8 266.1l-0.6 1.8M165.5 237.0l-0.5 1.9M202.1 229.1l0.1 2.7M279.9 242.1l0.5 1.8M175.6 231.1l0.4 2.0M266.3 235.4l-0.1 2.7M173.0 242.8l-0.3 3.0M229.1 245.9l0.8 3.1M177.0 228.3l-0.3 2.3M191.8 226.4l0.1 1.6M290.1 238.0l-0.0 2.4M150.1 256.1l0.6 2.7M246.6 213.8l0.6 3.3M294.5 231.8l0.0 2.1M163.8 234.0l0.2 3.0M287.3 222.9l-0.7 1.9M185.3 218.2l-0.3 2.7M257.6 265.6l-0.3 2.1M257.6 263.7l0.4 3.0M242.6 262.0l0.3 3.1M263.4 227.0l-0.7 3.4M181.3 236.6l-0.1 2.9M179.1 205.5l-0.4 3.1M142.4 234.2l0.7 1.8M248.5 229.9l0.5 3.2M177.8 229.2l0.7 3.1M143.4 230.5l0.2 3.3M249.1 216.5l0.4 3.2M269.8 212.7l-0.6 2.9M197.1 225.8l0.0 1.5M218.7 222.2l-0.0 3.3M267.8 219.4l0.8 3.2M257.5 202.0l-0.1 3.3M159.7 240.3l0.2 1.8M273.8 219.5l-0.3 1.8M230.2 200.0l0.5 2.0M265.8 262.6l0.4 2.4M243.4 222.0l-0.6 2.6M273.8 237.4l0.6 1.5M257.1 252.3l0.5 3.0M278.7 258.4l0.4 2.1M228.5 228.7l-0.5 3.3M220.5 222.4l0.7 3.2M181.7 229.1l-0.1 3.0M156.4 226.5l0.3 2.2M241.8 197.7l0.3 2.3M193.3 215.2l-0.3 3.1M204.9 267.2l0.2 2.8M273.1 255.0l0.6 3.0M220.7 200.4l0.4 1.4M146.5 234.0l-0.1 2.3M228.9 246.0l0.4 1.5M196.0 256.9l0.7 3.3M250.4 198.4l-0.5 2.2M237.1 229.5l0.4 2.3M275.3 260.6l0.5 1.8M151.2 234.8l-0.3 2.5M276.9 221.2l0.3 3.2M277.2 254.6l-0.6 1.6M291.2 238.3l0.4 2.0M287.6 248.7l0.5 2.9M286.3 243.4l0.5 1.5M256.0 260.9l0.5 2.1M270.3 222.0l-0.4 2.8M262.5 226.7l0.2 2.1M182.7 231.5l-0.2 3.1M272.8 232.6l-0.2 3.1M164.1 235.3l0.9 3.0M211.4 200.6l-0.1 3.1M277.5 245.3l0.5 3.2M174.4 230.1l0.8 2.6M274.1 253.4l0.3 2.6M250.9 236.0l-0.0 2.2M192.5 232.6l0.5 2.0M196.1 221.7l-0.2 3.3M267.9 238.2l-0.0 2.0M167.9 232.8l0.4 2.7M197.7 223.1l-0.6 2.3M247.9 263.1l0.8 2.5M174.9 232.9l0.4 2.6M194.0 231.4l0.5 2.7M151.1 223.9l0.6 2.3M199.5 226.8l0.8 1.9M228.7 246.3l0.7 2.4M257.8 232.2l-0.6 3.3M174.7 237.4l0.2 1.5M274.4 235.2l0.8 3.3M238.0 249.8l-0.1 2.9M235.3 196.3l0.4 4.4M286.3 219.2l0.2 3.1M292.8 243.5l0.6 3.1M237.0 273.3l-0.5 2.4M213.7 272.9l-0.2 3.6M165.8 265.5l0.7 2.4"/>
<path stroke="#d88c98" d="M208.2 273.4l0.4 2.1M224.0 225.9l0.8 3.3M233.8 260.7l0.8 1.5M286.7 228.4l-0.2 3.0M155.9 238.0l-0.7 3.3M218.9 268.5l0.1 2.8M195.3 218.3l0.3 3.4M187.1 227.3l-0.5 2.5M202.9 226.7l0.6 2.0M208.8 267.3l-0.4 2.8M193.1 228.5l0.1 1.4M241.8 269.3l-0.0 1.5M264.8 228.7l-0.1 2.9M281.6 242.8l0.2 2.2M145.3 251.6l0.9 1.6M261.2 240.1l0.8 2.7M251.9 206.6l0.7 3.2M228.6 223.0l-0.3 3.0M272.2 234.3l-0.1 2.7M254.5 261.9l0.0 2.3M253.7 231.9l0.5 2.9M159.2 242.0l0.0 1.5M256.5 256.6l0.8 1.8M207.8 227.0l-0.3 2.6M220.1 200.0l-0.3 2.9M266.0 213.7l0.7 1.4M288.7 249.4l0.5 2.3M263.9 235.2l0.3 3.0M207.6 265.6l0.2 2.3M151.0 240.0l-0.2 2.8M262.2 250.9l0.1 1.5M216.8 225.8l0.2 2.8M257.1 258.4l0.7 2.1M164.8 239.4l-0.5 2.3M292.9 240.4l0.0 1.9M273.9 261.0l-0.2 1.4M256.1 234.0l-0.1 1.9M284.1 248.7l0.5 3.0M240.9 238.9l0.3 2.4M178.6 227.1l0.0 2.4M224.0 218.0l0.8 1.5M154.4 217.5l0.5 3.3M284.8 252.6l0.2 3.3M241.4 238.1l0.8 1.9M153.2 237.9l0.4 1.6M260.1 227.6l-0.6 2.4M225.1 271.1l0.6 2.7M236.7 203.4l0.7 2.2M237.3 269.7l0.8 2.7M233.3 201.2l-0.0 2.1M182.6 257.7l-0.7 3.0M186.4 233.7l-0.4 1.4M183.6 199.7l-0.6 1.5M156.0 259.0l-0.3 2.5M262.6 249.0l0.4 1.7M266.4 225.2l-0.3 2.1M278.7 239.9l-0.1 2.0M154.4 239.7l-0.5 1.5M181.7 232.7l0.6 3.1M248.7 202.9l0.6 2.0M149.9 239.9l0.8 1.6M220.4 228.8l-0.5 1.6M217.8 268.7l-0.5 3.1M155.5 235.9l0.1 2.5M174.5 232.7l0.2 1.7M276.7 256.8l0.7 2.2M187.3 228.6l-0.2 2.6M271.9 232.5l0.2 3.3M230.7 208.8l0.4 2.3M206.7 201.7l-0.1 1.7M202.2 202.3l-0.1 1.8M235.9 264.5l0.4 2.1M256.8 234.6l-0.4 3.4M203.1 271.9l-0.5 1.7M249.3 202.8l-0.3 2.1M273.7 244.3l0.9 2.3M259.3 213.5l0.5 2.1M189.9 221.8l0.8 2.9M179.0 231.1l0.3 3.1M275.3 256.9l0.9 2.7M250.6 237.1l-0.2 2.3M266.9 219.5l0.7 2.3M230.7 229.0l0.2 1.6M253.9 206.8l0.9 2.6M151.7 237.8l0.1 1.6M251.8 203.6l-0.5 3.3M276.1 239.3l0.8 1.9M261.4 254.7l0.2 1.8M285.4 247.3l0.5 2.4M257.3 265.8l0.4 2.4M271.4 242.9l-0.6 2.3M254.8 260.6l0.3 1.9M210.0 227.5l0.5 1.4M218.0 267.9l0.4 1.4M232.4 202.9l0.6 2.0M277.4 254.5l0.0 1.4M164.8 236.8l0.6 2.1M165.8 231.5l0.0 2.2M214.9 227.1l0.0 2.1M230.9 260.1l-0.7 2.4M171.1 235.6l-0.6 2.6M180.6 200.3l0.4 2.5M264.3 230.2l0.3 2.0M238.0 196.9l0.6 3.2M199.8 271.6l-0.0 2.0M148.7 230.2l0.8 1.8M220.8 268.4l0.2 2.6M284.6 244.9l-0.3 2.3M193.3 213.7l-0.3 3.3M225.5 224.3l-0.0 3.3M153.0 233.0l-0.3 2.6M181.8 225.8l0.0 3.3M195.2 223.7l-0.2 2.8M158.5 216.1l-0.5 1.9M271.7 225.4l0.6 3.2M163.6 242.3l-0.5 1.6M202.2 233.5l-0.4 2.5M274.7 254.1l0.8 2.0M155.4 247.2l0.8 1.9M233.7 269.1l0.3 1.6M266.8 209.8l-0.7 1.8M256.8 237.2l-0.3 1.5M264.2 255.8l0.7 2.3M260.3 231.6l-0.5 2.0M249.7 235.0l0.3 2.7M176.0 201.0l-0.7 3.3M155.2 260.3l-0.4 2.4M168.3 238.7l0.6 3.3M216.2 270.2l-0.5 2.2M280.0 247.9l-0.6 2.0M164.0 234.8l-0.1 3.1M264.0 216.8l0.3 1.5M259.4 210.1l0.2 1.7M272.4 226.2l0.3 1.5M197.5 199.8l-0.1 3.2M273.6 213.7l0.1 2.9M227.5 269.1l-0.5 2.0M242.3 259.1l0.1 2.0M254.7 200.4l-0.3 3.4M201.8 269.2l-0.4 2.4M181.4 233.2l0.2 2.6M276.3 245.8l0.5 2.9M251.7 233.7l0.8 3.3M258.0 217.8l0.8 2.8M289.8 242.6l0.2 1.7M250.8 195.0l0.4 1.4M198.0 210.7l-0.1 2.1M149.2 234.1l0.5 2.5M262.2 203.3l-0.3 2.7M255.6 207.2l-0.7 1.5M253.8 204.2l-0.6 1.7M256.3 232.5l-0.5 2.5M204.9 218.3l0.3 2.0M290.5 241.0l-0.3 3.0M167.3 238.2l-0.5 1.7M160.3 214.9l-0.6 2.4M268.3 236.7l-0.2 1.4M162.3 239.8l-0.4 1.5M224.6 269.9l0.6 1.9M240.4 224.7l0.1 2.2M232.0 228.2l0.6 2.8M249.5 210.3l-0.5 2.5M214.4 197.8l-0.4 2.4M196.0 224.0l0.0 2.0M219.4 222.4l0.4 3.2M181.1 235.1l0.4 2.7M196.8 232.0l0.2 1.7M191.3 224.3l-0.3 2.9M159.4 233.7l0.1 2.3M182.9 227.6l-0.2 2.1M189.8 266.2l0.6 1.8M162.5 235.2l0.3 1.7M231.4 266.4l0.2 1.9M275.1 242.7l-0.4 1.4M143.0 237.7l0.6 2.0M181.8 226.7l0.0 1.8M216.2 199.3l0.8 2.5M227.8 225.7l-0.3 1.5M203.9 229.8l0.3 2.7M143.8 234.6l-0.7 1.8M258.4 226.9l-0.6 1.7M272.7 217.8l0.9 2.2M151.0 257.0l-0.7 1.7M254.8 218.6l-0.0 2.6M211.1 228.8l-0.5 3.4M172.1 221.6l-0.4 3.3M252.2 237.1l-0.0 1.6M246.9 236.1l0.1 2.9M145.1 234.4l0.8 2.0M148.2 243.1l-0.4 3.2M255.1 261.4l-0.4 1.5M233.9 215.6l-0.3 1.5M251.6 200.0l-0.4 2.4M169.5 231.9l0.6 1.6M197.3 267.3l-0.5 2.2M272.0 225.5l0.3 3.1M142.8 230.5l-0.7 2.6M145.2 243.0l0.8 2.4M157.2 231.4l0.6 3.3M182.1 229.0l-0.4 3.2M261.0 219.6l0.4 2.8M284.6 224.3l-0.1 2.7M202.5 226.3l-0.3 3.4M186.7 198.5l-0.5 2.6M241.2 271.0l-0.4 2.0M283.8 255.0l0.4 2.5M220.9 228.1l0.0 1.4M229.3 260.3l0.4 3.1M286.2 236.3l0.4 2.3M191.3 235.0l0.3 2.1M248.4 209.5l0.7 2.1M247.3 265.3l-0.6 1.8M192.7 229.7l0.2 2.3M262.4 219.3l0.6 1.4M282.1 234.7l-0.3 2.9M267.8 221.6l0.2 2.1M192.0 223.9l0.5 1.5M150.0 239.7l0.7 2.2M198.9 225.0l-0.1 1.6M154.3 240.4l0.0 2.9M208.6 224.6l-0.0 1.6M285.0 251.3l0.5 1.6M144.3 241.4l0.5 1.6M265.7 239.9l-0.6 2.7M251.4 254.3l0.2 1.6M249.8 209.9l-0.1 1.5M163.4 215.6l0.6 1.7M274.4 243.5l0.1 1.4M277.6 238.4l0.1 2.8M264.7 217.2l0.6 1.5M272.1 213.0l0.5 3.0M141.2 227.1l-0.4 3.9M145.5 223.4l0.2 3.7M168.4 203.5l0.5 3.1M192.4 197.2l-0.4 4.3M210.6 195.4l-0.2 4.2M217.0 196.7l-0.2 2.6M241.6 195.8l0.1 2.7M249.0 194.6l0.1 3.1M270.1 209.1l0.4 3.1M286.6 219.4l0.3 3.6M294.7 232.2l-0.2 3.2M292.4 244.9l-0.4 3.0M257.9 268.1l-0.4 2.4M242.0 271.6l0.5 3.4M229.2 272.8l0.3 3.2M201.7 272.0l0.4 4.2M143.2 251.3l-0.0 4.0M141.0 240.0l0.0 3.5"/>
<path stroke="#df9ba4" d="M227.6 230.0l0.5 1.8M257.0 254.5l0.8 3.0M171.5 237.6l0.5 2.0M269.0 221.8l0.9 2.7M244.1 209.6l0.1 1.4M287.7 227.6l0.3 2.4M245.2 270.8l0.6 2.2M191.6 227.5l0.2 1.7M215.4 226.1l-0.1 3.0M250.4 231.9l-0.5 1.7M247.4 229.9l-0.1 3.3M187.5 265.8l0.3 3.0M177.2 232.5l-0.2 3.0M220.3 223.4l0.1 1.4M219.1 226.1l0.7 2.2M270.5 256.5l-0.6 2.9M248.4 200.4l0.8 3.0M278.8 242.5l0.6 1.7M246.8 231.0l0.2 2.5M272.8 246.5l0.2 3.4M216.5 227.1l0.8 2.1M161.4 212.5l0.2 3.1M208.1 271.4l0.2 1.6M234.2 227.8l-0.0 2.8M164.6 235.6l-0.1 1.6M253.3 202.1l0.9 2.4M263.9 229.7l-0.6 3.3M266.8 216.9l-0.0 2.1M218.1 248.0l0.3 2.8M229.9 237.7l-0.2 3.0M243.7 222.6l-0.6 3.4M238.1 201.2l-0.5 1.8M179.9 228.7l0.8 2.6M243.5 258.1l0.9 3.2M256.4 255.9l0.8 3.2M281.6 256.2l-0.5 1.4M292.4 248.2l-0.1 3.0M169.7 235.6l0.9 3.4M222.0 271.7l0.3 2.2M206.3 266.9l0.8 3.3M155.7 238.5l0.2 1.9M203.2 229.3l-0.3 2.4M278.1 237.1l-0.4 2.3M264.8 207.3l0.2 1.5M195.8 231.2l-0.4 3.1M150.5 229.6l0.0 1.5M164.8 252.3l-0.3 3.0M271.4 254.4l0.2 2.2M279.9 230.8l-0.1 3.2M219.4 224.1l-0.2 3.0M166.4 230.6l-0.3 1.7M140.5 232.3l0.6 3.3M228.9 258.9l0.0 2.0M150.1 241.7l0.5 2.2M183.5 226.0l-0.6 3.2M272.1 250.5l0.8 1.7M214.0 262.2l-0.4 3.2M265.0 211.5l0.9 2.8M203.6 222.7l0.1 2.4M245.2 199.3l-0.5 1.5M252.4 235.8l-0.5 3.4M171.4 232.5l0.1 2.7M249.8 210.3l-0.5 1.8M218.4 269.7l0.5 3.2M217.0 223.7l0.8 2.6M190.8 232.6l-0.0 2.1M280.8 259.6l-0.2 1.8M246.2 224.3l0.4 2.1M251.6 204.0l0.6 1.5M145.6 251.2l0.0 2.7M149.8 237.8l-0.7 1.6M148.2 229.3l-0.5 1.6M184.0 199.5l0.7 2.1M231.0 223.0l-0.5 2.9M227.1 230.4l-0.7 1.8M143.5 238.1l0.0 2.8M203.8 203.3l-0.5 2.9M262.0 204.2l-0.5 3.1M214.8 272.1l0.6 2.3M187.5 232.1l-0.4 2.2M145.7 227.0l-0.6 2.2M271.2 237.7l-0.3 1.5M289.1 250.3l0.3 1.7M279.4 218.1l0.8 3.2M159.1 239.7l0.2 1.6M162.1 235.1l-0.2 2.5M275.3 238.4l0.4 1.6M250.3 199.8l-0.3 3.3M227.4 266.0l-0.0 2.5M220.6 229.0l0.4 2.2M260.0 257.6l0.1 3.0M211.2 229.4l0.8 3.2M269.4 215.4l0.0 1.5M215.0 268.9l0.8 2.3M256.9 218.2l0.7 1.7M220.5 224.2l-0.0 3.2M246.9 228.5l0.5 1.5M221.7 198.7l0.8 3.0M167.5 234.3l-0.1 1.8M266.4 219.4l0.8 2.6M259.6 233.4l0.0 2.6M260.2 205.9l0.5 2.7M256.0 236.4l0.6 2.3M194.7 221.4l-0.4 1.7M273.7 259.2l0.6 2.4M255.7 203.8l0.4 2.9M206.7 222.1l0.2 2.4M194.2 235.4l-0.0 2.8M277.3 223.8l0.6 2.3M262.1 233.3l0.3 3.0M245.3 229.1l0.9 2.4M282.0 223.9l0.4 1.4M281.6 219.0l0.8 2.0M149.2 232.1l-0.5 1.7M174.1 202.4l0.6 1.6M183.9 231.9l0.8 1.5M150.9 234.4l-0.2 2.4M153.8 234.9l-0.1 3.2M288.8 228.6l-0.6 2.7M231.6 220.5l-0.4 1.9M218.7 211.0l0.5 3.3M256.6 201.7l0.7 1.9M162.8 232.7l-0.5 2.2M215.8 203.6l-0.6 1.6M187.7 230.5l0.1 1.5M185.3 231.6l-0.2 2.0M142.6 233.4l-0.3 2.2M220.2 212.0l0.5 2.0M276.3 214.0l0.8 2.5M194.3 228.2l0.4 2.5M152.8 238.2l-0.1 2.9M150.2 229.0l-0.6 1.8M195.3 230.0l-0.6 2.7M235.8 241.9l0.5 1.8M274.9 247.3l0.7 1.7M151.1 233.1l0.2 1.5M228.6 247.3l0.5 1.5M170.5 235.3l0.9 2.0M203.2 197.9l0.4 2.0M145.1 228.9l0.7 2.7M201.1 271.7l-0.2 2.4M157.5 228.3l-0.2 2.4M213.5 223.2l0.3 2.3M162.8 241.1l-0.0 2.5M277.1 236.7l0.3 1.4M229.4 271.0l0.7 3.2M232.9 216.8l-0.3 1.8M235.3 267.0l-0.1 2.3M208.9 233.0l-0.3 2.4M213.0 272.2l0.1 2.2M278.3 251.3l0.5 1.6M194.0 230.7l0.1 2.4M247.7 236.3l0.9 1.8M142.8 230.6l0.6 2.0M219.2 223.7l0.6 2.8M271.6 240.5l0.1 3.2M281.5 227.0l0.4 1.8M223.3 230.1l-0.2 3.2M233.3 259.4l0.6 2.5M225.4 267.7l-0.1 1.9M260.2 254.4l0.7 2.3M281.8 231.7l0.3 3.2M266.5 208.9l-0.1 1.9M283.7 245.0l-0.2 1.4M203.6 231.9l0.0 3.2M222.3 198.4l0.7 1.5M266.1 208.4l0.4 3.3M181.6 257.0l0.4 1.9M275.2 243.2l-0.2 1.9M191.1 199.6l0.5 1.5M253.9 197.5l0.2 2.2M147.0 236.1l-0.3 2.7M247.1 229.1l-0.3 3.0M271.5 222.7l0.0 1.7M254.1 235.4l-0.5 3.1M212.6 226.9l0.0 3.4M236.7 200.7l0.7 1.9M189.1 233.5l0.7 2.2M261.4 251.0l-0.1 2.0M247.9 196.0l-0.6 2.8M281.5 235.0l0.7 1.7M222.6 227.9l-0.5 2.2M214.9 222.1l0.4 3.1M268.6 238.4l-0.5 3.4M210.3 201.2l0.8 2.2M234.6 197.3l0.2 2.2M190.1 222.1l-0.4 2.1M244.8 200.3l0.4 3.0M235.6 256.2l0.0 3.0M250.2 206.1l0.5 1.7M278.2 258.4l-0.3 2.2M149.6 237.5l-0.3 2.6M200.7 270.4l-0.3 2.7M276.3 224.1l-0.2 2.0M248.0 268.9l-0.1 2.2M201.9 228.3l0.1 2.5M273.4 233.7l-0.1 2.6M175.2 236.9l-0.1 2.4M180.8 214.6l-0.2 3.2M234.6 271.6l-0.5 2.4M151.1 256.8l-0.2 2.2M285.5 236.0l0.6 1.9M270.3 251.6l0.7 2.2M218.2 230.6l-0.5 2.1M249.1 230.5l-0.3 3.1M213.8 267.8l-0.6 2.9M265.5 228.1l0.3 2.8M202.5 234.3l-0.2 2.6M258.4 219.8l0.5 3.4M187.3 233.2l0.0 2.9M290.9 243.5l0.4 1.8M228.0 238.7l-0.2 1.6M236.6 251.1l0.1 2.5M288.5 224.2l-0.7 2.9M188.0 232.9l0.6 2.8M206.7 226.0l-0.4 2.7M284.5 233.9l-0.5 2.7M236.6 269.0l-0.2 2.8M238.1 216.3l0.2 2.1M193.2 223.1l0.7 2.7M246.9 234.1l0.2 3.1M285.7 244.5l0.8 2.5M255.3 259.7l0.8 1.5M226.0 228.4l-0.3 2.6M218.5 259.9l0.3 2.8M186.0 234.7l0.2 3.1M260.2 225.3l-0.4 3.3M147.7 243.7l0.6 3.0M178.4 228.0l0.6 2.0M291.4 235.7l-0.6 3.3M280.3 243.8l-0.6 2.4M274.1 245.4l-0.2 1.7M184.3 228.7l0.0 2.1M248.1 229.6l0.4 1.7M229.6 220.6l0.3 3.1M257.9 255.9l-0.0 2.7M272.5 252.6l0.4 3.2M266.8 215.7l-0.1 1.8M157.2 214.2l0.4 4.2M197.1 196.4l-0.0 4.3M223.4 196.0l-0.2 3.4M237.2 195.0l-0.4 3.1M255.8 197.5l-0.5 2.7M266.2 205.6l0.7 3.4M282.2 216.4l0.3 3.0M292.5 247.4l-0.3 2.7M291.6 250.9l-0.4 3.1M275.2 260.9l-0.1 3.2M259.5 266.9l0.6 3.0M240.7 272.9l0.5 2.7M225.0 274.3l0.1 2.7M206.9 273.5l-0.1 3.3M152.0 257.4l0.4 3.8"/>
<path stroke="#e8aeb3" d="M275.1 240.9l-0.1 2.0M194.5 231.6l0.9 1.6M257.1 216.2l0.9 2.9M190.3 213.1l0.1 2.4M276.2 261.2l0.9 1.6M203.0 232.2l0.3 2.3M279.1 258.9l-0.5 1.5M262.0 231.7l-0.2 3.4M291.5 231.9l0.5 1.8M280.7 220.2l0.3 1.5M146.5 241.5l-0.4 2.8M232.8 226.3l0.6 3.2M253.2 232.0l-0.6 2.9M257.5 264.2l0.8 2.5M205.6 226.7l-0.0 1.8M275.8 243.0l0.1 2.3M285.6 245.4l0.2 1.8M167.3 205.8l-0.5 3.0M280.7 224.5l0.6 1.7M215.2 226.4l0.7 2.9M281.9 235.2l-0.2 1.6M275.1 235.9l0.8 2.6M187.4 263.6l0.8 2.6M164.4 229.5l0.4 3.1M278.2 248.1l0.3 3.0M246.6 207.8l-0.2 2.7M279.9 227.3l-0.3 1.5M220.8 215.4l0.3 1.7M162.8 263.8l0.4 1.5M259.4 237.0l0.1 1.9M182.7 233.8l-0.7 1.9M251.8 196.2l-0.4 2.2M183.6 232.6l-0.7 1.8M263.5 234.2l0.5 2.6M255.6 233.7l0.7 3.2M191.1 234.3l-0.5 2.1M152.6 233.6l-0.3 2.6M186.8 235.8l-0.3 2.1M275.2 243.6l-0.6 1.5M226.2 230.3l-0.2 2.4M261.6 208.0l-0.4 1.8M280.1 254.7l-0.1 3.1M247.3 234.3l0.6 2.5M217.1 198.4l0.6 2.3M228.4 246.1l0.8 2.2M272.1 234.1l-0.3 2.9M249.4 236.7l0.8 2.4M184.7 225.1l0.2 3.3M197.4 223.4l-0.7 2.6M243.9 265.0l0.8 2.9M237.0 218.2l0.2 2.3M284.9 253.9l-0.6 1.8M211.8 267.5l-0.4 1.8M192.7 233.1l-0.5 2.9M255.3 257.6l0.8 2.7M209.4 268.1l-0.3 2.2M270.8 253.6l-0.4 2.1M273.1 239.7l0.8 2.5M282.8 235.6l-0.4 3.0M150.4 242.2l-0.1 2.9M249.4 268.3l0.6 2.4M182.1 228.7l-0.6 2.8M269.9 225.8l0.6 3.2M203.6 202.6l0.0 3.0M210.2 224.4l0.4 2.6M289.4 242.6l0.3 3.0M166.1 207.2l0.7 2.9M179.1 230.3l0.6 2.9M205.4 226.7l0.2 3.2M167.2 233.5l-0.6 2.7M212.8 198.7l0.3 2.1M262.8 222.1l-0.1 1.6M193.1 225.9l-0.3 1.6M258.6 214.9l-0.4 1.7M280.5 246.8l-0.3 2.1M222.6 267.2l0.6 1.8M152.6 232.9l0.1 3.0M278.3 239.9l-0.5 1.8M259.2 232.2l-0.6 3.2M273.7 247.7l-0.7 3.1M143.8 246.1l0.3 2.5M273.0 257.6l0.6 2.0M164.7 233.7l-0.3 2.5M217.2 227.7l0.3 1.7M280.7 247.8l-0.5 3.0M279.9 225.7l-0.7 2.0M182.7 199.1l-0.7 2.7M157.2 233.1l0.3 2.0M148.7 237.7l0.6 2.2M150.8 221.7l0.8 3.3M210.9 223.7l-0.3 2.9M256.9 215.7l-0.4 2.3M281.4 230.4l0.5 2.0M212.8 197.4l0.1 3.1M214.5 202.1l0.8 3.3M171.9 242.4l0.8 3.0M204.2 273.4l-0.5 2.2M253.6 218.0l0.6 3.4M193.9 225.0l0.6 2.5M188.8 229.9l0.4 1.9M142.3 230.2l0.8 1.9M277.1 223.1l0.1 1.8M271.6 249.9l-0.2 2.2M149.6 238.4l0.7 2.5M258.5 200.5l-0.7 2.5M245.6 223.2l-0.4 1.8M277.5 249.6l0.9 3.1M251.0 209.9l0.1 3.0M276.0 239.2l0.8 3.2M279.0 241.4l-0.4 3.2M277.9 255.2l0.5 1.4M164.0 231.7l0.3 1.7M245.9 270.2l-0.5 2.2M258.7 258.0l0.2 2.6M155.8 215.9l0.1 4.0M236.6 195.5l-0.0 4.1M266.0 205.2l0.3 4.1M295.3 234.3l0.4 3.1M251.7 270.0l-0.2 2.9M209.6 272.4l0.4 3.9M141.5 239.6l0.7 4.1"/>
<path stroke="#a02a56" d="M252.3 241.9l0.6 2.0M201.5 264.2l0.1 2.5M250.4 260.7l-0.1 2.9M160.6 259.9l0.7 2.2M225.2 240.9l0.3 3.3M175.2 241.7l-0.4 3.1M222.4 209.4l-0.1 2.0M157.6 235.7l-0.1 2.0M202.0 245.4l0.8 3.1M180.2 214.0l0.1 2.0M275.0 231.7l0.8 1.8M165.4 253.6l0.9 2.9M159.9 241.5l-0.1 2.4M215.0 220.3l-0.6 3.4M260.5 249.1l0.5 2.3M203.3 239.4l0.2 2.2M280.8 221.2l0.1 2.3M237.2 220.7l-0.6 2.1M271.2 234.5l-0.7 2.3M270.7 257.9l0.0 3.1M219.4 203.6l0.3 1.6M195.8 217.8l-0.7 2.6M199.7 267.2l-0.0 1.6M194.8 211.8l-0.5 2.7M238.4 205.1l-0.7 2.3M206.9 265.3l0.6 2.7M178.6 203.2l0.4 3.1M264.9 251.1l-0.4 2.9M245.6 222.0l0.1 3.3M249.3 242.4l0.2 1.8M243.8 227.7l-0.2 3.0M188.5 205.8l-0.7 2.9M162.6 226.6l-0.6 2.5M183.7 212.7l-0.0 2.4M171.2 205.4l0.4 3.0M223.8 250.3l0.9 3.2M188.6 215.9l-0.5 1.6M179.4 251.1l0.7 2.7M163.2 259.6l-0.1 3.0M237.9 245.7l-0.7 3.2M246.2 250.2l-0.2 1.7M268.5 227.5l0.5 2.5M175.2 242.7l-0.3 2.7M176.5 258.5l-0.7 2.0M189.7 251.4l-0.4 1.6M193.3 249.1l0.9 1.5M187.3 218.3l0.6 3.4M223.0 254.4l0.7 1.8M173.9 223.9l-0.5 1.8M213.0 269.0l0.2 1.6M187.1 238.4l-0.4 2.9M203.8 244.6l-0.6 2.3M227.0 253.2l-0.2 1.4M183.8 247.2l-0.7 3.1M214.0 254.6l0.4 2.6M256.6 251.9l0.2 1.5M163.0 218.8l0.2 2.1M251.0 246.4l0.4 3.2M166.7 223.3l0.3 3.4M207.9 247.8l0.3 1.9M162.2 229.3l-0.1 3.3M196.9 241.9l0.7 1.7M200.3 218.9l-0.1 2.0M232.8 256.2l-0.4 3.4M162.6 257.6l0.3 3.1M172.5 208.0l-0.6 2.1M167.8 245.7l-0.1 3.1M152.7 246.4l-0.1 3.4M213.7 255.5l0.1 2.2M164.0 262.9l0.2 3.0M239.0 225.2l-0.0 3.3M240.9 260.6l0.7 3.2M275.6 217.7l-0.3 2.5M152.9 229.0l0.2 1.9M231.3 221.2l0.1 2.7M183.7 268.4l-0.5 2.0M200.9 202.2l0.6 3.0M204.2 245.9l0.5 2.8M256.5 253.1l-0.3 1.7M181.1 264.9l-0.6 1.7M177.9 212.6l-0.2 2.8M208.5 260.6l-0.5 1.7M250.4 258.8l0.2 1.7M212.0 262.5l-0.5 2.3M191.3 265.4l0.0 2.3M203.1 262.0l-0.4 1.7M238.7 223.5l-0.3 1.7M222.5 224.5l0.3 1.8M268.4 245.0l0.7 1.6M206.7 217.4l0.2 2.9M194.8 239.0l-0.2 1.4M169.5 264.2l-0.2 1.9M182.6 214.2l-0.3 2.0M187.4 242.6l0.5 1.7M241.5 222.6l0.9 1.9M228.1 203.2l-0.1 2.8M196.2 210.8l-0.2 1.9M197.1 268.1l0.6 1.9M170.7 218.3l0.9 3.0M212.8 199.8l0.3 3.0M187.4 247.0l0.0 1.9M235.5 259.6l-0.1 3.1M161.9 216.8l-0.1 1.7M182.8 260.3l0.7 2.8M166.9 215.2l0.5 1.5M170.9 263.9l-0.2 1.7M200.6 210.6l0.4 2.2M231.3 270.1l-0.5 1.9M161.5 218.2l-0.2 2.9M206.3 221.4l0.6 2.7M186.6 206.4l0.3 2.9M234.9 248.8l0.5 1.8M203.1 244.3l-0.0 2.6M162.7 245.2l-0.6 3.4M270.8 220.6l-0.5 2.9M174.9 255.9l0.4 1.8M235.4 196.8l0.1 2.9M228.0 222.5l-0.5 2.9M231.0 241.6l0.5 2.4M171.6 218.5l0.1 1.4M256.3 214.0l-0.6 1.9M277.4 254.1l0.2 2.1M222.2 248.0l-0.6 1.8M173.0 233.5l0.1 3.4M175.8 222.3l0.8 1.7M269.0 218.2l-0.4 2.3M189.8 212.1l0.8 2.9M239.8 211.5l-0.5 2.4M218.4 259.5l-0.3 2.3M160.6 224.7l-0.4 3.3M260.5 230.7l-0.7 2.6M254.9 223.2l0.2 2.4M164.0 210.3l0.2 1.9M238.5 243.7l0.4 2.2M196.0 251.5l-0.7 2.7M174.3 206.2l-0.1 1.5M197.4 205.5l0.3 1.7M210.3 212.9l-0.5 1.9M192.9 211.7l-0.2 1.6M158.2 260.4l0.6 3.4M184.4 247.0l-0.0 2.8M163.5 260.0l-0.3 2.0M207.4 209.4l0.4 2.7M195.9 248.4l-0.4 2.1M232.6 211.1l0.9 1.4M163.5 263.3l-0.5 2.1M239.9 202.6l-0.4 2.6M268.3 262.2l-0.4 3.0M179.3 212.4l0.7 1.7M166.4 261.7l0.2 1.5M201.6 251.9l0.6 1.6M193.9 219.9l0.7 2.7M217.5 215.8l-0.5 2.8M203.1 245.3l-0.4 2.6M166.2 261.8l0.5 2.7M186.1 246.1l0.9 1.7M191.1 237.3l-0.6 2.1M205.6 250.0l-0.1 2.1M249.4 223.9l0.8 1.5M263.6 224.9l0.5 1.6M228.7 200.2l0.1 3.1M261.0 215.8l0.2 2.4M159.6 225.2l-0.4 2.4M185.3 221.8l0.2 2.8M184.9 223.5l-0.1 3.3M190.7 238.7l0.0 2.2M165.4 223.9l-0.6 3.2M189.3 252.0l0.0 3.3M163.8 212.5l0.1 2.2M199.4 266.2l0.8 2.3M261.9 214.3l-0.2 3.3M164.9 209.0l-0.4 2.4M183.5 219.9l0.0 2.4M178.2 259.5l0.8 3.3M202.2 219.7l-0.4 1.6M263.7 247.8l0.7 1.7M259.0 231.4l-0.0 1.5M189.0 248.4l0.3 2.7M148.2 250.6l0.1 3.1M230.7 238.4l-0.0 3.0M193.9 214.8l0.7 2.4M270.0 242.9l0.3 3.4M268.8 249.3l-0.3 2.4M219.1 257.1l0.2 3.3M155.5 247.7l-0.2 1.8M213.6 248.5l-0.3 2.9M207.6 215.2l-0.4 3.3M231.7 243.1l-0.5 2.4M194.6 241.5l0.3 2.8M273.9 230.6l0.6 3.0M258.2 209.1l0.2 2.2M277.7 246.8l0.3 1.9M219.9 198.6l0.9 2.7M224.2 254.3l0.8 3.0M226.8 252.9l0.7 2.2M190.3 246.6l0.3 2.4M190.1 222.0l0.1 1.4M250.4 227.8l0.2 2.2M191.1 229.8l0.5 2.4M217.3 259.7l0.2 1.8M168.8 243.8l-0.4 3.3M219.6 207.5l-0.1 2.2M231.6 220.6l0.2 1.5M247.2 220.0l-0.1 3.2M241.8 256.2l0.7 2.7M212.2 253.4l-0.0 1.4M233.8 261.1l0.5 2.8M199.4 241.0l0.0 2.3M151.9 250.9l-0.2 2.2M190.5 271.2l-0.1 3.8"/>
<path stroke="#b43664" d="M174.3 255.1l0.6 1.9M223.8 263.5l0.8 2.0M175.0 257.2l-0.5 1.9M149.2 252.0l0.3 2.5M148.8 248.3l0.5 1.7M174.2 256.0l-0.3 2.6M253.6 245.5l-0.4 1.7M246.3 199.5l0.3 3.3M207.8 261.3l0.6 3.0M200.0 268.5l0.6 2.2M262.4 256.3l-0.7 3.2M200.0 221.9l-0.1 1.5M238.8 212.9l0.1 1.9M193.9 212.8l-0.2 3.2M176.5 264.9l0.2 2.3M246.8 209.9l-0.5 2.2M176.8 212.0l-0.0 3.0M250.5 208.9l0.5 1.9M222.5 203.9l-0.1 2.5M186.3 259.9l0.1 3.2M199.0 220.9l-0.4 1.4M238.3 226.3l0.5 2.0M171.6 246.9l0.8 1.7M186.8 244.0l-0.5 1.9M239.2 223.1l0.1 2.8M197.1 254.7l-0.6 3.2M227.8 219.6l-0.7 1.4M235.5 252.1l0.6 3.4M250.9 257.1l-0.5 2.3M212.0 210.8l-0.5 2.8M173.6 256.5l-0.6 3.0M155.4 229.7l0.4 1.9M200.8 212.5l-0.5 2.8M238.4 243.0l-0.1 2.0M241.6 244.5l0.1 2.6M288.4 233.4l0.1 1.8M221.9 220.8l0.5 2.2M192.3 268.9l0.8 1.9M216.4 214.6l0.1 3.0M241.7 251.4l0.8 1.9M235.2 239.4l0.2 1.5M186.3 244.5l0.3 2.6M163.5 227.3l0.4 1.6M248.7 266.0l0.1 1.6M169.6 217.4l0.7 1.7M177.1 259.7l0.8 1.6M172.6 254.2l-0.7 3.1M206.3 252.2l-0.4 2.9M195.3 237.6l-0.2 2.2M261.2 250.5l-0.4 2.0M187.7 212.4l-0.2 2.5M223.0 261.9l0.1 2.6M235.3 258.7l-0.1 2.9M238.7 208.3l0.1 1.5M263.9 261.0l-0.4 3.3M266.6 223.1l0.4 2.5M169.5 252.8l0.8 2.1M180.5 207.9l0.2 3.4M154.5 251.1l-0.7 2.8M201.2 240.3l0.5 2.7M173.1 258.0l-0.3 3.3M242.8 208.6l-0.2 2.3M183.6 202.3l-0.7 2.4M215.5 261.0l0.6 3.4M265.7 229.6l0.4 2.4M245.7 254.7l0.3 1.5M174.9 209.3l-0.1 1.5M169.8 211.9l0.2 2.4M159.8 249.1l-0.0 3.0M218.2 252.0l-0.1 1.6M261.6 261.0l-0.0 3.1M245.6 227.5l0.7 1.6M175.5 252.3l0.6 3.0M175.0 205.1l0.2 2.9M185.7 219.5l-0.6 3.3M202.2 216.7l0.1 2.8M235.9 243.1l0.0 2.7M246.5 228.5l0.4 1.8M194.5 270.6l-0.3 2.6M163.2 262.1l-0.7 2.5M205.5 246.7l-0.6 2.5M240.3 244.3l-0.2 2.9M221.2 206.7l0.6 2.6M255.6 224.9l0.8 2.1M273.7 227.9l0.7 1.6M196.4 263.3l0.6 3.2M212.8 200.9l-0.6 2.0M246.1 250.5l-0.1 1.9M230.4 256.2l-0.3 2.6M244.5 244.6l-0.5 3.1M193.7 239.6l0.5 2.7M160.7 261.7l0.9 1.6M185.8 209.0l-0.4 2.2M236.7 213.7l-0.2 2.5M213.3 215.3l0.6 2.8M239.8 203.6l-0.4 2.1M247.5 245.3l-0.0 1.5M200.1 238.7l-0.7 3.2M232.8 226.5l0.6 2.5M158.6 225.1l0.7 2.7M263.2 245.8l-0.0 3.0M245.8 208.4l0.8 1.8M165.9 218.8l0.6 2.1M235.7 215.0l-0.4 1.7M256.3 206.1l0.3 3.3M229.6 250.4l0.4 1.8M169.8 212.8l0.3 1.6M239.5 245.8l-0.3 2.8M212.1 247.8l-0.4 2.9M275.3 228.6l0.1 2.0M238.4 220.4l-0.6 2.2M186.7 255.3l0.0 1.6M186.3 211.6l-0.2 2.3M159.4 245.8l0.8 2.2M255.5 220.3l0.3 3.4M230.5 246.5l0.3 3.2M202.6 237.9l0.6 3.2M233.7 226.2l-0.1 1.4M201.6 205.9l-0.2 1.5M205.7 212.9l0.3 2.0M175.2 205.9l0.7 2.6M166.5 225.6l0.9 1.9M273.2 245.2l0.5 2.9M241.0 205.2l-0.1 2.6M252.3 242.6l-0.6 3.3M195.9 264.2l0.5 3.3M276.4 226.9l0.1 2.0M168.9 246.4l-0.5 2.1M228.7 240.2l0.1 2.8M179.0 246.3l0.7 2.5M246.0 215.0l-0.7 1.5M269.0 229.9l0.7 2.1M217.7 209.0l-0.4 2.6M170.6 250.1l-0.5 3.3M206.4 254.5l0.1 1.7M144.0 244.0l-0.7 2.6M181.4 256.2l0.3 2.8M177.6 225.2l-0.1 2.6M191.8 201.7l-0.3 2.6M162.3 219.1l-0.7 1.6M163.5 240.5l0.1 3.1M196.9 264.7l0.7 1.9M235.5 262.3l-0.2 1.8M219.2 206.3l-0.5 2.4M199.9 262.2l-0.3 3.0M260.5 261.3l-0.4 2.3M188.7 203.8l0.3 2.1M176.2 240.6l-0.2 3.1M201.3 240.5l-0.5 3.3M203.8 211.8l0.3 1.5M171.7 261.8l0.5 2.2M194.0 217.5l-0.3 1.8M269.2 242.9l-0.4 3.4M172.6 252.2l0.3 3.0M214.5 255.6l0.1 2.2M168.6 225.3l-0.3 2.4M158.9 227.8l-0.5 3.1M257.6 263.3l0.3 2.1M184.9 262.8l0.3 2.8M241.1 256.0l-0.6 2.3M237.8 218.1l0.4 1.6M181.3 228.3l-0.3 2.4M266.9 225.5l0.1 1.9M184.8 240.6l0.5 1.9M170.8 219.3l0.3 2.8M211.6 266.7l-0.7 3.4M237.5 253.8l0.0 2.4M218.3 263.2l-0.6 2.8M274.2 226.3l0.5 1.5M232.3 251.9l0.1 3.0M184.2 203.7l-0.3 3.3M180.1 222.0l-0.3 2.3M241.7 222.2l-0.6 1.8M265.9 247.4l0.9 3.0M153.7 244.3l0.3 3.4M175.5 264.9l0.3 1.4M234.8 256.6l-0.3 1.8M232.7 225.1l-0.3 1.4M218.9 219.8l0.5 2.1M180.9 252.8l0.7 2.6M224.7 208.4l0.4 2.4M245.9 209.5l0.8 2.1M189.4 229.5l-0.6 2.5M227.3 217.6l0.1 2.6M267.5 246.8l0.3 2.6M197.8 236.9l0.3 2.8M218.6 251.9l-0.6 2.8M220.2 205.5l0.6 2.9M208.3 204.3l-0.5 1.6M197.6 209.1l0.5 2.9M188.6 204.0l-0.7 1.8M163.7 216.1l0.1 2.4M238.7 225.8l0.0 1.8M146.6 248.2l0.4 1.5M259.5 257.4l-0.7 2.4M241.1 229.5l-0.3 2.4M216.6 208.6l-0.2 2.5M227.3 261.0l0.1 2.4M180.9 230.0l-0.2 2.6M164.6 245.3l0.7 2.2M277.6 225.6l-0.4 3.4M223.0 257.3l0.9 2.1M178.0 206.3l-0.2 1.9M274.9 214.9l-0.2 3.2M218.5 205.7l0.5 2.7M188.6 252.9l0.0 1.6M216.0 249.5l0.3 3.3M237.8 250.8l-0.1 2.6M191.3 251.2l0.4 1.5M258.3 224.8l-0.1 3.0M179.5 217.0l-0.5 2.1M191.1 247.3l-0.4 1.7M194.1 216.7l0.0 3.4M191.1 203.4l-0.0 2.0M251.9 230.2l0.7 1.9M195.3 212.2l-0.1 3.2M219.1 230.6l0.5 1.9M244.4 263.2l-0.5 2.6M236.3 209.3l-0.7 3.3M277.9 254.5l0.8 1.4M241.5 205.2l-0.5 1.8M188.2 254.3l0.2 3.2M239.7 221.5l0.8 3.2M254.9 214.2l-0.1 1.9M221.9 222.6l-0.5 2.2M185.5 267.0l-0.5 1.5M262.8 260.4l-0.0 1.9M218.8 265.1l0.8 1.5M160.1 250.9l0.0 2.5M200.2 254.6l-0.1 1.4M197.1 208.4l0.9 2.2M199.4 251.7l-0.4 2.0M177.3 263.9l-0.6 2.9M247.5 255.6l-0.2 1.9M175.8 261.8l-0.3 3.1M187.0 243.7l0.7 1.5M212.6 248.1l0.6 3.2M215.3 258.2l0.4 1.7M253.3 258.1l-0.1 3.2M263.5 211.5l0.7 2.7M254.8 239.4l-0.1 2.4M185.1 259.2l-0.4 1.9M182.2 268.1l-0.6 2.8M179.4 255.9l0.7 2.6M165.7 214.7l0.4 2.6M160.5 219.5l0.2 2.3M232.5 204.0l0.7 2.6M229.3 213.0l-0.3 2.5M224.9 250.4l-0.3 3.2M168.2 264.9l0.2 1.7M197.8 250.3l0.4 1.9M277.3 229.5l0.7 3.1M270.8 235.3l-0.6 2.5M163.3 262.9l-0.3 2.2M167.9 222.0l0.1 2.2M277.2 229.4l0.9 1.5M264.3 263.6l-0.5 1.9M219.9 220.1l0.8 2.3M203.9 205.1l0.3 2.7M226.5 210.4l-0.2 2.1M212.8 259.4l0.8 1.5M256.0 242.5l-0.5 2.7M198.1 253.3l0.5 1.5M266.5 257.9l-0.4 1.5M163.8 209.3l0.2 2.3M247.0 228.0l0.5 2.2M177.1 249.3l0.5 1.5M150.4 245.4l0.5 3.1M186.8 255.2l0.8 3.1M227.1 211.4l0.1 3.3M194.7 243.0l0.9 2.2M159.5 255.8l-0.3 1.9M187.0 227.7l-0.3 2.0M163.6 226.9l-0.6 2.2M255.2 225.3l0.2 2.4M241.4 263.8l0.9 3.2M233.4 237.3l0.4 2.8M195.0 252.5l0.6 2.4M196.4 205.2l0.4 2.9M223.0 212.9l-0.6 3.2M223.8 246.3l-0.1 1.5M225.2 264.2l-0.2 1.5M247.8 244.7l0.8 3.1M202.8 254.6l-0.1 2.1M204.6 252.1l0.5 2.6M159.2 224.2l-0.1 1.5M197.0 213.4l-0.6 2.9M199.3 210.4l0.6 2.9M150.2 253.3l0.8 2.2M256.0 247.8l0.2 2.3M235.0 264.8l-0.4 2.3M152.3 250.7l-0.5 2.1M204.4 257.3l-0.2 3.1M231.6 253.0l-0.2 1.8M196.6 213.7l0.8 1.6M181.8 248.9l-0.6 1.5M234.3 214.8l0.1 3.3M218.1 268.6l-0.0 1.9M184.4 238.3l-0.5 3.1M227.8 243.6l0.2 1.6M167.2 221.2l-0.2 1.9M200.8 248.5l-0.5 2.9M201.7 266.3l-0.1 3.4M167.7 216.2l0.9 2.6M235.1 253.3l0.3 2.4M173.0 260.0l-0.0 3.3M170.1 250.8l0.3 2.8M157.9 244.2l0.1 1.9M219.8 255.0l-0.4 3.0M159.9 259.8l0.2 1.9M230.9 264.8l0.7 2.1M222.2 205.3l0.8 1.9M178.6 256.7l-0.5 1.4M175.9 265.0l-0.2 2.1M192.4 199.5l0.4 2.1M236.4 262.0l0.7 3.3M201.2 220.2l-0.2 1.9M287.7 226.0l-0.6 1.7M262.3 243.6l-0.1 3.2M170.0 243.8l-0.2 2.7M172.8 257.1l0.0 1.7M225.0 245.6l0.8 2.8M199.9 212.1l0.1 3.3M219.7 264.7l-0.3 2.6M192.9 252.5l-0.5 2.6M203.4 213.0l0.2 1.8M240.7 257.2l-0.2 2.8M167.6 225.4l-0.4 3.0M226.3 219.7l0.6 2.0M183.6 208.0l0.2 2.7M168.9 226.8l0.0 1.6M178.3 245.4l0.3 2.4M173.3 208.7l0.8 2.5M193.1 243.4l-0.6 2.3M150.4 235.9l-0.3 1.5M204.6 262.6l0.5 2.7M206.4 260.8l0.2 2.9M173.1 265.7l-0.4 1.4M180.0 258.5l-0.1 2.7M178.3 257.2l0.1 1.4M162.5 214.2l0.4 2.0M175.9 206.2l-0.4 1.6M262.1 212.2l-0.2 2.1M199.9 248.2l-0.4 1.5M172.1 213.7l0.7 3.0M157.8 248.0l-0.6 2.4M252.8 252.3l-0.2 1.6M168.6 205.7l0.1 3.0M241.3 255.4l0.5 2.9M200.1 201.6l-0.1 3.2M259.6 213.6l0.9 2.3M148.5 252.5l-0.5 2.2M185.4 254.0l0.1 1.5M251.4 259.4l-0.4 2.4M163.2 244.1l-0.2 1.8M198.5 206.0l0.6 1.8M242.5 217.4l0.1 1.9M153.3 246.4l0.4 2.0M183.8 243.1l0.5 2.7M222.5 264.8l0.0 2.8M166.4 227.3l0.5 2.5M195.7 242.4l0.3 1.9M179.8 216.0l0.1 2.5M168.6 204.9l-0.1 2.0M225.7 215.6l0.1 2.2M146.3 245.2l0.9 1.8M253.6 259.2l-0.7 2.0M211.4 204.3l-0.7 1.7M210.5 214.4l0.1 2.8M189.5 210.0l0.4 2.1M256.4 215.5l-0.0 1.5M162.2 260.7l0.5 2.1M180.8 266.4l0.6 3.0M250.0 226.6l-0.7 2.9M220.5 253.7l0.2 2.8M264.3 230.2l0.1 2.9M202.8 218.4l-0.7 3.1M164.8 219.9l-0.1 2.2M239.2 244.3l0.4 2.0M168.3 223.9l-0.6 1.5M234.3 255.7l-0.1 2.2M236.7 216.1l0.6 1.4M163.1 207.8l0.3 4.3M206.2 196.7l0.6 3.9M272.1 261.8l0.2 3.9M211.9 273.4l-0.5 3.4M189.5 271.1l-0.3 3.9M176.9 269.6l-0.4 3.4M158.2 261.7l0.6 3.7M141.5 241.9l-0.4 3.9"/>
<path stroke="#c2406f" d="M154.5 227.3l-0.3 1.8M156.2 230.1l0.8 2.7M251.7 260.0l-0.7 3.4M194.5 212.2l0.2 2.8M254.7 254.8l-0.0 3.2M247.5 255.5l-0.1 1.8M161.2 260.5l0.2 3.2M155.7 229.6l-0.1 2.4M227.1 249.1l0.4 2.1M216.5 259.9l-0.5 3.4M194.9 241.8l0.5 3.3M186.8 255.8l0.4 2.8M222.3 264.9l0.5 3.0M216.4 208.4l0.3 3.1M204.2 213.4l0.8 2.3M213.0 221.3l-0.2 2.3M195.8 244.5l-0.2 2.1M168.6 220.1l-0.1 1.7M173.5 230.3l0.5 2.1M197.7 213.8l0.5 2.6M228.9 214.4l0.9 3.0M180.3 256.1l-0.2 2.9M280.6 230.5l0.7 2.2M180.5 241.4l0.1 2.5M213.4 216.6l0.6 2.3M188.5 210.9l-0.4 3.1M212.4 268.4l0.5 2.6M247.5 200.9l-0.0 1.7M156.2 254.6l0.3 2.6M158.9 248.0l-0.6 3.2M201.2 210.1l-0.3 1.9M154.3 249.1l-0.5 1.7M175.7 245.6l0.5 3.2M254.3 245.9l-0.0 3.0M174.9 204.2l0.4 2.4M183.2 251.5l-0.3 1.7M221.8 258.2l0.7 2.2M225.3 257.5l0.1 2.6M215.0 221.7l0.4 2.6M214.6 208.1l0.7 3.2M237.1 259.8l-0.2 2.0M210.5 210.8l-0.2 2.0M187.7 240.6l0.0 2.6M238.6 224.2l-0.2 1.9M227.1 253.6l0.1 2.2M247.4 220.8l-0.0 2.9M199.5 253.7l0.1 3.1M164.3 258.3l0.3 3.3M185.1 247.9l0.1 2.4M229.2 250.2l-0.6 1.9M263.1 249.2l0.9 2.7M233.5 205.1l0.1 2.6M249.2 221.4l0.1 1.8M287.4 223.9l-0.7 2.7M151.8 254.3l0.2 1.8M206.6 257.5l0.0 3.2M223.1 260.6l0.6 1.9M266.3 263.6l-0.5 2.6M183.4 244.6l0.4 2.1M167.2 222.2l0.1 2.3M221.2 205.6l-0.4 3.3M222.7 210.4l0.0 2.1M195.6 212.1l-0.4 1.9M187.3 221.3l0.3 1.6M229.9 262.4l-0.5 3.1M242.1 245.2l-0.5 1.8M153.2 227.7l-0.1 2.1M181.7 246.5l-0.3 2.9M188.6 239.3l0.9 2.9M186.2 249.8l0.0 3.0M247.1 210.5l0.7 3.0M219.8 245.4l-0.2 2.9M266.0 222.4l-0.5 2.3M157.9 220.8l-0.4 2.4M191.3 205.4l-0.2 2.1M191.5 214.1l0.3 2.4M234.6 239.9l0.5 1.7M158.3 224.2l0.6 2.9M171.5 204.5l0.7 3.4M198.4 208.2l0.1 2.2M192.4 220.1l-0.6 2.0M167.7 210.7l0.4 3.0M199.0 202.3l-0.1 1.7M228.4 213.9l-0.1 2.2M174.8 224.7l0.5 1.8M198.7 250.7l-0.6 2.8M243.2 228.0l0.3 1.7M227.5 214.9l0.5 2.7M234.4 250.2l-0.6 1.5M186.6 214.2l0.4 2.7M203.5 259.6l-0.4 2.8M164.1 256.3l-0.5 1.5M241.6 212.7l0.7 3.2M193.2 260.1l-0.5 2.7M208.6 214.9l0.8 1.9M168.7 261.2l0.5 2.0M235.2 207.4l-0.1 1.7M253.7 210.0l0.0 3.0M201.0 207.3l0.5 2.5M201.0 199.9l0.8 3.3M241.3 212.7l-0.7 2.5M180.0 207.4l-0.3 2.6M186.9 215.7l-0.1 2.8M177.2 253.2l0.8 2.6M242.2 263.9l0.3 3.3M199.9 261.4l0.7 2.0M250.9 241.1l0.2 3.4M235.3 203.1l-0.5 3.3M254.2 209.6l-0.1 1.8M239.0 239.1l0.0 2.2M248.6 253.2l0.3 1.6M180.8 207.5l0.8 3.2M202.8 248.0l-0.5 3.0M210.7 247.2l-0.0 2.2M172.4 233.6l0.1 2.8M234.3 224.5l0.7 2.1M176.5 246.2l0.5 3.0M223.9 204.9l-0.4 2.5M154.3 227.4l0.2 1.8M186.1 238.0l0.8 2.9M183.8 210.3l0.0 3.3M200.2 214.7l-0.0 2.6M158.9 256.2l-0.1 1.9M225.3 207.8l-0.4 2.9M224.6 258.3l-0.7 2.8M231.8 212.4l0.0 3.0M177.6 203.7l-0.3 1.6M159.6 242.9l-0.6 2.2M170.7 220.9l-0.3 2.2M171.4 244.8l-0.5 3.2M204.6 231.5l-0.4 1.6M193.0 208.1l0.7 2.6M250.9 226.4l-0.0 1.8M170.4 245.4l0.8 1.9M279.8 236.7l-0.2 1.4M189.1 260.3l0.2 2.6M230.5 206.9l-0.5 3.3M193.4 268.5l-0.6 2.0M250.2 223.6l0.3 3.2M176.1 206.2l-0.2 2.4M173.3 231.3l-0.5 3.1M157.3 225.0l0.8 2.6M264.6 226.9l-0.6 1.6M203.8 229.8l0.8 3.2M161.6 256.5l-0.0 2.6M273.7 215.6l-0.3 3.2M194.6 257.6l-0.2 3.4M261.3 258.2l0.5 1.7M216.1 251.5l0.7 3.2M266.7 212.5l0.9 1.7M192.8 201.1l0.7 1.9M187.0 267.4l-0.5 1.6M225.4 207.6l0.4 3.3M164.6 211.6l-0.0 3.0M227.0 209.2l-0.2 3.4M202.4 256.2l0.8 2.6M170.6 213.9l0.0 3.2M238.9 218.4l0.5 2.1M182.1 260.7l0.4 2.7M183.7 248.0l-0.3 1.5M215.0 260.5l0.8 2.9M259.1 223.8l-0.2 2.7M192.1 208.6l0.3 1.9M168.7 214.6l-0.4 2.1M164.0 256.4l0.6 3.0M181.5 242.6l-0.0 1.5M169.0 251.9l-0.3 2.5M247.0 270.3l-0.3 1.9M208.1 210.1l-0.6 1.9M157.7 248.3l-0.6 3.2M167.6 254.1l0.3 1.8M228.1 269.0l0.6 2.9M191.2 239.4l0.8 2.8M231.5 206.2l-0.5 2.5M173.2 249.7l0.5 2.9M248.4 205.5l-0.5 2.6M161.8 246.2l0.0 3.1M226.1 259.1l0.8 1.9M183.6 266.7l0.4 2.9M189.5 215.5l-0.3 3.2M245.9 259.3l-0.4 2.4M182.5 262.5l0.3 2.2M193.4 269.6l-0.1 2.5M248.3 242.1l-0.3 1.6M237.9 211.4l0.8 2.1M203.5 219.5l-0.6 3.1M247.8 246.0l0.1 3.4M277.1 226.1l-0.6 1.9M223.7 239.4l0.7 2.8M235.1 221.6l-0.1 3.2M244.3 216.3l0.1 2.2M184.8 209.5l-0.4 2.8M148.6 246.5l-0.1 1.9M270.2 241.8l-0.6 3.1M224.2 208.7l0.1 2.4M174.3 204.5l-0.2 1.4M178.7 243.9l-0.6 2.3M255.8 228.5l0.9 2.6M239.3 207.3l0.7 3.3M201.4 209.5l0.2 2.2M263.9 241.7l0.1 3.0M173.7 247.9l0.6 1.7M154.4 223.7l0.9 3.2M238.2 251.6l-0.3 2.5M159.3 220.2l0.4 2.9M220.1 242.6l-0.3 2.1M176.9 264.5l-0.1 1.8M241.1 261.3l0.7 1.7M227.7 249.8l0.6 3.1M213.0 260.1l0.3 2.5M205.4 258.7l0.9 3.0M226.6 210.2l-0.5 2.9M178.8 217.2l0.5 3.0M196.8 254.4l0.7 2.7M196.1 249.9l-0.5 3.2M184.1 249.2l-0.7 2.0M223.0 206.6l-0.5 1.6M158.5 221.2l0.0 2.5M157.4 220.4l-0.2 2.5M217.2 256.2l-0.4 3.1M217.6 210.6l-0.1 1.7M253.9 215.1l-0.6 2.1M162.9 247.9l0.7 1.6M231.5 252.4l-0.3 2.3M241.5 246.8l0.5 2.3M214.6 220.0l-0.4 3.3M246.2 227.7l-0.3 2.5M209.0 247.6l-0.3 1.5M188.1 254.3l-0.3 2.0M210.6 214.8l-0.4 2.7M187.8 241.3l-0.1 2.7M194.6 214.9l0.7 2.6M147.3 248.0l-0.4 2.6M196.8 199.2l-0.1 3.3M197.7 250.6l0.1 1.5M222.6 247.6l0.8 2.5M223.7 248.0l0.0 2.7M173.2 220.1l0.5 2.7M279.2 233.3l-0.5 1.6M193.8 257.3l0.3 3.3M253.5 254.5l0.0 2.5M188.7 252.8l-0.7 2.1M241.7 249.8l-0.5 2.0M216.1 262.8l-0.4 2.9M256.6 210.6l-0.3 2.3M232.9 216.5l-0.5 2.4M168.5 248.9l0.8 2.1M170.8 217.1l0.2 2.1M176.5 202.2l-0.1 1.8M240.8 209.0l0.4 2.8M207.4 247.4l-0.5 1.6M205.6 206.5l0.3 1.9M243.8 260.3l-0.6 3.0M190.8 202.7l0.8 2.8M195.7 253.4l-0.4 3.3M183.9 216.5l0.8 3.0M269.9 213.3l0.7 3.0M232.5 262.2l0.2 1.6M149.1 251.0l-0.3 1.9M243.8 256.4l-0.2 2.9M233.9 207.1l-0.4 3.2M247.6 202.5l0.1 2.3M210.1 273.6l0.7 1.7M217.9 260.2l0.1 2.0M264.4 219.9l-0.3 3.2M186.4 208.6l0.2 2.7M207.9 261.4l-0.1 1.5M253.0 242.3l0.5 2.7M180.2 249.5l0.2 2.0M242.3 253.5l0.8 3.3M154.8 250.1l-0.5 1.8M236.6 244.7l0.5 2.9M200.2 253.2l-0.6 2.0M244.5 215.6l-0.4 2.9M165.8 246.2l0.0 2.6M218.3 216.9l0.6 2.8M249.0 213.2l-0.6 2.1M253.2 254.4l0.5 1.6M197.9 206.0l0.7 2.2M233.3 239.8l0.4 1.8M202.5 217.1l0.6 2.4M186.3 268.0l0.7 1.7M272.6 261.4l0.4 2.5M248.7 223.0l0.3 3.4M158.4 260.1l0.3 2.1M244.7 266.3l-0.7 3.0M234.9 256.2l0.5 1.7M265.9 227.3l0.7 1.5M256.0 249.9l0.4 2.5M181.8 204.2l0.1 3.2M286.4 228.4l0.1 2.0M174.8 214.0l-0.6 1.4M245.1 262.6l-0.2 2.7M174.9 208.6l0.5 1.9M184.3 255.3l0.9 2.3M184.3 240.8l0.1 1.8M202.2 203.0l-0.2 3.1M242.2 239.2l0.7 3.1M245.6 204.8l-0.2 3.3M235.9 202.7l-0.1 1.9M248.1 251.7l-0.3 3.3M237.6 260.5l0.7 2.7M218.9 221.9l0.4 2.1M174.9 203.6l0.8 2.9M168.6 258.3l0.6 3.3M196.8 204.7l0.3 2.1M273.8 225.8l-0.5 2.0M270.7 232.6l-0.2 2.2M235.9 240.5l-0.2 1.8M240.0 260.6l-0.3 2.1M199.1 213.2l0.2 1.7M236.1 243.5l-0.7 1.7M216.1 204.6l-0.0 3.2M202.1 263.7l-0.0 3.1M208.3 221.8l-0.2 1.6M262.8 256.6l-0.6 2.0M147.0 245.1l0.1 1.8M194.3 199.1l-0.6 1.9M219.6 218.9l0.0 2.0M260.4 243.6l-0.3 2.3M193.2 207.0l-0.1 2.2M269.3 233.1l0.3 1.5M235.2 202.2l-0.4 3.2M197.7 256.8l0.2 1.5M164.4 218.9l0.5 3.0M244.6 249.2l0.1 2.2M199.2 210.1l-0.4 1.4M171.9 259.8l-0.6 2.9M181.3 224.3l-0.4 2.6M250.2 227.3l0.2 2.8M185.4 214.5l-0.5 1.7M192.7 239.0l0.1 3.2M210.3 264.5l0.9 1.9M253.9 225.3l0.7 2.1M176.0 260.1l-0.2 3.3M194.9 253.6l-0.1 2.2M189.3 214.4l-0.1 2.5M228.8 214.5l0.7 1.4M236.8 238.4l-0.5 3.4M204.0 207.9l0.8 2.9M213.8 215.8l-0.4 1.9M243.1 249.4l-0.6 3.4M152.0 244.4l0.9 2.2M201.3 243.5l0.5 1.6M221.2 254.5l0.8 2.1M195.5 212.8l-0.6 1.7M164.1 209.8l0.8 1.7M259.4 258.6l0.4 2.9M226.1 239.7l0.0 1.7M193.2 267.4l0.9 2.5M261.9 215.1l0.2 3.4M248.6 240.4l-0.1 3.1M220.4 246.9l-0.0 2.5M202.0 203.8l0.8 2.6M192.3 258.5l0.5 3.1M168.4 240.8l-0.6 2.9M193.4 254.9l0.8 2.7M252.5 211.0l0.4 1.5M193.5 205.0l0.8 1.7M178.9 244.1l-0.3 1.4M212.1 202.9l0.6 1.4M166.3 209.8l-0.3 2.3M212.8 270.2l0.8 3.3M190.7 255.3l0.2 2.9M225.0 211.1l-0.6 2.0M254.7 209.9l0.3 3.2M202.5 267.1l0.5 2.8M264.6 218.9l0.2 2.4M193.7 236.9l0.1 2.5M250.9 245.3l-0.5 1.7M235.8 258.3l0.3 2.8M227.2 263.4l-0.3 2.0M198.2 208.4l-0.5 2.5M220.5 263.8l0.2 3.3M272.4 244.2l0.5 3.3M232.1 218.5l-0.2 1.9M274.0 217.4l0.6 2.0M224.1 214.5l0.8 1.6M201.8 253.0l0.4 1.9M163.6 253.3l0.2 1.6M167.8 203.6l0.4 4.1M182.0 198.0l-0.5 3.2M227.3 196.2l-0.3 4.2M268.7 263.7l0.2 2.5M192.3 270.5l0.5 3.5M161.5 261.5l0.1 4.0"/>
<path stroke="#cf5480" d="M176.0 204.2l0.8 2.9M250.1 243.4l-0.6 1.7M214.8 208.2l0.1 2.8M229.6 200.5l-0.4 1.8M231.6 226.6l0.1 3.0M194.7 253.5l-0.1 1.6M270.4 245.1l0.6 1.6M274.3 220.5l-0.4 2.3M178.4 251.6l0.1 1.8M249.2 226.8l-0.1 2.7M233.7 243.6l-0.5 3.3M154.5 232.2l0.7 1.4M197.5 256.1l0.3 2.3M190.3 254.2l0.9 3.3M201.8 251.3l-0.2 2.9M172.8 256.7l0.4 1.5M159.9 223.8l-0.5 2.7M203.6 203.5l0.2 2.9M203.0 200.6l0.2 3.4M169.7 207.5l0.8 3.3M231.2 226.3l-0.3 2.5M180.0 221.0l0.6 3.3M242.1 225.7l0.2 3.1M257.6 249.1l0.5 3.1M165.9 216.5l0.6 2.4M254.6 255.1l0.8 2.3M233.0 271.2l-0.3 3.1M182.4 224.8l0.5 3.0M208.1 221.9l0.2 2.9M203.9 255.2l-0.5 2.4M165.2 254.9l-0.1 2.5M221.4 202.9l0.2 2.7M271.8 221.1l-0.4 1.6M231.0 198.3l-0.2 1.7M256.6 208.6l0.3 1.6M189.8 259.0l0.5 1.9M186.6 217.1l-0.1 2.1M188.6 241.8l-0.0 2.1M258.0 252.5l0.8 3.4M155.8 254.4l0.6 2.4M188.1 255.3l0.5 2.1M166.2 219.1l-0.7 2.4M171.7 226.7l-0.3 1.4M185.7 247.9l0.6 3.0M246.6 227.0l0.8 3.4M220.2 261.1l-0.5 3.3M174.8 222.1l0.3 1.5M162.5 239.1l0.0 2.4M214.4 261.9l-0.1 1.8M227.8 258.3l-0.0 2.0M261.1 245.0l0.4 3.2M202.8 248.7l-0.2 2.8M203.8 247.9l-0.6 2.9M267.6 233.4l0.8 2.2M172.2 267.7l-0.5 1.5M153.9 221.5l0.1 2.1M239.9 266.7l-0.0 2.9M169.9 255.2l0.4 1.8M152.8 252.7l-0.6 1.5M180.9 250.9l0.9 3.0M206.7 258.9l0.2 1.5M193.7 205.2l0.8 1.8M181.2 207.1l-0.6 3.2M251.3 258.1l-0.4 1.9M260.7 211.6l-0.5 3.0M201.0 214.2l0.7 2.5M242.5 205.6l0.6 1.8M240.4 241.3l-0.4 2.4M176.9 224.0l0.5 2.4M263.1 259.2l-0.2 1.5M166.7 256.9l0.8 3.1M233.4 253.8l-0.3 1.9M167.2 243.4l0.0 2.8M193.3 219.3l-0.2 2.4M170.3 218.5l0.5 1.6M229.0 219.5l0.9 3.4M226.6 218.2l-0.4 1.9M275.0 226.7l-0.6 3.4M213.5 246.9l-0.2 1.9M165.2 209.6l0.2 1.5M277.3 231.4l0.1 1.7M237.1 245.5l0.1 2.5M185.4 202.3l-0.6 2.4M186.9 256.5l-0.5 1.9M175.0 249.7l0.2 2.3M189.7 200.2l0.9 3.3M190.3 220.7l-0.0 3.2M265.9 253.5l0.0 2.8M180.5 261.0l-0.2 2.5M166.6 223.2l-0.2 1.7M263.0 251.1l0.6 3.3M271.9 238.1l0.1 2.1M273.7 216.4l0.1 2.6M169.7 247.3l0.5 2.3M266.5 242.2l0.6 1.5M252.2 260.3l-0.3 2.4M223.4 210.7l0.7 2.9M176.8 206.2l0.8 3.0M237.6 207.9l-0.5 2.5M219.6 222.3l0.2 1.8M191.1 265.8l-0.0 2.8M176.9 214.6l0.3 2.8M170.2 249.9l-0.3 2.1M257.4 205.0l0.0 2.0M274.4 227.6l0.2 1.6M253.5 228.6l-0.7 2.6M209.6 221.8l0.7 1.7M187.4 239.9l0.5 2.2M214.5 253.8l0.8 2.8M287.0 235.9l-0.6 1.9M163.8 250.0l-0.2 2.3M212.7 257.6l-0.5 2.7M253.2 221.6l0.0 2.4M273.2 220.5l0.6 1.8M191.4 270.5l0.4 2.9M166.4 215.1l-0.0 1.5M222.4 267.1l-0.6 2.6M209.6 243.9l-0.3 2.2M239.0 203.4l-0.3 1.7M173.2 245.3l-0.4 2.3M219.6 258.3l0.4 2.7M204.6 220.7l0.8 3.0M236.3 261.6l-0.6 1.9M199.8 203.2l-0.3 1.5M253.1 245.3l0.4 1.9M175.0 239.0l0.8 1.4M170.1 262.8l0.3 1.9M172.1 256.4l0.5 1.9M240.0 226.9l0.7 2.5M216.0 211.9l0.4 2.1M277.9 245.0l0.0 1.7M225.7 256.2l-0.5 1.6M192.1 239.0l-0.5 2.4M235.2 204.6l0.8 1.8M264.7 211.2l0.7 3.0M176.2 219.5l-0.1 3.2M243.8 248.3l0.2 3.2M272.6 245.3l0.5 1.6M222.3 218.8l-0.6 3.1M170.1 222.1l-0.4 1.4M261.4 247.5l-0.6 1.4M258.5 245.3l0.1 2.8M229.0 252.1l0.7 2.7M196.7 257.5l-0.0 3.1M209.4 265.0l0.0 2.2M226.7 221.2l-0.4 2.2M197.0 252.1l0.6 3.2M254.0 211.2l0.3 2.6M214.2 220.7l0.6 1.5M244.5 241.1l-0.4 3.1M198.1 238.5l-0.5 1.5M175.3 218.4l0.1 2.7M163.7 220.8l0.7 1.6M228.0 255.7l0.7 3.1M235.0 208.6l0.4 2.5M254.2 208.9l0.2 1.5M274.7 235.8l-0.2 2.0M235.5 258.8l-0.0 3.0M229.3 255.8l-0.6 2.8M213.4 218.1l-0.6 1.5M229.4 244.0l0.5 1.5M203.4 260.8l0.5 2.3M167.7 219.1l0.3 2.6M193.2 250.7l0.6 2.4M188.6 241.5l0.0 3.4M214.4 217.7l0.2 1.8M280.4 235.7l0.4 1.7M174.7 217.6l-0.1 1.6M236.6 214.3l0.1 3.1M227.3 214.7l0.4 2.6M159.1 256.5l-0.4 1.9M193.7 204.1l0.3 2.0M234.6 242.1l0.5 1.4M225.8 202.9l0.7 2.2M185.0 259.1l0.6 1.5M150.0 248.3l0.6 2.8M201.3 206.0l0.6 2.3M169.8 254.6l-0.6 2.7M222.7 213.9l0.6 2.9M194.8 215.9l0.8 1.6M198.8 254.5l0.9 3.0M254.7 241.8l0.4 2.7M271.9 259.8l0.6 2.8M195.3 204.7l-0.5 2.3M247.2 218.2l-0.6 1.7M177.3 205.0l0.7 1.5M167.8 211.3l-0.7 1.5M249.1 228.2l0.7 3.1M239.5 225.5l0.4 1.9M258.3 259.0l0.4 3.4M180.0 212.8l-0.1 2.7M273.8 229.0l-0.0 2.4M195.2 210.1l0.9 1.5M187.0 256.8l0.4 3.2M152.2 253.4l0.6 3.0M247.5 245.6l0.8 3.2M232.8 256.6l0.3 2.0M215.2 219.9l0.7 2.8M257.5 245.5l0.9 3.3M173.0 201.6l-0.2 3.0M235.2 272.0l-0.1 3.1M158.1 261.1l-0.3 2.5"/>
</g>
<g fill="none" stroke-width="1.3" stroke-linecap="round">
<path stroke="#a02a56" d="M154.6 232.0l1.6 0.3M155.8 232.0l1.6 0.3M157.4 232.0l1.6 0.3M158.3 231.9l1.6 0.3M159.4 232.6l1.6 0.3M161.5 232.0l1.6 0.3M165.4 232.7l1.6 0.3M166.7 232.1l1.6 0.3M169.7 232.4l1.6 0.3M170.9 233.0l1.6 0.3M171.7 232.3l1.6 0.3M173.7 232.8l1.6 0.3M177.5 232.7l1.6 0.3M178.5 233.1l1.6 0.3M181.2 232.5l1.6 0.3M182.9 233.3l1.6 0.3M188.8 233.7l1.6 0.3M190.7 233.3l1.6 0.4M193.5 233.7l1.6 0.4M200.9 235.2l1.6 0.4M202.0 235.5l1.6 0.4M205.6 235.3l1.6 0.4M196.2 218.8l0.1 1.8M196.3 220.0l0.1 1.8M196.3 220.6l0.1 1.8M196.3 221.8l0.1 1.8M196.5 224.9l0.1 1.8M196.3 225.0l0.1 1.8M196.5 227.9l0.1 1.8M196.6 230.4l0.1 1.8M196.8 231.9l0.1 1.8M168.5 228.7l1.6 0.4M171.4 229.8l1.6 0.4M173.5 230.0l1.6 0.4M174.6 230.6l1.6 0.4"/>
<path stroke="#b43664" d="M150.3 232.3l1.6 0.3M151.3 231.9l1.6 0.3M152.9 232.3l1.6 0.3M156.9 232.4l1.6 0.3M160.5 232.6l1.6 0.3M162.4 232.1l1.6 0.3M163.2 232.2l1.6 0.3M165.7 232.9l1.6 0.3M167.8 232.5l1.6 0.3M175.3 232.6l1.6 0.3M179.1 232.6l1.6 0.3M180.4 233.0l1.6 0.3M184.2 232.7l1.6 0.3M185.1 232.9l1.6 0.3M186.8 233.2l1.6 0.3M189.8 233.5l1.6 0.3M194.6 234.4l1.6 0.4M197.5 234.4l1.6 0.4M200.2 234.5l1.6 0.4M203.5 235.2l1.6 0.4M204.4 235.5l1.6 0.4M196.3 217.9l0.1 1.8M196.2 222.4l0.1 1.8M196.7 229.3l0.1 1.8M196.8 232.0l0.1 1.8M196.6 233.7l0.1 1.8M169.2 229.1l1.6 0.4M175.2 230.7l1.6 0.4M176.6 231.6l1.6 0.4"/>
<path stroke="#c2406f" d="M151.9 232.3l1.6 0.3M153.6 231.7l1.6 0.3M164.2 232.8l1.6 0.3M169.0 232.7l1.6 0.3M172.9 232.7l1.6 0.3M174.4 232.2l1.6 0.3M176.7 233.0l1.6 0.3M182.1 232.9l1.6 0.3M185.8 233.3l1.6 0.3M187.7 233.6l1.6 0.3M191.8 233.6l1.6 0.4M192.8 233.3l1.6 0.4M195.4 234.1l1.6 0.4M196.5 234.4l1.6 0.4M198.3 234.2l1.6 0.4M199.2 234.5l1.6 0.4M203.1 234.8l1.6 0.4M196.3 223.8l0.1 1.8M196.4 226.2l0.1 1.8M196.4 227.5l0.1 1.8M196.5 229.7l0.1 1.8M165.4 227.8l1.6 0.4M166.6 228.7l1.6 0.4M167.5 228.6l1.6 0.4M170.2 229.5l1.6 0.4M172.7 229.8l1.6 0.4"/>
</g></svg>
</div></body></html>
